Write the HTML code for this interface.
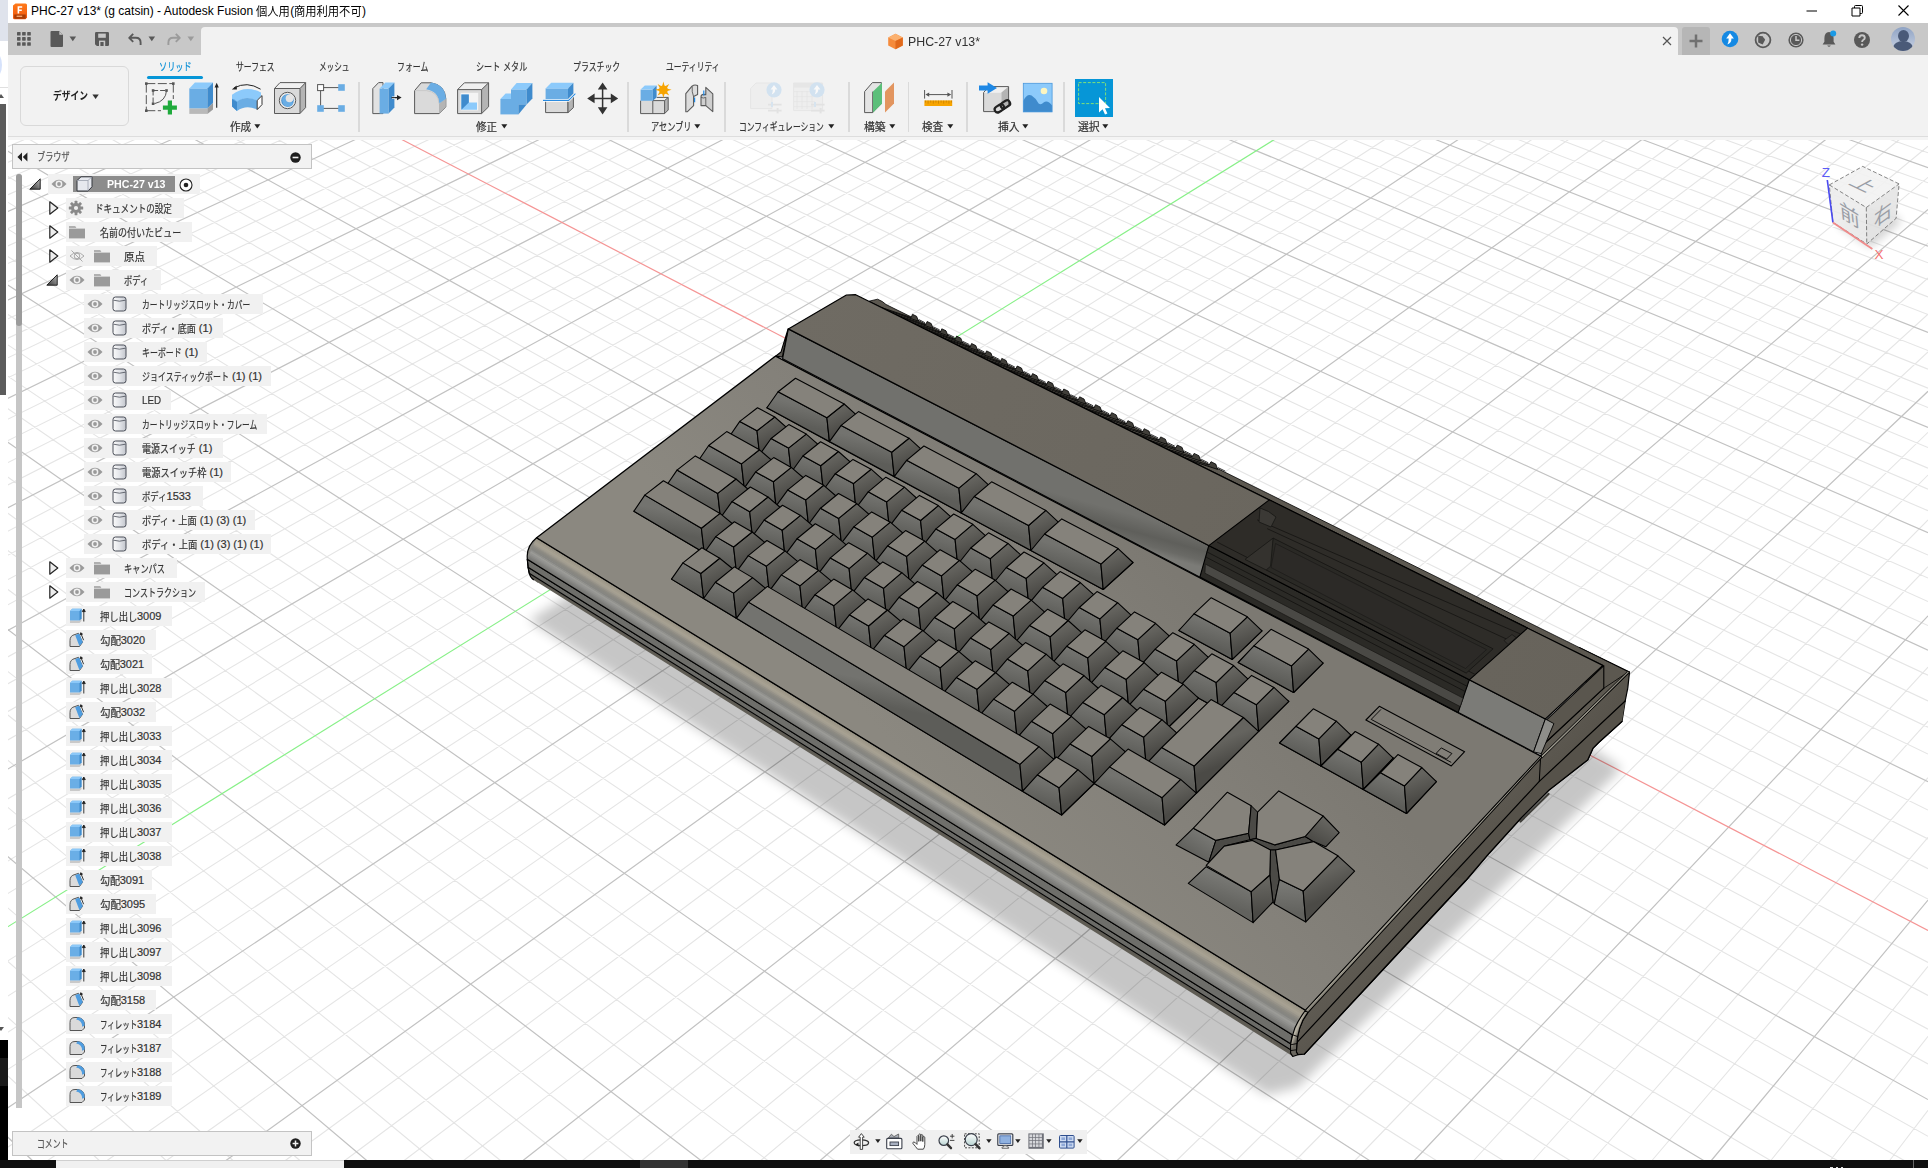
<!DOCTYPE html>
<html lang="ja"><head><meta charset="utf-8"><title>PHC-27 v13* - Autodesk Fusion</title>
<style>
html,body{margin:0;padding:0;background:#fff;overflow:hidden}
body{width:1928px;height:1168px;position:relative;font-family:"Liberation Sans","Noto Sans CJK JP",sans-serif;font-size:11px;color:#333}
#cv{position:absolute;left:0;top:0}
.abs{position:absolute}
.t{position:absolute;white-space:pre;-webkit-text-stroke:0.2px currentColor;transform-origin:0 50%;display:block}
svg.abs{overflow:visible}
.t .c{display:inline-block;vertical-align:top;height:100%}
.t .k{display:inline-block;transform-origin:0 50%;white-space:pre}
.t .a{position:relative;top:-1.4px}

</style></head>
<body>
<svg id="cv" width="1928" height="1168" viewBox="0 0 1928 1168">
<path d="M0.0 149.9L28.0 138.0M0.0 1068.7L100.9 1162.0M0.0 165.7L64.8 138.0M0.0 1010.3L167.8 1162.0M0.0 181.8L101.5 138.0M0.0 954.5L234.7 1162.0M0.0 198.2L138.2 138.0M0.0 901.1L301.6 1162.0M0.0 232.0L211.7 138.0M0.0 800.9L435.4 1162.0M0.0 249.4L248.4 138.0M0.0 753.9L502.3 1162.0M0.0 267.1L285.2 138.0M0.0 708.8L569.2 1162.0M0.0 285.2L321.9 138.0M0.0 665.4L636.0 1162.0M0.0 322.6L395.4 138.0M0.0 583.5L769.8 1162.0M0.0 341.9L432.1 138.0M0.0 544.8L836.7 1162.0M0.0 361.5L468.9 138.0M0.0 507.5L903.6 1162.0M0.0 381.6L505.6 138.0M0.0 471.5L970.5 1162.0M0.0 423.1L579.0 138.0M0.0 403.3L1104.3 1162.0M0.0 444.6L615.8 138.0M0.0 370.9L1171.2 1162.0M0.0 466.5L652.5 138.0M0.0 339.6L1238.0 1162.0M0.0 488.9L689.2 138.0M0.0 309.3L1304.9 1162.0M0.0 535.3L762.7 138.0M0.0 251.6L1438.7 1162.0M0.0 559.3L799.4 138.0M0.0 224.1L1505.6 1162.0M0.0 583.8L836.2 138.0M0.0 197.4L1572.5 1162.0M0.0 609.0L872.9 138.0M0.0 171.6L1639.3 1162.0M0.0 661.2L946.4 138.0M27.1 138.0L1773.1 1162.0M0.0 688.2L983.1 138.0M68.4 138.0L1840.0 1162.0M0.0 716.0L1019.8 138.0M109.7 138.0L1906.9 1162.0M0.0 744.4L1056.5 138.0M151.0 138.0L1928.0 1136.3M0.0 803.5L1130.0 138.0M233.7 138.0L1928.0 1063.9M0.0 834.3L1166.7 138.0M275.0 138.0L1928.0 1029.2M0.0 865.8L1203.4 138.0M316.3 138.0L1928.0 995.4M0.0 898.3L1240.2 138.0M357.6 138.0L1928.0 962.4M0.0 965.8L1313.6 138.0M440.2 138.0L1928.0 899.1M0.0 1001.1L1350.3 138.0M481.6 138.0L1928.0 868.7M0.0 1037.3L1387.1 138.0M522.9 138.0L1928.0 838.9M0.0 1074.6L1423.8 138.0M564.2 138.0L1928.0 810.0M0.0 1152.5L1497.2 138.0M646.8 138.0L1928.0 754.1M45.5 1162.0L1534.0 138.0M688.1 138.0L1928.0 727.2M104.9 1162.0L1570.7 138.0M729.4 138.0L1928.0 700.9M164.4 1162.0L1607.4 138.0M770.8 138.0L1928.0 675.2M283.3 1162.0L1680.9 138.0M853.4 138.0L1928.0 625.5M342.8 1162.0L1717.6 138.0M894.7 138.0L1928.0 601.5M402.2 1162.0L1754.3 138.0M936.0 138.0L1928.0 578.1M461.7 1162.0L1791.0 138.0M977.3 138.0L1928.0 555.1M580.6 1162.0L1864.5 138.0M1059.9 138.0L1928.0 510.7M640.1 1162.0L1901.2 138.0M1101.2 138.0L1928.0 489.2M699.5 1162.0L1928.0 146.2M1142.5 138.0L1928.0 468.2M759.0 1162.0L1928.0 177.3M1183.9 138.0L1928.0 447.6M877.9 1162.0L1928.0 243.1M1266.5 138.0L1928.0 407.6M937.3 1162.0L1928.0 277.9M1307.8 138.0L1928.0 388.2M996.8 1162.0L1928.0 314.2M1349.1 138.0L1928.0 369.2M1056.2 1162.0L1928.0 351.9M1390.4 138.0L1928.0 350.6M1175.1 1162.0L1928.0 432.3M1473.0 138.0L1928.0 314.5M1234.6 1162.0L1928.0 475.1M1514.3 138.0L1928.0 296.9M1294.0 1162.0L1928.0 519.9M1555.6 138.0L1928.0 279.7M1353.5 1162.0L1928.0 566.7M1596.9 138.0L1928.0 262.8M1472.3 1162.0L1928.0 667.1M1679.5 138.0L1928.0 229.9M1531.8 1162.0L1928.0 721.1M1720.8 138.0L1928.0 213.9M1591.2 1162.0L1928.0 777.7M1762.1 138.0L1928.0 198.2M1650.7 1162.0L1928.0 837.3M1803.4 138.0L1928.0 182.8M1769.6 1162.0L1928.0 966.4M1886.0 138.0L1928.0 152.8M1829.0 1162.0L1928.0 1036.3M1927.3 138.0L1928.0 138.2M1888.5 1162.0L1928.0 1110.3" stroke="#e5e5e5" stroke-width="1.1" fill="none"/>
<path d="M0.0 1129.8L34.0 1162.0M0.0 214.9L175.0 138.0M0.0 850.0L368.5 1162.0M0.0 303.7L358.6 138.0M0.0 623.6L702.9 1162.0M0.0 402.1L542.3 138.0M0.0 436.8L1037.4 1162.0M0.0 511.8L726.0 138.0M0.0 280.0L1371.8 1162.0M0.0 634.8L909.6 138.0M0.0 146.5L1706.2 1162.0M0.0 773.6L1093.3 138.0M192.3 138.0L1928.0 1099.6M0.0 1113.0L1460.5 138.0M605.5 138.0L1928.0 781.7M223.9 1162.0L1644.1 138.0M812.1 138.0L1928.0 650.1M521.1 1162.0L1827.7 138.0M1018.6 138.0L1928.0 532.7M818.4 1162.0L1928.0 209.5M1225.2 138.0L1928.0 427.4M1115.7 1162.0L1928.0 391.3M1431.7 138.0L1928.0 332.4M1412.9 1162.0L1928.0 615.8M1638.2 138.0L1928.0 246.2M1710.1 1162.0L1928.0 900.1M1844.7 138.0L1928.0 167.7" stroke="#c2c2c2" stroke-width="1.2" fill="none"/>
<path d="M398.9 138.0L1928.0 930.4" stroke="#f59595" stroke-width="1.2" fill="none"/>
<path d="M0.0 931.6L1276.9 138.0" stroke="#88f088" stroke-width="1.2" fill="none"/>
<defs><filter id="blur" x="-20%" y="-20%" width="140%" height="140%"><feGaussianBlur stdDeviation="6"/></filter></defs><polygon points="529.1,620.2 1267.1,1094.7 1297.9,1087.3 1621.6,768.6 1598.1,752.1 897,389.9" fill="#000" opacity="0.22" filter="url(#blur)"/>
<defs><linearGradient id="g1" gradientUnits="userSpaceOnUse" x1="1420" y1="880" x2="1450" y2="905"><stop offset="0" stop-color="#5e5a52"/><stop offset="1" stop-color="#58544c"/></linearGradient><linearGradient id="g2" gradientUnits="userSpaceOnUse" x1="1292" y1="1030" x2="1299" y2="1033"><stop offset="0" stop-color="#77766f"/><stop offset="0.5" stop-color="#bdb8a9"/><stop offset="1" stop-color="#6a675f"/></linearGradient><linearGradient id="g3" gradientUnits="userSpaceOnUse" x1="1160" y1="555" x2="920" y2="775"><stop offset="0" stop-color="#7c7972"/><stop offset="0.5" stop-color="#84817a"/><stop offset="1" stop-color="#8b8880"/></linearGradient><linearGradient id="g4" gradientUnits="userSpaceOnUse" x1="1420" y1="884" x2="1424.5" y2="888.2"><stop offset="0" stop-color="#5e5b54"/><stop offset="0.5" stop-color="#a19e92"/><stop offset="1" stop-color="#5f5b53"/></linearGradient><linearGradient id="g5" gradientUnits="userSpaceOnUse" x1="1585" y1="712" x2="1588.5" y2="715.6"><stop offset="0" stop-color="#5e5b54"/><stop offset="0.5" stop-color="#a8a598"/><stop offset="1" stop-color="#5f5b53"/></linearGradient><linearGradient id="g6" gradientUnits="userSpaceOnUse" x1="1166.8" y1="524" x2="1158.1" y2="555.3"><stop offset="0" stop-color="#71716d"/><stop offset="0.5" stop-color="#5f5f5b"/><stop offset="0.8" stop-color="#6a6a66"/><stop offset="1" stop-color="#7b7b77"/></linearGradient><linearGradient id="g7" gradientUnits="userSpaceOnUse" x1="788.3" y1="328.9" x2="1602.8" y2="665.4"><stop offset="0" stop-color="#6f6b63"/><stop offset="0.5" stop-color="#6b675f"/><stop offset="1" stop-color="#67635b"/></linearGradient><linearGradient id="g8" gradientUnits="userSpaceOnUse" x1="802.5" y1="404.7" x2="798.1" y2="424.7"><stop offset="0" stop-color="#73736f"/><stop offset="1" stop-color="#5d5d59"/></linearGradient><linearGradient id="g9" gradientUnits="userSpaceOnUse" x1="835.5" y1="410.8" x2="844.4" y2="429.6"><stop offset="0" stop-color="#65645f"/><stop offset="1" stop-color="#4b4a46"/></linearGradient><linearGradient id="g10" gradientUnits="userSpaceOnUse" x1="866.4" y1="438.9" x2="861.8" y2="459.1"><stop offset="0" stop-color="#73736f"/><stop offset="1" stop-color="#5d5d59"/></linearGradient><linearGradient id="g11" gradientUnits="userSpaceOnUse" x1="900.4" y1="445.3" x2="909.1" y2="464.3"><stop offset="0" stop-color="#65645f"/><stop offset="1" stop-color="#4b4a46"/></linearGradient><linearGradient id="g12" gradientUnits="userSpaceOnUse" x1="932.7" y1="474.3" x2="927.7" y2="494.7"><stop offset="0" stop-color="#73736f"/><stop offset="1" stop-color="#5d5d59"/></linearGradient><linearGradient id="g13" gradientUnits="userSpaceOnUse" x1="967.5" y1="480.9" x2="976.3" y2="500.2"><stop offset="0" stop-color="#65645f"/><stop offset="1" stop-color="#4b4a46"/></linearGradient><linearGradient id="g14" gradientUnits="userSpaceOnUse" x1="1001.4" y1="511" x2="996.1" y2="531.7"><stop offset="0" stop-color="#73736f"/><stop offset="1" stop-color="#5d5d59"/></linearGradient><linearGradient id="g15" gradientUnits="userSpaceOnUse" x1="1037.2" y1="517.9" x2="1045.9" y2="537.4"><stop offset="0" stop-color="#65645f"/><stop offset="1" stop-color="#4b4a46"/></linearGradient><linearGradient id="g16" gradientUnits="userSpaceOnUse" x1="1072.7" y1="549" x2="1067" y2="570"><stop offset="0" stop-color="#73736f"/><stop offset="1" stop-color="#5d5d59"/></linearGradient><linearGradient id="g17" gradientUnits="userSpaceOnUse" x1="1109.5" y1="556.3" x2="1118.1" y2="576"><stop offset="0" stop-color="#65645f"/><stop offset="1" stop-color="#4b4a46"/></linearGradient><linearGradient id="g18" gradientUnits="userSpaceOnUse" x1="1212.1" y1="623.5" x2="1205.6" y2="644.9"><stop offset="0" stop-color="#73736f"/><stop offset="1" stop-color="#5d5d59"/></linearGradient><linearGradient id="g19" gradientUnits="userSpaceOnUse" x1="1238.8" y1="625" x2="1247.2" y2="645.1"><stop offset="0" stop-color="#65645f"/><stop offset="1" stop-color="#4b4a46"/></linearGradient><linearGradient id="g20" gradientUnits="userSpaceOnUse" x1="1272.7" y1="655.9" x2="1265.9" y2="677.5"><stop offset="0" stop-color="#73736f"/><stop offset="1" stop-color="#5d5d59"/></linearGradient><linearGradient id="g21" gradientUnits="userSpaceOnUse" x1="1300.1" y1="657.5" x2="1308.3" y2="677.8"><stop offset="0" stop-color="#65645f"/><stop offset="1" stop-color="#4b4a46"/></linearGradient><linearGradient id="g22" gradientUnits="userSpaceOnUse" x1="748.4" y1="426.1" x2="744.1" y2="446.1"><stop offset="0" stop-color="#73736f"/><stop offset="1" stop-color="#5d5d59"/></linearGradient><linearGradient id="g23" gradientUnits="userSpaceOnUse" x1="765.8" y1="423.9" x2="774.9" y2="442.6"><stop offset="0" stop-color="#65645f"/><stop offset="1" stop-color="#4b4a46"/></linearGradient><linearGradient id="g24" gradientUnits="userSpaceOnUse" x1="779.8" y1="443.3" x2="775.4" y2="463.4"><stop offset="0" stop-color="#73736f"/><stop offset="1" stop-color="#5d5d59"/></linearGradient><linearGradient id="g25" gradientUnits="userSpaceOnUse" x1="797.4" y1="441.1" x2="806.5" y2="459.9"><stop offset="0" stop-color="#65645f"/><stop offset="1" stop-color="#4b4a46"/></linearGradient><linearGradient id="g26" gradientUnits="userSpaceOnUse" x1="811.8" y1="460.8" x2="807.2" y2="481.1"><stop offset="0" stop-color="#73736f"/><stop offset="1" stop-color="#5d5d59"/></linearGradient><linearGradient id="g27" gradientUnits="userSpaceOnUse" x1="829.5" y1="458.6" x2="838.6" y2="477.6"><stop offset="0" stop-color="#65645f"/><stop offset="1" stop-color="#4b4a46"/></linearGradient><linearGradient id="g28" gradientUnits="userSpaceOnUse" x1="844.3" y1="478.7" x2="839.6" y2="499"><stop offset="0" stop-color="#73736f"/><stop offset="1" stop-color="#5d5d59"/></linearGradient><linearGradient id="g29" gradientUnits="userSpaceOnUse" x1="862.2" y1="476.4" x2="871.2" y2="495.5"><stop offset="0" stop-color="#65645f"/><stop offset="1" stop-color="#4b4a46"/></linearGradient><linearGradient id="g30" gradientUnits="userSpaceOnUse" x1="877.5" y1="496.8" x2="872.6" y2="517.3"><stop offset="0" stop-color="#73736f"/><stop offset="1" stop-color="#5d5d59"/></linearGradient><linearGradient id="g31" gradientUnits="userSpaceOnUse" x1="895.5" y1="494.6" x2="904.5" y2="513.8"><stop offset="0" stop-color="#65645f"/><stop offset="1" stop-color="#4b4a46"/></linearGradient><linearGradient id="g32" gradientUnits="userSpaceOnUse" x1="911.2" y1="515.3" x2="906.1" y2="535.9"><stop offset="0" stop-color="#73736f"/><stop offset="1" stop-color="#5d5d59"/></linearGradient><linearGradient id="g33" gradientUnits="userSpaceOnUse" x1="929.4" y1="513" x2="938.4" y2="532.4"><stop offset="0" stop-color="#65645f"/><stop offset="1" stop-color="#4b4a46"/></linearGradient><linearGradient id="g34" gradientUnits="userSpaceOnUse" x1="945.6" y1="534.2" x2="940.3" y2="554.9"><stop offset="0" stop-color="#73736f"/><stop offset="1" stop-color="#5d5d59"/></linearGradient><linearGradient id="g35" gradientUnits="userSpaceOnUse" x1="964" y1="531.9" x2="972.9" y2="551.3"><stop offset="0" stop-color="#65645f"/><stop offset="1" stop-color="#4b4a46"/></linearGradient><linearGradient id="g36" gradientUnits="userSpaceOnUse" x1="980.6" y1="553.4" x2="975.2" y2="574.2"><stop offset="0" stop-color="#73736f"/><stop offset="1" stop-color="#5d5d59"/></linearGradient><linearGradient id="g37" gradientUnits="userSpaceOnUse" x1="999.1" y1="551" x2="1008" y2="570.6"><stop offset="0" stop-color="#65645f"/><stop offset="1" stop-color="#4b4a46"/></linearGradient><linearGradient id="g38" gradientUnits="userSpaceOnUse" x1="1016.2" y1="573" x2="1010.7" y2="593.9"><stop offset="0" stop-color="#73736f"/><stop offset="1" stop-color="#5d5d59"/></linearGradient><linearGradient id="g39" gradientUnits="userSpaceOnUse" x1="1035" y1="570.6" x2="1043.8" y2="590.2"><stop offset="0" stop-color="#65645f"/><stop offset="1" stop-color="#4b4a46"/></linearGradient><linearGradient id="g40" gradientUnits="userSpaceOnUse" x1="1052.6" y1="592.9" x2="1046.8" y2="614"><stop offset="0" stop-color="#73736f"/><stop offset="1" stop-color="#5d5d59"/></linearGradient><linearGradient id="g41" gradientUnits="userSpaceOnUse" x1="1071.5" y1="590.5" x2="1080.3" y2="610.3"><stop offset="0" stop-color="#65645f"/><stop offset="1" stop-color="#4b4a46"/></linearGradient><linearGradient id="g42" gradientUnits="userSpaceOnUse" x1="1089.6" y1="613.2" x2="1083.7" y2="634.4"><stop offset="0" stop-color="#73736f"/><stop offset="1" stop-color="#5d5d59"/></linearGradient><linearGradient id="g43" gradientUnits="userSpaceOnUse" x1="1108.8" y1="610.8" x2="1117.5" y2="630.7"><stop offset="0" stop-color="#65645f"/><stop offset="1" stop-color="#4b4a46"/></linearGradient><linearGradient id="g44" gradientUnits="userSpaceOnUse" x1="1127.4" y1="633.9" x2="1121.2" y2="655.3"><stop offset="0" stop-color="#73736f"/><stop offset="1" stop-color="#5d5d59"/></linearGradient><linearGradient id="g45" gradientUnits="userSpaceOnUse" x1="1146.7" y1="631.5" x2="1155.4" y2="651.5"><stop offset="0" stop-color="#65645f"/><stop offset="1" stop-color="#4b4a46"/></linearGradient><linearGradient id="g46" gradientUnits="userSpaceOnUse" x1="1165.9" y1="655" x2="1159.5" y2="676.5"><stop offset="0" stop-color="#73736f"/><stop offset="1" stop-color="#5d5d59"/></linearGradient><linearGradient id="g47" gradientUnits="userSpaceOnUse" x1="1185.4" y1="652.6" x2="1194.1" y2="672.7"><stop offset="0" stop-color="#65645f"/><stop offset="1" stop-color="#4b4a46"/></linearGradient><linearGradient id="g48" gradientUnits="userSpaceOnUse" x1="1205.2" y1="676.6" x2="1198.6" y2="698.2"><stop offset="0" stop-color="#73736f"/><stop offset="1" stop-color="#5d5d59"/></linearGradient><linearGradient id="g49" gradientUnits="userSpaceOnUse" x1="1224.9" y1="674.1" x2="1233.5" y2="694.4"><stop offset="0" stop-color="#65645f"/><stop offset="1" stop-color="#4b4a46"/></linearGradient><linearGradient id="g50" gradientUnits="userSpaceOnUse" x1="1245.3" y1="698.5" x2="1238.4" y2="720.3"><stop offset="0" stop-color="#73736f"/><stop offset="1" stop-color="#5d5d59"/></linearGradient><linearGradient id="g51" gradientUnits="userSpaceOnUse" x1="1265.2" y1="696" x2="1273.7" y2="716.4"><stop offset="0" stop-color="#65645f"/><stop offset="1" stop-color="#4b4a46"/></linearGradient><linearGradient id="g52" gradientUnits="userSpaceOnUse" x1="1307.4" y1="732.6" x2="1300.2" y2="754.5"><stop offset="0" stop-color="#73736f"/><stop offset="1" stop-color="#5d5d59"/></linearGradient><linearGradient id="g53" gradientUnits="userSpaceOnUse" x1="1327.6" y1="730.1" x2="1336" y2="750.6"><stop offset="0" stop-color="#65645f"/><stop offset="1" stop-color="#4b4a46"/></linearGradient><linearGradient id="g54" gradientUnits="userSpaceOnUse" x1="1349.5" y1="755.7" x2="1342.1" y2="777.8"><stop offset="0" stop-color="#73736f"/><stop offset="1" stop-color="#5d5d59"/></linearGradient><linearGradient id="g55" gradientUnits="userSpaceOnUse" x1="1369.9" y1="753.2" x2="1378.3" y2="773.8"><stop offset="0" stop-color="#65645f"/><stop offset="1" stop-color="#4b4a46"/></linearGradient><linearGradient id="g56" gradientUnits="userSpaceOnUse" x1="1392.5" y1="779.3" x2="1384.9" y2="801.5"><stop offset="0" stop-color="#73736f"/><stop offset="1" stop-color="#5d5d59"/></linearGradient><linearGradient id="g57" gradientUnits="userSpaceOnUse" x1="1413.2" y1="776.7" x2="1421.4" y2="797.5"><stop offset="0" stop-color="#65645f"/><stop offset="1" stop-color="#4b4a46"/></linearGradient><linearGradient id="g58" gradientUnits="userSpaceOnUse" x1="725.1" y1="454.7" x2="720.9" y2="474.9"><stop offset="0" stop-color="#73736f"/><stop offset="1" stop-color="#5d5d59"/></linearGradient><linearGradient id="g59" gradientUnits="userSpaceOnUse" x1="750.5" y1="456.9" x2="759.8" y2="475.7"><stop offset="0" stop-color="#65645f"/><stop offset="1" stop-color="#4b4a46"/></linearGradient><linearGradient id="g60" gradientUnits="userSpaceOnUse" x1="764.5" y1="476.8" x2="760.1" y2="497.1"><stop offset="0" stop-color="#73736f"/><stop offset="1" stop-color="#5d5d59"/></linearGradient><linearGradient id="g61" gradientUnits="userSpaceOnUse" x1="782.3" y1="474.6" x2="791.6" y2="493.6"><stop offset="0" stop-color="#65645f"/><stop offset="1" stop-color="#4b4a46"/></linearGradient><linearGradient id="g62" gradientUnits="userSpaceOnUse" x1="796.8" y1="494.9" x2="792.2" y2="515.3"><stop offset="0" stop-color="#73736f"/><stop offset="1" stop-color="#5d5d59"/></linearGradient><linearGradient id="g63" gradientUnits="userSpaceOnUse" x1="814.7" y1="492.6" x2="824" y2="511.7"><stop offset="0" stop-color="#65645f"/><stop offset="1" stop-color="#4b4a46"/></linearGradient><linearGradient id="g64" gradientUnits="userSpaceOnUse" x1="829.6" y1="513.3" x2="824.9" y2="533.8"><stop offset="0" stop-color="#73736f"/><stop offset="1" stop-color="#5d5d59"/></linearGradient><linearGradient id="g65" gradientUnits="userSpaceOnUse" x1="847.7" y1="511" x2="856.9" y2="530.2"><stop offset="0" stop-color="#65645f"/><stop offset="1" stop-color="#4b4a46"/></linearGradient><linearGradient id="g66" gradientUnits="userSpaceOnUse" x1="863.1" y1="532" x2="858.1" y2="552.6"><stop offset="0" stop-color="#73736f"/><stop offset="1" stop-color="#5d5d59"/></linearGradient><linearGradient id="g67" gradientUnits="userSpaceOnUse" x1="881.3" y1="529.7" x2="890.5" y2="549"><stop offset="0" stop-color="#65645f"/><stop offset="1" stop-color="#4b4a46"/></linearGradient><linearGradient id="g68" gradientUnits="userSpaceOnUse" x1="897.1" y1="551.1" x2="892" y2="571.8"><stop offset="0" stop-color="#73736f"/><stop offset="1" stop-color="#5d5d59"/></linearGradient><linearGradient id="g69" gradientUnits="userSpaceOnUse" x1="915.6" y1="548.8" x2="924.7" y2="568.2"><stop offset="0" stop-color="#65645f"/><stop offset="1" stop-color="#4b4a46"/></linearGradient><linearGradient id="g70" gradientUnits="userSpaceOnUse" x1="931.8" y1="570.5" x2="926.6" y2="591.4"><stop offset="0" stop-color="#73736f"/><stop offset="1" stop-color="#5d5d59"/></linearGradient><linearGradient id="g71" gradientUnits="userSpaceOnUse" x1="950.4" y1="568.2" x2="959.5" y2="587.7"><stop offset="0" stop-color="#65645f"/><stop offset="1" stop-color="#4b4a46"/></linearGradient><linearGradient id="g72" gradientUnits="userSpaceOnUse" x1="967.2" y1="590.3" x2="961.7" y2="611.3"><stop offset="0" stop-color="#73736f"/><stop offset="1" stop-color="#5d5d59"/></linearGradient><linearGradient id="g73" gradientUnits="userSpaceOnUse" x1="986" y1="588" x2="995" y2="607.6"><stop offset="0" stop-color="#65645f"/><stop offset="1" stop-color="#4b4a46"/></linearGradient><linearGradient id="g74" gradientUnits="userSpaceOnUse" x1="1003.2" y1="610.5" x2="997.6" y2="631.6"><stop offset="0" stop-color="#73736f"/><stop offset="1" stop-color="#5d5d59"/></linearGradient><linearGradient id="g75" gradientUnits="userSpaceOnUse" x1="1022.2" y1="608.1" x2="1031.2" y2="627.9"><stop offset="0" stop-color="#65645f"/><stop offset="1" stop-color="#4b4a46"/></linearGradient><linearGradient id="g76" gradientUnits="userSpaceOnUse" x1="1039.9" y1="631.1" x2="1034.1" y2="652.3"><stop offset="0" stop-color="#73736f"/><stop offset="1" stop-color="#5d5d59"/></linearGradient><linearGradient id="g77" gradientUnits="userSpaceOnUse" x1="1059.1" y1="628.7" x2="1068.1" y2="648.6"><stop offset="0" stop-color="#65645f"/><stop offset="1" stop-color="#4b4a46"/></linearGradient><linearGradient id="g78" gradientUnits="userSpaceOnUse" x1="1077.4" y1="652.1" x2="1071.4" y2="673.4"><stop offset="0" stop-color="#73736f"/><stop offset="1" stop-color="#5d5d59"/></linearGradient><linearGradient id="g79" gradientUnits="userSpaceOnUse" x1="1096.7" y1="649.6" x2="1105.7" y2="669.7"><stop offset="0" stop-color="#65645f"/><stop offset="1" stop-color="#4b4a46"/></linearGradient><linearGradient id="g80" gradientUnits="userSpaceOnUse" x1="1115.6" y1="673.4" x2="1109.3" y2="694.9"><stop offset="0" stop-color="#73736f"/><stop offset="1" stop-color="#5d5d59"/></linearGradient><linearGradient id="g81" gradientUnits="userSpaceOnUse" x1="1135.1" y1="671" x2="1144" y2="691.1"><stop offset="0" stop-color="#65645f"/><stop offset="1" stop-color="#4b4a46"/></linearGradient><linearGradient id="g82" gradientUnits="userSpaceOnUse" x1="1154.5" y1="695.3" x2="1148.1" y2="716.9"><stop offset="0" stop-color="#73736f"/><stop offset="1" stop-color="#5d5d59"/></linearGradient><linearGradient id="g83" gradientUnits="userSpaceOnUse" x1="1174.3" y1="692.8" x2="1183.1" y2="713.1"><stop offset="0" stop-color="#65645f"/><stop offset="1" stop-color="#4b4a46"/></linearGradient><linearGradient id="g84" gradientUnits="userSpaceOnUse" x1="697.4" y1="481.8" x2="693.2" y2="502"><stop offset="0" stop-color="#73736f"/><stop offset="1" stop-color="#5d5d59"/></linearGradient><linearGradient id="g85" gradientUnits="userSpaceOnUse" x1="726.9" y1="486.2" x2="736.3" y2="505.2"><stop offset="0" stop-color="#65645f"/><stop offset="1" stop-color="#4b4a46"/></linearGradient><linearGradient id="g86" gradientUnits="userSpaceOnUse" x1="740.8" y1="506.6" x2="736.5" y2="527"><stop offset="0" stop-color="#73736f"/><stop offset="1" stop-color="#5d5d59"/></linearGradient><linearGradient id="g87" gradientUnits="userSpaceOnUse" x1="758.8" y1="504.4" x2="768.2" y2="523.5"><stop offset="0" stop-color="#65645f"/><stop offset="1" stop-color="#4b4a46"/></linearGradient><linearGradient id="g88" gradientUnits="userSpaceOnUse" x1="773.2" y1="525.2" x2="768.7" y2="545.7"><stop offset="0" stop-color="#73736f"/><stop offset="1" stop-color="#5d5d59"/></linearGradient><linearGradient id="g89" gradientUnits="userSpaceOnUse" x1="791.4" y1="522.9" x2="800.8" y2="542.1"><stop offset="0" stop-color="#65645f"/><stop offset="1" stop-color="#4b4a46"/></linearGradient><linearGradient id="g90" gradientUnits="userSpaceOnUse" x1="806.2" y1="544" x2="801.5" y2="564.6"><stop offset="0" stop-color="#73736f"/><stop offset="1" stop-color="#5d5d59"/></linearGradient><linearGradient id="g91" gradientUnits="userSpaceOnUse" x1="824.5" y1="541.7" x2="833.9" y2="561"><stop offset="0" stop-color="#65645f"/><stop offset="1" stop-color="#4b4a46"/></linearGradient><linearGradient id="g92" gradientUnits="userSpaceOnUse" x1="839.8" y1="563.3" x2="834.9" y2="584"><stop offset="0" stop-color="#73736f"/><stop offset="1" stop-color="#5d5d59"/></linearGradient><linearGradient id="g93" gradientUnits="userSpaceOnUse" x1="858.3" y1="560.9" x2="867.6" y2="580.4"><stop offset="0" stop-color="#65645f"/><stop offset="1" stop-color="#4b4a46"/></linearGradient><linearGradient id="g94" gradientUnits="userSpaceOnUse" x1="874" y1="582.8" x2="868.9" y2="603.7"><stop offset="0" stop-color="#73736f"/><stop offset="1" stop-color="#5d5d59"/></linearGradient><linearGradient id="g95" gradientUnits="userSpaceOnUse" x1="892.7" y1="580.5" x2="902" y2="600"><stop offset="0" stop-color="#65645f"/><stop offset="1" stop-color="#4b4a46"/></linearGradient><linearGradient id="g96" gradientUnits="userSpaceOnUse" x1="908.9" y1="602.8" x2="903.6" y2="623.8"><stop offset="0" stop-color="#73736f"/><stop offset="1" stop-color="#5d5d59"/></linearGradient><linearGradient id="g97" gradientUnits="userSpaceOnUse" x1="927.7" y1="600.4" x2="937" y2="620.1"><stop offset="0" stop-color="#65645f"/><stop offset="1" stop-color="#4b4a46"/></linearGradient><linearGradient id="g98" gradientUnits="userSpaceOnUse" x1="944.4" y1="623.1" x2="939" y2="644.2"><stop offset="0" stop-color="#73736f"/><stop offset="1" stop-color="#5d5d59"/></linearGradient><linearGradient id="g99" gradientUnits="userSpaceOnUse" x1="963.4" y1="620.7" x2="972.7" y2="640.5"><stop offset="0" stop-color="#65645f"/><stop offset="1" stop-color="#4b4a46"/></linearGradient><linearGradient id="g100" gradientUnits="userSpaceOnUse" x1="980.6" y1="643.9" x2="975" y2="665.1"><stop offset="0" stop-color="#73736f"/><stop offset="1" stop-color="#5d5d59"/></linearGradient><linearGradient id="g101" gradientUnits="userSpaceOnUse" x1="999.8" y1="641.4" x2="1009" y2="661.3"><stop offset="0" stop-color="#65645f"/><stop offset="1" stop-color="#4b4a46"/></linearGradient><linearGradient id="g102" gradientUnits="userSpaceOnUse" x1="1017.6" y1="665" x2="1011.8" y2="686.4"><stop offset="0" stop-color="#73736f"/><stop offset="1" stop-color="#5d5d59"/></linearGradient><linearGradient id="g103" gradientUnits="userSpaceOnUse" x1="1037" y1="662.6" x2="1046.1" y2="682.6"><stop offset="0" stop-color="#65645f"/><stop offset="1" stop-color="#4b4a46"/></linearGradient><linearGradient id="g104" gradientUnits="userSpaceOnUse" x1="1055.2" y1="686.6" x2="1049.2" y2="708"><stop offset="0" stop-color="#73736f"/><stop offset="1" stop-color="#5d5d59"/></linearGradient><linearGradient id="g105" gradientUnits="userSpaceOnUse" x1="1074.8" y1="684.1" x2="1083.9" y2="704.2"><stop offset="0" stop-color="#65645f"/><stop offset="1" stop-color="#4b4a46"/></linearGradient><linearGradient id="g106" gradientUnits="userSpaceOnUse" x1="1093.6" y1="708.5" x2="1087.4" y2="730.2"><stop offset="0" stop-color="#73736f"/><stop offset="1" stop-color="#5d5d59"/></linearGradient><linearGradient id="g107" gradientUnits="userSpaceOnUse" x1="1113.4" y1="706.1" x2="1122.5" y2="726.3"><stop offset="0" stop-color="#65645f"/><stop offset="1" stop-color="#4b4a46"/></linearGradient><linearGradient id="g108" gradientUnits="userSpaceOnUse" x1="1132.8" y1="731" x2="1126.4" y2="752.7"><stop offset="0" stop-color="#73736f"/><stop offset="1" stop-color="#5d5d59"/></linearGradient><linearGradient id="g109" gradientUnits="userSpaceOnUse" x1="1152.8" y1="728.5" x2="1161.8" y2="748.8"><stop offset="0" stop-color="#65645f"/><stop offset="1" stop-color="#4b4a46"/></linearGradient><linearGradient id="g110" gradientUnits="userSpaceOnUse" x1="1177.9" y1="756.8" x2="1171.3" y2="778.7"><stop offset="0" stop-color="#73736f"/><stop offset="1" stop-color="#5d5d59"/></linearGradient><linearGradient id="g111" gradientUnits="userSpaceOnUse" x1="1218.7" y1="741.8" x2="1227.5" y2="762.3"><stop offset="0" stop-color="#65645f"/><stop offset="1" stop-color="#4b4a46"/></linearGradient><linearGradient id="g112" gradientUnits="userSpaceOnUse" x1="1204.6" y1="834.3" x2="1192.4" y2="853.5"><stop offset="0" stop-color="#787874"/><stop offset="1" stop-color="#62625e"/></linearGradient><linearGradient id="g113" gradientUnits="userSpaceOnUse" x1="1331.1" y1="824.3" x2="1319.6" y2="844.2"><stop offset="0" stop-color="#65645f"/><stop offset="1" stop-color="#4b4a46"/></linearGradient><linearGradient id="g114" gradientUnits="userSpaceOnUse" x1="673.1" y1="511.6" x2="669" y2="532"><stop offset="0" stop-color="#73736f"/><stop offset="1" stop-color="#5d5d59"/></linearGradient><linearGradient id="g115" gradientUnits="userSpaceOnUse" x1="710.7" y1="520.8" x2="720.3" y2="539.9"><stop offset="0" stop-color="#65645f"/><stop offset="1" stop-color="#4b4a46"/></linearGradient><linearGradient id="g116" gradientUnits="userSpaceOnUse" x1="724.7" y1="541.8" x2="720.3" y2="562.3"><stop offset="0" stop-color="#73736f"/><stop offset="1" stop-color="#5d5d59"/></linearGradient><linearGradient id="g117" gradientUnits="userSpaceOnUse" x1="742.9" y1="539.5" x2="752.5" y2="558.7"><stop offset="0" stop-color="#65645f"/><stop offset="1" stop-color="#4b4a46"/></linearGradient><linearGradient id="g118" gradientUnits="userSpaceOnUse" x1="757.3" y1="560.9" x2="752.8" y2="581.5"><stop offset="0" stop-color="#73736f"/><stop offset="1" stop-color="#5d5d59"/></linearGradient><linearGradient id="g119" gradientUnits="userSpaceOnUse" x1="775.7" y1="558.6" x2="785.3" y2="577.9"><stop offset="0" stop-color="#65645f"/><stop offset="1" stop-color="#4b4a46"/></linearGradient><linearGradient id="g120" gradientUnits="userSpaceOnUse" x1="790.6" y1="580.4" x2="785.9" y2="601.1"><stop offset="0" stop-color="#73736f"/><stop offset="1" stop-color="#5d5d59"/></linearGradient><linearGradient id="g121" gradientUnits="userSpaceOnUse" x1="809.2" y1="578" x2="818.7" y2="597.5"><stop offset="0" stop-color="#65645f"/><stop offset="1" stop-color="#4b4a46"/></linearGradient><linearGradient id="g122" gradientUnits="userSpaceOnUse" x1="824.5" y1="600.2" x2="819.6" y2="621.1"><stop offset="0" stop-color="#73736f"/><stop offset="1" stop-color="#5d5d59"/></linearGradient><linearGradient id="g123" gradientUnits="userSpaceOnUse" x1="843.2" y1="597.8" x2="852.8" y2="617.4"><stop offset="0" stop-color="#65645f"/><stop offset="1" stop-color="#4b4a46"/></linearGradient><linearGradient id="g124" gradientUnits="userSpaceOnUse" x1="859" y1="620.4" x2="854" y2="641.4"><stop offset="0" stop-color="#73736f"/><stop offset="1" stop-color="#5d5d59"/></linearGradient><linearGradient id="g125" gradientUnits="userSpaceOnUse" x1="878" y1="618" x2="887.4" y2="637.7"><stop offset="0" stop-color="#65645f"/><stop offset="1" stop-color="#4b4a46"/></linearGradient><linearGradient id="g126" gradientUnits="userSpaceOnUse" x1="894.2" y1="641" x2="889" y2="662.1"><stop offset="0" stop-color="#73736f"/><stop offset="1" stop-color="#5d5d59"/></linearGradient><linearGradient id="g127" gradientUnits="userSpaceOnUse" x1="913.4" y1="638.6" x2="922.8" y2="658.4"><stop offset="0" stop-color="#65645f"/><stop offset="1" stop-color="#4b4a46"/></linearGradient><linearGradient id="g128" gradientUnits="userSpaceOnUse" x1="930.1" y1="662" x2="924.7" y2="683.2"><stop offset="0" stop-color="#73736f"/><stop offset="1" stop-color="#5d5d59"/></linearGradient><linearGradient id="g129" gradientUnits="userSpaceOnUse" x1="949.4" y1="659.6" x2="958.8" y2="679.5"><stop offset="0" stop-color="#65645f"/><stop offset="1" stop-color="#4b4a46"/></linearGradient><linearGradient id="g130" gradientUnits="userSpaceOnUse" x1="966.7" y1="683.4" x2="961.1" y2="704.8"><stop offset="0" stop-color="#73736f"/><stop offset="1" stop-color="#5d5d59"/></linearGradient><linearGradient id="g131" gradientUnits="userSpaceOnUse" x1="986.2" y1="680.9" x2="995.6" y2="701"><stop offset="0" stop-color="#65645f"/><stop offset="1" stop-color="#4b4a46"/></linearGradient><linearGradient id="g132" gradientUnits="userSpaceOnUse" x1="1004.1" y1="705.2" x2="998.2" y2="726.7"><stop offset="0" stop-color="#73736f"/><stop offset="1" stop-color="#5d5d59"/></linearGradient><linearGradient id="g133" gradientUnits="userSpaceOnUse" x1="1023.7" y1="702.7" x2="1033.1" y2="722.9"><stop offset="0" stop-color="#65645f"/><stop offset="1" stop-color="#4b4a46"/></linearGradient><linearGradient id="g134" gradientUnits="userSpaceOnUse" x1="1042.1" y1="727.5" x2="1036.1" y2="749.1"><stop offset="0" stop-color="#73736f"/><stop offset="1" stop-color="#5d5d59"/></linearGradient><linearGradient id="g135" gradientUnits="userSpaceOnUse" x1="1062" y1="725" x2="1071.3" y2="745.3"><stop offset="0" stop-color="#65645f"/><stop offset="1" stop-color="#4b4a46"/></linearGradient><linearGradient id="g136" gradientUnits="userSpaceOnUse" x1="1081" y1="750.2" x2="1074.7" y2="772"><stop offset="0" stop-color="#73736f"/><stop offset="1" stop-color="#5d5d59"/></linearGradient><linearGradient id="g137" gradientUnits="userSpaceOnUse" x1="1101.1" y1="747.7" x2="1110.3" y2="768.1"><stop offset="0" stop-color="#65645f"/><stop offset="1" stop-color="#4b4a46"/></linearGradient><linearGradient id="g138" gradientUnits="userSpaceOnUse" x1="1135.8" y1="782.3" x2="1129.3" y2="804.3"><stop offset="0" stop-color="#73736f"/><stop offset="1" stop-color="#5d5d59"/></linearGradient><linearGradient id="g139" gradientUnits="userSpaceOnUse" x1="1171.3" y1="788.5" x2="1180.4" y2="809.1"><stop offset="0" stop-color="#65645f"/><stop offset="1" stop-color="#4b4a46"/></linearGradient><linearGradient id="g140" gradientUnits="userSpaceOnUse" x1="691.9" y1="568.2" x2="687.6" y2="588.8"><stop offset="0" stop-color="#73736f"/><stop offset="1" stop-color="#5d5d59"/></linearGradient><linearGradient id="g141" gradientUnits="userSpaceOnUse" x1="710.2" y1="565.9" x2="720" y2="585.2"><stop offset="0" stop-color="#65645f"/><stop offset="1" stop-color="#4b4a46"/></linearGradient><linearGradient id="g142" gradientUnits="userSpaceOnUse" x1="724.5" y1="587.7" x2="720" y2="608.4"><stop offset="0" stop-color="#73736f"/><stop offset="1" stop-color="#5d5d59"/></linearGradient><linearGradient id="g143" gradientUnits="userSpaceOnUse" x1="743" y1="585.4" x2="752.8" y2="604.8"><stop offset="0" stop-color="#65645f"/><stop offset="1" stop-color="#4b4a46"/></linearGradient><linearGradient id="g144" gradientUnits="userSpaceOnUse" x1="884.2" y1="683.2" x2="879.5" y2="704.8"><stop offset="0" stop-color="#73736f"/><stop offset="1" stop-color="#5d5d59"/></linearGradient><linearGradient id="g145" gradientUnits="userSpaceOnUse" x1="1029.4" y1="755.5" x2="1038.9" y2="775.9"><stop offset="0" stop-color="#65645f"/><stop offset="1" stop-color="#4b4a46"/></linearGradient><linearGradient id="g146" gradientUnits="userSpaceOnUse" x1="1048.2" y1="781.3" x2="1042" y2="803.1"><stop offset="0" stop-color="#73736f"/><stop offset="1" stop-color="#5d5d59"/></linearGradient><linearGradient id="g147" gradientUnits="userSpaceOnUse" x1="1068.5" y1="778.8" x2="1077.9" y2="799.2"><stop offset="0" stop-color="#65645f"/><stop offset="1" stop-color="#4b4a46"/></linearGradient><linearGradient id="g148" gradientUnits="userSpaceOnUse" x1="1228.7" y1="879.2" x2="1220.7" y2="903"><stop offset="0" stop-color="#787874"/><stop offset="1" stop-color="#62625e"/></linearGradient><linearGradient id="g149" gradientUnits="userSpaceOnUse" x1="1260.5" y1="883.4" x2="1263.1" y2="912.3"><stop offset="0" stop-color="#65645f"/><stop offset="1" stop-color="#4b4a46"/></linearGradient><linearGradient id="g150" gradientUnits="userSpaceOnUse" x1="1291.3" y1="885.3" x2="1290" y2="912.9"><stop offset="0" stop-color="#787874"/><stop offset="1" stop-color="#62625e"/></linearGradient><linearGradient id="g151" gradientUnits="userSpaceOnUse" x1="1320.5" y1="873.4" x2="1330.2" y2="896.6"><stop offset="0" stop-color="#65645f"/><stop offset="1" stop-color="#4b4a46"/></linearGradient></defs>
<g id="model">
<polygon points="1308,1012.4 1542,757 1629.5,672.1 1627.8,688 1625.2,701 1622,721.4 1598.4,742.8 1593.1,748.1 1587.7,759.9 1549.2,789.9 1521.4,817.7 1489.2,853.2 1466.3,880 1304.4,1054.1 1298.1,1054.7 1296.4,1052.2 1296.8,1044.8 1297.7,1036.4 1299.7,1028.1 1303.1,1019.8" fill="url(#g1)" stroke="#000" stroke-width="1.2" stroke-linejoin="round"/>
<polygon points="1539.3,781.4 1625.2,701 1622,721.4 1598.4,742.8 1593.1,748.1 1587.7,759.9 1549.2,789.9 1521.4,817.7 1489.2,853.2 1466.3,880 1452,875.5" fill="#56524a" stroke="none" stroke-width="0" stroke-linejoin="round"/>
<polyline points="1520.5,821.5 1548.5,794" fill="none" stroke="#26241f" stroke-width="2.2" stroke-linecap="round" opacity="0.85"/>
<polyline points="1296.8,1042.7 1539.3,781.4 1625.2,701" fill="none" stroke="#000" stroke-width="1.2" stroke-linejoin="round" stroke-linecap="round"/>
<polyline points="1540.6,756.7 1539.3,781.4" fill="none" stroke="#000" stroke-width="1.0" stroke-linejoin="round" stroke-linecap="round"/>
<polyline points="1304.4,1054.1 1466.3,880 1489.2,853.2 1521.4,817.7 1549.2,789.9 1587.7,759.9 1593.1,748.1 1598.4,742.8 1622,721.4" fill="none" stroke="#000" stroke-width="1.3" stroke-linejoin="round" stroke-linecap="round"/>
<path d="M536.6 537.7 Q527.5 545 527.2 556 L527.3 559.3 L528.1 567.3 L529.2 573.2 Q530.5 578 533.9 580.1 L538 583 L541 541Z" fill="#8a8983"/>
<polygon points="529.2,573.2 1290.6,1049.8 1290.6,1052.5 1293.1,1056.4 533.9,580.1" fill="#5f5c54" stroke="none" stroke-width="0" stroke-linejoin="round"/>
<polygon points="528.1,567.3 1290.6,1043.8 1290.6,1049.8 529.2,573.2" fill="#6a6a66" stroke="#000" stroke-width="1.1" stroke-linejoin="round"/>
<polygon points="527.3,559.3 1292.3,1034.8 1290.6,1043.8 528.1,567.3" fill="#6e6e6a" stroke="#000" stroke-width="1.1" stroke-linejoin="round"/>
<polygon points="536.6,537.7 1305.5,1010.3 1304.3,1012.6 535.7,539.7" fill="#938f82" stroke="none" stroke-width="0" stroke-linejoin="round"/>
<polygon points="536,539.1 1304.7,1011.8 1303.5,1014.1 535.2,541" fill="#9e9889" stroke="none" stroke-width="0" stroke-linejoin="round"/>
<polygon points="535.4,540.4 1303.8,1013.4 1302.6,1015.6 534.6,542.4" fill="#a39d8e" stroke="none" stroke-width="0" stroke-linejoin="round"/>
<polygon points="534.9,541.8 1303,1014.9 1301.8,1017.2 534,543.7" fill="#a7a192" stroke="none" stroke-width="0" stroke-linejoin="round"/>
<polygon points="534.3,543.1 1302.2,1016.4 1301,1018.7 533.4,545.1" fill="#a29d90" stroke="none" stroke-width="0" stroke-linejoin="round"/>
<polygon points="533.7,544.5 1301.4,1018 1300.2,1020.2 532.8,546.4" fill="#979389" stroke="none" stroke-width="0" stroke-linejoin="round"/>
<polygon points="533.1,545.8 1300.5,1019.5 1299.3,1021.8 532.3,547.8" fill="#8d8b83" stroke="none" stroke-width="0" stroke-linejoin="round"/>
<polygon points="532.5,547.1 1299.7,1021 1298.5,1023.3 531.7,549.1" fill="#888781" stroke="none" stroke-width="0" stroke-linejoin="round"/>
<polygon points="532,548.5 1298.9,1022.5 1297.7,1024.8 531.1,550.5" fill="#868682" stroke="none" stroke-width="0" stroke-linejoin="round"/>
<polygon points="531.4,549.9 1298.1,1024.1 1296.9,1026.3 530.5,551.8" fill="#91918d" stroke="none" stroke-width="0" stroke-linejoin="round"/>
<polygon points="530.8,551.2 1297.2,1025.6 1296,1027.9 529.9,553.2" fill="#9b9b97" stroke="none" stroke-width="0" stroke-linejoin="round"/>
<polygon points="530.2,552.5 1296.4,1027.1 1295.2,1029.4 529.3,554.5" fill="#949491" stroke="none" stroke-width="0" stroke-linejoin="round"/>
<polygon points="529.6,553.9 1295.6,1028.7 1294.4,1030.9 528.8,555.9" fill="#8c8c89" stroke="none" stroke-width="0" stroke-linejoin="round"/>
<polygon points="529,555.2 1294.8,1030.2 1293.6,1032.5 528.2,557.2" fill="#848481" stroke="none" stroke-width="0" stroke-linejoin="round"/>
<polygon points="528.5,556.6 1294,1031.7 1292.7,1034 527.6,558.6" fill="#7c7c79" stroke="none" stroke-width="0" stroke-linejoin="round"/>
<polygon points="527.9,557.9 1293.1,1033.3 1292.3,1034.8 527.3,559.3" fill="#747471" stroke="none" stroke-width="0" stroke-linejoin="round"/>
<polyline points="536.6,537.7 1305.5,1010.3" fill="none" stroke="#000" stroke-width="1.1" stroke-linejoin="round" stroke-linecap="round"/>
<polyline points="527.3,559.3 1292.3,1034.8" fill="none" stroke="#000" stroke-width="1.1" stroke-linejoin="round" stroke-linecap="round"/>
<path d="M536.6 537.7 Q527.5 545 527.2 556 L527.3 559.3 L528.1 567.3 L529.2 573.2 Q530.5 578 533.9 580.1" fill="none" stroke="#000" stroke-width="1.2"/>
<polygon points="1305.5,1010.3 1302.2,1014.9 1298.1,1021.5 1294.8,1028.1 1292.7,1034.8 1291.4,1040.6 1290.6,1044.8 1290.6,1053.1 1292.7,1056.4 1297.2,1054.9 1298.1,1054.7 1296.4,1052.2 1296.8,1044.8 1297.7,1036.4 1299.7,1028.1 1303.1,1019.8 1308,1012.4" fill="url(#g2)" stroke="#000" stroke-width="1.1" stroke-linejoin="round"/>
<polyline points="1292.7,1034.8 1297.7,1036.6" fill="none" stroke="#000" stroke-width="0.9" stroke-linejoin="round" stroke-linecap="round"/>
<polyline points="1290.6,1044.8 1296.8,1043.6" fill="none" stroke="#000" stroke-width="0.9" stroke-linejoin="round" stroke-linecap="round"/>
<polyline points="1290.6,1050.6 1296.4,1049.8" fill="none" stroke="#000" stroke-width="0.9" stroke-linejoin="round" stroke-linecap="round"/>
<polygon points="536.6,537.7 1305.5,1010.3 1540.9,756.1 775.6,356.1" fill="url(#g3)" stroke="#000" stroke-width="1.3" stroke-linejoin="round"/>
<polygon points="1305.5,1010.3 1308,1012.4 1542,757 1540.9,756.1" fill="url(#g4)" stroke="#000" stroke-width="0.9" stroke-linejoin="round"/>
<polygon points="1603.8,688.2 1542.8,745 1540.9,756.1 1542,757 1629.5,672.1 1579.3,647.6 1552.7,670.4" fill="#5d5951" stroke="#000" stroke-width="1.1" stroke-linejoin="round"/>
<polygon points="869,301.2 877.6,299.2 882.4,301.6 886,304.5 1628.5,671.9 1597,692.7 1602.8,665.4" fill="#5c5850" stroke="#000" stroke-width="0.8" stroke-linejoin="round"/>
<polygon points="911.1,317.6 912.5,314.3 916.6,316.3 918.6,321.3 887.2,310.3 881.1,307.3" fill="#413f3a" stroke="#000" stroke-width="0.8" stroke-linejoin="round"/>
<polyline points="919.1,319.7 924.6,322.5" fill="none" stroke="#000" stroke-width="0.8" stroke-linejoin="round" stroke-linecap="round"/>
<polygon points="925.7,324.8 927.1,321.5 931.2,323.5 933.2,328.5 901.9,317.6 895.8,314.6" fill="#413f3a" stroke="#000" stroke-width="0.8" stroke-linejoin="round"/>
<polyline points="933.7,327 939.3,329.7" fill="none" stroke="#000" stroke-width="0.8" stroke-linejoin="round" stroke-linecap="round"/>
<polygon points="940.4,332.1 941.8,328.8 946,330.8 948,335.8 916.8,325 910.6,321.9" fill="#413f3a" stroke="#000" stroke-width="0.8" stroke-linejoin="round"/>
<polyline points="948.4,334.3 954.1,337.1" fill="none" stroke="#000" stroke-width="0.8" stroke-linejoin="round" stroke-linecap="round"/>
<polygon points="955.2,339.4 956.6,336.1 960.8,338.2 962.8,343.2 931.8,332.4 925.6,329.3" fill="#413f3a" stroke="#000" stroke-width="0.8" stroke-linejoin="round"/>
<polyline points="963.3,341.6 969,344.4" fill="none" stroke="#000" stroke-width="0.8" stroke-linejoin="round" stroke-linecap="round"/>
<polygon points="970.1,346.8 971.6,343.5 975.8,345.6 977.8,350.6 946.9,339.9 940.7,336.8" fill="#413f3a" stroke="#000" stroke-width="0.8" stroke-linejoin="round"/>
<polyline points="978.3,349 984.1,351.9" fill="none" stroke="#000" stroke-width="0.8" stroke-linejoin="round" stroke-linecap="round"/>
<polygon points="985.1,354.2 986.6,350.9 990.9,353 992.9,358.1 962.2,347.5 955.9,344.4" fill="#413f3a" stroke="#000" stroke-width="0.8" stroke-linejoin="round"/>
<polyline points="993.4,356.5 999.2,359.4" fill="none" stroke="#000" stroke-width="0.8" stroke-linejoin="round" stroke-linecap="round"/>
<polygon points="1000.3,361.7 1001.8,358.4 1006.1,360.5 1008.1,365.6 977.6,355.1 971.2,352" fill="#413f3a" stroke="#000" stroke-width="0.8" stroke-linejoin="round"/>
<polyline points="1008.7,364 1014.5,366.9" fill="none" stroke="#000" stroke-width="0.8" stroke-linejoin="round" stroke-linecap="round"/>
<polygon points="1015.6,369.3 1017.2,366 1021.5,368.1 1023.5,373.2 993.1,362.8 986.6,359.6" fill="#413f3a" stroke="#000" stroke-width="0.8" stroke-linejoin="round"/>
<polyline points="1024,371.6 1029.9,374.5" fill="none" stroke="#000" stroke-width="0.8" stroke-linejoin="round" stroke-linecap="round"/>
<polygon points="1031,376.9 1032.6,373.6 1037,375.8 1038.9,380.9 1008.7,370.6 1002.2,367.4" fill="#413f3a" stroke="#000" stroke-width="0.8" stroke-linejoin="round"/>
<polyline points="1039.5,379.3 1045.4,382.2" fill="none" stroke="#000" stroke-width="0.8" stroke-linejoin="round" stroke-linecap="round"/>
<polygon points="1046.5,384.6 1048.1,381.3 1052.6,383.5 1054.5,388.6 1024.5,378.4 1017.9,375.2" fill="#413f3a" stroke="#000" stroke-width="0.8" stroke-linejoin="round"/>
<polyline points="1055.1,387 1061.1,390" fill="none" stroke="#000" stroke-width="0.8" stroke-linejoin="round" stroke-linecap="round"/>
<polygon points="1062.1,392.3 1063.8,389 1068.3,391.2 1070.3,396.4 1040.3,386.3 1033.7,383" fill="#413f3a" stroke="#000" stroke-width="0.8" stroke-linejoin="round"/>
<polyline points="1070.8,394.8 1076.9,397.8" fill="none" stroke="#000" stroke-width="0.8" stroke-linejoin="round" stroke-linecap="round"/>
<polygon points="1077.9,400.2 1079.7,396.8 1084.1,399.1 1086.1,404.2 1056.4,394.2 1049.7,390.9" fill="#413f3a" stroke="#000" stroke-width="0.8" stroke-linejoin="round"/>
<polyline points="1086.7,402.6 1092.8,405.6" fill="none" stroke="#000" stroke-width="0.8" stroke-linejoin="round" stroke-linecap="round"/>
<polygon points="1093.8,408 1095.6,404.7 1100.1,407 1102.1,412.1 1072.5,402.3 1065.8,398.9" fill="#413f3a" stroke="#000" stroke-width="0.8" stroke-linejoin="round"/>
<polyline points="1102.7,410.5 1108.8,413.6" fill="none" stroke="#000" stroke-width="0.8" stroke-linejoin="round" stroke-linecap="round"/>
<polygon points="1109.9,416 1111.7,412.7 1116.2,414.9 1118.2,420.1 1088.8,410.3 1082,407" fill="#413f3a" stroke="#000" stroke-width="0.8" stroke-linejoin="round"/>
<polyline points="1118.8,418.5 1125,421.6" fill="none" stroke="#000" stroke-width="0.8" stroke-linejoin="round" stroke-linecap="round"/>
<polygon points="1126.1,424 1127.9,420.7 1132.5,422.9 1134.4,428.1 1105.2,418.5 1098.4,415.1" fill="#413f3a" stroke="#000" stroke-width="0.8" stroke-linejoin="round"/>
<polyline points="1135.1,426.6 1141.3,429.6" fill="none" stroke="#000" stroke-width="0.8" stroke-linejoin="round" stroke-linecap="round"/>
<polygon points="1142.4,432.1 1144.2,428.7 1148.9,431 1150.8,436.2 1121.8,426.7 1114.9,423.3" fill="#413f3a" stroke="#000" stroke-width="0.8" stroke-linejoin="round"/>
<polyline points="1151.5,434.7 1157.8,437.8" fill="none" stroke="#000" stroke-width="0.8" stroke-linejoin="round" stroke-linecap="round"/>
<polygon points="1158.8,440.2 1160.7,436.9 1165.4,439.2 1167.3,444.4 1138.5,435 1131.6,431.6" fill="#413f3a" stroke="#000" stroke-width="0.8" stroke-linejoin="round"/>
<polyline points="1168,442.8 1174.4,446" fill="none" stroke="#000" stroke-width="0.8" stroke-linejoin="round" stroke-linecap="round"/>
<polygon points="1175.4,448.4 1177.3,445.1 1182.1,447.4 1184,452.7 1155.4,443.4 1148.4,439.9" fill="#413f3a" stroke="#000" stroke-width="0.8" stroke-linejoin="round"/>
<polyline points="1184.7,451.1 1191.1,454.3" fill="none" stroke="#000" stroke-width="0.8" stroke-linejoin="round" stroke-linecap="round"/>
<polygon points="1192.1,456.7 1194.1,453.4 1198.9,455.7 1200.8,461 1172.4,451.8 1165.3,448.3" fill="#413f3a" stroke="#000" stroke-width="0.8" stroke-linejoin="round"/>
<polyline points="1201.5,459.4 1207.9,462.6" fill="none" stroke="#000" stroke-width="0.8" stroke-linejoin="round" stroke-linecap="round"/>
<polygon points="1209,465 1211,461.7 1215.8,464.1 1217.7,469.4 1189.5,460.3 1182.4,456.8" fill="#413f3a" stroke="#000" stroke-width="0.8" stroke-linejoin="round"/>
<polyline points="1218.4,467.8 1225,471" fill="none" stroke="#000" stroke-width="0.8" stroke-linejoin="round" stroke-linecap="round"/>
<polygon points="1540.9,756.1 1542.6,757.6 1629.5,672.1 1627.6,671.3" fill="url(#g5)" stroke="#000" stroke-width="0.8" stroke-linejoin="round"/>
<polygon points="1546,720.3 1603.8,665.7 1603.8,688.2 1542.8,745" fill="#5a564e" stroke="#000" stroke-width="1.1" stroke-linejoin="round"/>
<polygon points="788.3,328.9 1545.4,719 1533.6,751.9 782.6,358.7" fill="url(#g6)" stroke="#000" stroke-width="1.1" stroke-linejoin="round"/>
<polygon points="1545.4,719 1553.9,723.6 1541.3,753.6 1533.6,751.9" fill="#8e8e8a" stroke="#000" stroke-width="0.9" stroke-linejoin="round"/>
<polygon points="788.3,328.9 1545.4,719 1602.8,665.4 855.7,294.7 846.4,295" fill="url(#g7)" stroke="#000" stroke-width="1.2" stroke-linejoin="round"/>
<polygon points="788,329.1 782.3,357.1 775.6,356.1 781,352" fill="#5a5852" stroke="#000" stroke-width="1.1" stroke-linejoin="round"/>
<polygon points="1208.8,545.6 1469.3,679.8 1458.2,712.4 1199.9,577" fill="#2b2a26" stroke="#000" stroke-width="1.1" stroke-linejoin="round"/>
<polygon points="1205.3,564 1463.1,698.1 1460.2,706.6 1204.9,573.2" fill="#4a4945" stroke="#1a1917" stroke-width="0.8" stroke-linejoin="round"/>
<polyline points="1207,551.9 1467.1,686.3" fill="none" stroke="#151412" stroke-width="0.9" stroke-linejoin="round" stroke-linecap="round"/>
<polyline points="1205.6,556.9 1465.3,691.6" fill="none" stroke="#151412" stroke-width="0.9" stroke-linejoin="round" stroke-linecap="round"/>
<polygon points="1208.8,545.6 1469.3,679.8 1527.5,628.1 1269.3,499.9" fill="#2e2c28" stroke="#000" stroke-width="1.1" stroke-linejoin="round"/>
<polyline points="1217.4,542.2 1475.2,674.5" fill="none" stroke="#171614" stroke-width="0.9" stroke-linejoin="round" stroke-linecap="round"/>
<polyline points="1257.5,520 1520,633.8" fill="none" stroke="#171614" stroke-width="0.9" stroke-linejoin="round" stroke-linecap="round"/>
<polyline points="1267.5,528.8 1511.2,641.2" fill="none" stroke="#171614" stroke-width="0.9" stroke-linejoin="round" stroke-linecap="round"/>
<polygon points="1273.1,538.1 1493.1,648.8 1466.2,673.1 1266.2,570" fill="#2a2925" stroke="#171614" stroke-width="0.9" stroke-linejoin="round"/>
<polygon points="1275.5,543.5 1486.5,649.6 1465.5,668.5 1271,567.5" fill="#2c2a27" stroke="#1b1a18" stroke-width="0.7" stroke-linejoin="round"/>
<polygon points="1245,559.4 1273.1,538.1 1270.6,566.2 1266.2,570" fill="#34322e" stroke="#171614" stroke-width="0.8" stroke-linejoin="round"/>
<polygon points="1260,508 1268.5,511.5 1276,517 1271,527 1259,522" fill="#3b3935" stroke="#171614" stroke-width="0.8" stroke-linejoin="round"/>
<polygon points="1504,640.5 1512,634.5 1516,637.5 1508,644.5" fill="#33312d" stroke="#171614" stroke-width="0.7" stroke-linejoin="round"/>
<polygon points="1365.9,720 1451.3,765.9 1464.6,751.7 1379.3,706.3" fill="#807d76" stroke="#000" stroke-width="1.1" stroke-linejoin="round"/>
<polyline points="1380.7,709.7 1371.2,719.4 1450.9,762.2" fill="none" stroke="#000" stroke-width="0.9" stroke-linejoin="round" stroke-linecap="round"/>
<polygon points="1436.1,753.4 1446.7,759 1451.9,753.5 1441.3,747.9" fill="#827f78" stroke="#000" stroke-width="0.9" stroke-linejoin="round"/>
<polygon points="766.9,407.8 829.4,441.6 859.4,417.6 796.8,384.5" fill="#4a4945" stroke="#000" stroke-width="1.2" stroke-linejoin="round"/>
<polygon points="766.9,407.8 829.4,441.6 826.9,417.7 778.1,391.7" fill="url(#g8)" stroke="#000" stroke-width="1.1" stroke-linejoin="round"/>
<polygon points="829.4,441.6 859.4,417.6 844.2,404 826.9,417.7" fill="url(#g9)" stroke="#000" stroke-width="1.1" stroke-linejoin="round"/>
<polygon points="778.1,391.7 826.9,417.7 844.2,404 795.5,378.3" fill="#85827b" stroke="#000" stroke-width="1.1" stroke-linejoin="round"/>
<polygon points="829.4,441.6 894.2,476.6 924.1,451.9 859.4,417.6" fill="#4a4945" stroke="#000" stroke-width="1.2" stroke-linejoin="round"/>
<polygon points="829.4,441.6 894.2,476.6 891.7,452.3 841.2,425.4" fill="url(#g10)" stroke="#000" stroke-width="1.1" stroke-linejoin="round"/>
<polygon points="894.2,476.6 924.1,451.9 909,438.2 891.7,452.3" fill="url(#g11)" stroke="#000" stroke-width="1.1" stroke-linejoin="round"/>
<polygon points="841.2,425.4 891.7,452.3 909,438.2 858.5,411.6" fill="#85827b" stroke="#000" stroke-width="1.1" stroke-linejoin="round"/>
<polygon points="894.2,476.6 961.3,512.9 991.2,487.4 924.1,451.9" fill="#4a4945" stroke="#000" stroke-width="1.2" stroke-linejoin="round"/>
<polygon points="894.2,476.6 961.3,512.9 958.9,488.2 906.6,460.3" fill="url(#g12)" stroke="#000" stroke-width="1.1" stroke-linejoin="round"/>
<polygon points="961.3,512.9 991.2,487.4 976.2,473.7 958.9,488.2" fill="url(#g13)" stroke="#000" stroke-width="1.1" stroke-linejoin="round"/>
<polygon points="906.6,460.3 958.9,488.2 976.2,473.7 923.9,446" fill="#85827b" stroke="#000" stroke-width="1.1" stroke-linejoin="round"/>
<polygon points="961.3,512.9 1030.9,550.5 1060.8,524.3 991.2,487.4" fill="#4a4945" stroke="#000" stroke-width="1.2" stroke-linejoin="round"/>
<polygon points="961.3,512.9 1030.9,550.5 1028.6,525.5 974.3,496.5" fill="url(#g14)" stroke="#000" stroke-width="1.1" stroke-linejoin="round"/>
<polygon points="1030.9,550.5 1060.8,524.3 1045.8,510.4 1028.6,525.5" fill="url(#g15)" stroke="#000" stroke-width="1.1" stroke-linejoin="round"/>
<polygon points="974.3,496.5 1028.6,525.5 1045.8,510.4 991.6,481.8" fill="#85827b" stroke="#000" stroke-width="1.1" stroke-linejoin="round"/>
<polygon points="1030.9,550.5 1103.2,589.5 1133,562.5 1060.8,524.3" fill="#4a4945" stroke="#000" stroke-width="1.2" stroke-linejoin="round"/>
<polygon points="1030.9,550.5 1103.2,589.5 1100.9,564.1 1044.6,534" fill="url(#g16)" stroke="#000" stroke-width="1.1" stroke-linejoin="round"/>
<polygon points="1103.2,589.5 1133,562.5 1118.1,548.6 1100.9,564.1" fill="url(#g17)" stroke="#000" stroke-width="1.1" stroke-linejoin="round"/>
<polygon points="1044.6,534 1100.9,564.1 1118.1,548.6 1061.8,518.9" fill="#85827b" stroke="#000" stroke-width="1.1" stroke-linejoin="round"/>
<polygon points="1178.9,630.5 1232.3,659.4 1262,630.8 1208.7,602.5" fill="#4a4945" stroke="#000" stroke-width="1.2" stroke-linejoin="round"/>
<polygon points="1178.9,630.5 1232.3,659.4 1230.2,633.2 1194,613.8" fill="url(#g18)" stroke="#000" stroke-width="1.1" stroke-linejoin="round"/>
<polygon points="1232.3,659.4 1262,630.8 1247.3,616.8 1230.2,633.2" fill="url(#g19)" stroke="#000" stroke-width="1.1" stroke-linejoin="round"/>
<polygon points="1194,613.8 1230.2,633.2 1247.3,616.8 1211.2,597.7" fill="#85827b" stroke="#000" stroke-width="1.1" stroke-linejoin="round"/>
<polygon points="1238.2,662.5 1293.6,692.5 1323.1,663.1 1267.9,633.9" fill="#4a4945" stroke="#000" stroke-width="1.2" stroke-linejoin="round"/>
<polygon points="1238.2,662.5 1293.6,692.5 1291.5,665.9 1253.9,645.8" fill="url(#g20)" stroke="#000" stroke-width="1.1" stroke-linejoin="round"/>
<polygon points="1293.6,692.5 1323.1,663.1 1308.6,649.1 1291.5,665.9" fill="url(#g21)" stroke="#000" stroke-width="1.1" stroke-linejoin="round"/>
<polygon points="1253.9,645.8 1291.5,665.9 1308.6,649.1 1271,629.3" fill="#85827b" stroke="#000" stroke-width="1.1" stroke-linejoin="round"/>
<polygon points="728.7,437.5 759.6,454.7 790.2,430.6 759.2,413.7" fill="#4a4945" stroke="#000" stroke-width="1.2" stroke-linejoin="round"/>
<polygon points="728.7,437.5 759.6,454.7 757,430.8 739.8,421.4" fill="url(#g22)" stroke="#000" stroke-width="1.1" stroke-linejoin="round"/>
<polygon points="759.6,454.7 790.2,430.6 774.7,417 757,430.8" fill="url(#g23)" stroke="#000" stroke-width="1.1" stroke-linejoin="round"/>
<polygon points="739.8,421.4 757,430.8 774.7,417 757.5,407.7" fill="#85827b" stroke="#000" stroke-width="1.1" stroke-linejoin="round"/>
<polygon points="759.6,454.7 791.2,472.2 821.8,447.7 790.2,430.6" fill="#4a4945" stroke="#000" stroke-width="1.2" stroke-linejoin="round"/>
<polygon points="759.6,454.7 791.2,472.2 788.5,448.1 771.1,438.5" fill="url(#g24)" stroke="#000" stroke-width="1.1" stroke-linejoin="round"/>
<polygon points="791.2,472.2 821.8,447.7 806.2,434.1 788.5,448.1" fill="url(#g25)" stroke="#000" stroke-width="1.1" stroke-linejoin="round"/>
<polygon points="771.1,438.5 788.5,448.1 806.2,434.1 788.8,424.6" fill="#85827b" stroke="#000" stroke-width="1.1" stroke-linejoin="round"/>
<polygon points="791.2,472.2 823.3,490 853.9,465.1 821.8,447.7" fill="#4a4945" stroke="#000" stroke-width="1.2" stroke-linejoin="round"/>
<polygon points="791.2,472.2 823.3,490 820.7,465.7 802.9,456" fill="url(#g26)" stroke="#000" stroke-width="1.1" stroke-linejoin="round"/>
<polygon points="823.3,490 853.9,465.1 838.4,451.5 820.7,465.7" fill="url(#g27)" stroke="#000" stroke-width="1.1" stroke-linejoin="round"/>
<polygon points="802.9,456 820.7,465.7 838.4,451.5 820.6,441.8" fill="#85827b" stroke="#000" stroke-width="1.1" stroke-linejoin="round"/>
<polygon points="823.3,490 855.9,508.1 886.5,482.9 853.9,465.1" fill="#4a4945" stroke="#000" stroke-width="1.2" stroke-linejoin="round"/>
<polygon points="823.3,490 855.9,508.1 853.4,483.6 835.3,473.7" fill="url(#g28)" stroke="#000" stroke-width="1.1" stroke-linejoin="round"/>
<polygon points="855.9,508.1 886.5,482.9 871.1,469.2 853.4,483.6" fill="url(#g29)" stroke="#000" stroke-width="1.1" stroke-linejoin="round"/>
<polygon points="835.3,473.7 853.4,483.6 871.1,469.2 853,459.4" fill="#85827b" stroke="#000" stroke-width="1.1" stroke-linejoin="round"/>
<polygon points="855.9,508.1 889.2,526.6 919.8,501 886.5,482.9" fill="#4a4945" stroke="#000" stroke-width="1.2" stroke-linejoin="round"/>
<polygon points="855.9,508.1 889.2,526.6 886.7,501.9 868.2,491.8" fill="url(#g30)" stroke="#000" stroke-width="1.1" stroke-linejoin="round"/>
<polygon points="889.2,526.6 919.8,501 904.4,487.2 886.7,501.9" fill="url(#g31)" stroke="#000" stroke-width="1.1" stroke-linejoin="round"/>
<polygon points="868.2,491.8 886.7,501.9 904.4,487.2 885.9,477.2" fill="#85827b" stroke="#000" stroke-width="1.1" stroke-linejoin="round"/>
<polygon points="889.2,526.6 923.1,545.3 953.7,519.4 919.8,501" fill="#4a4945" stroke="#000" stroke-width="1.2" stroke-linejoin="round"/>
<polygon points="889.2,526.6 923.1,545.3 920.6,520.5 901.8,510.2" fill="url(#g32)" stroke="#000" stroke-width="1.1" stroke-linejoin="round"/>
<polygon points="923.1,545.3 953.7,519.4 938.3,505.6 920.6,520.5" fill="url(#g33)" stroke="#000" stroke-width="1.1" stroke-linejoin="round"/>
<polygon points="901.8,510.2 920.6,520.5 938.3,505.6 919.5,495.4" fill="#85827b" stroke="#000" stroke-width="1.1" stroke-linejoin="round"/>
<polygon points="923.1,545.3 957.6,564.5 988.2,538.1 953.7,519.4" fill="#4a4945" stroke="#000" stroke-width="1.2" stroke-linejoin="round"/>
<polygon points="923.1,545.3 957.6,564.5 955.1,539.4 936,528.9" fill="url(#g34)" stroke="#000" stroke-width="1.1" stroke-linejoin="round"/>
<polygon points="957.6,564.5 988.2,538.1 972.8,524.3 955.1,539.4" fill="url(#g35)" stroke="#000" stroke-width="1.1" stroke-linejoin="round"/>
<polygon points="936,528.9 955.1,539.4 972.8,524.3 953.7,514" fill="#85827b" stroke="#000" stroke-width="1.1" stroke-linejoin="round"/>
<polygon points="957.6,564.5 992.7,584 1023.3,557.2 988.2,538.1" fill="#4a4945" stroke="#000" stroke-width="1.2" stroke-linejoin="round"/>
<polygon points="957.6,564.5 992.7,584 990.3,558.7 970.8,548" fill="url(#g36)" stroke="#000" stroke-width="1.1" stroke-linejoin="round"/>
<polygon points="992.7,584 1023.3,557.2 1008,543.4 990.3,558.7" fill="url(#g37)" stroke="#000" stroke-width="1.1" stroke-linejoin="round"/>
<polygon points="970.8,548 990.3,558.7 1008,543.4 988.5,532.8" fill="#85827b" stroke="#000" stroke-width="1.1" stroke-linejoin="round"/>
<polygon points="992.7,584 1028.6,603.9 1059.1,576.6 1023.3,557.2" fill="#4a4945" stroke="#000" stroke-width="1.2" stroke-linejoin="round"/>
<polygon points="992.7,584 1028.6,603.9 1026.2,578.4 1006.3,567.5" fill="url(#g38)" stroke="#000" stroke-width="1.1" stroke-linejoin="round"/>
<polygon points="1028.6,603.9 1059.1,576.6 1043.8,562.8 1026.2,578.4" fill="url(#g39)" stroke="#000" stroke-width="1.1" stroke-linejoin="round"/>
<polygon points="1006.3,567.5 1026.2,578.4 1043.8,562.8 1024,552" fill="#85827b" stroke="#000" stroke-width="1.1" stroke-linejoin="round"/>
<polygon points="1028.6,603.9 1065.1,624.1 1095.6,596.4 1059.1,576.6" fill="#4a4945" stroke="#000" stroke-width="1.2" stroke-linejoin="round"/>
<polygon points="1028.6,603.9 1065.1,624.1 1062.7,598.4 1042.5,587.3" fill="url(#g40)" stroke="#000" stroke-width="1.1" stroke-linejoin="round"/>
<polygon points="1065.1,624.1 1095.6,596.4 1080.3,582.6 1062.7,598.4" fill="url(#g41)" stroke="#000" stroke-width="1.1" stroke-linejoin="round"/>
<polygon points="1042.5,587.3 1062.7,598.4 1080.3,582.6 1060.1,571.6" fill="#85827b" stroke="#000" stroke-width="1.1" stroke-linejoin="round"/>
<polygon points="1065.1,624.1 1102.3,644.7 1132.7,616.6 1095.6,596.4" fill="#4a4945" stroke="#000" stroke-width="1.2" stroke-linejoin="round"/>
<polygon points="1065.1,624.1 1102.3,644.7 1099.9,618.9 1079.3,607.5" fill="url(#g42)" stroke="#000" stroke-width="1.1" stroke-linejoin="round"/>
<polygon points="1102.3,644.7 1132.7,616.6 1117.6,602.7 1099.9,618.9" fill="url(#g43)" stroke="#000" stroke-width="1.1" stroke-linejoin="round"/>
<polygon points="1079.3,607.5 1099.9,618.9 1117.6,602.7 1097,591.6" fill="#85827b" stroke="#000" stroke-width="1.1" stroke-linejoin="round"/>
<polygon points="1102.3,644.7 1140.2,665.8 1170.6,637.2 1132.7,616.6" fill="#4a4945" stroke="#000" stroke-width="1.2" stroke-linejoin="round"/>
<polygon points="1102.3,644.7 1140.2,665.8 1137.9,639.7 1116.9,628.2" fill="url(#g44)" stroke="#000" stroke-width="1.1" stroke-linejoin="round"/>
<polygon points="1140.2,665.8 1170.6,637.2 1155.5,623.3 1137.9,639.7" fill="url(#g45)" stroke="#000" stroke-width="1.1" stroke-linejoin="round"/>
<polygon points="1116.9,628.2 1137.9,639.7 1155.5,623.3 1134.5,611.9" fill="#85827b" stroke="#000" stroke-width="1.1" stroke-linejoin="round"/>
<polygon points="1140.2,665.8 1178.9,687.2 1209.2,658.2 1170.6,637.2" fill="#4a4945" stroke="#000" stroke-width="1.2" stroke-linejoin="round"/>
<polygon points="1140.2,665.8 1178.9,687.2 1176.6,660.9 1155.2,649.2" fill="url(#g46)" stroke="#000" stroke-width="1.1" stroke-linejoin="round"/>
<polygon points="1178.9,687.2 1209.2,658.2 1194.2,644.3 1176.6,660.9" fill="url(#g47)" stroke="#000" stroke-width="1.1" stroke-linejoin="round"/>
<polygon points="1155.2,649.2 1176.6,660.9 1194.2,644.3 1172.8,632.7" fill="#85827b" stroke="#000" stroke-width="1.1" stroke-linejoin="round"/>
<polygon points="1178.9,687.2 1218.3,709.1 1248.6,679.6 1209.2,658.2" fill="#4a4945" stroke="#000" stroke-width="1.2" stroke-linejoin="round"/>
<polygon points="1178.9,687.2 1218.3,709.1 1216.1,682.6 1194.3,670.6" fill="url(#g48)" stroke="#000" stroke-width="1.1" stroke-linejoin="round"/>
<polygon points="1218.3,709.1 1248.6,679.6 1233.6,665.6 1216.1,682.6" fill="url(#g49)" stroke="#000" stroke-width="1.1" stroke-linejoin="round"/>
<polygon points="1194.3,670.6 1216.1,682.6 1233.6,665.6 1211.8,653.8" fill="#85827b" stroke="#000" stroke-width="1.1" stroke-linejoin="round"/>
<polygon points="1218.3,709.1 1258.6,731.4 1288.8,701.4 1248.6,679.6" fill="#4a4945" stroke="#000" stroke-width="1.2" stroke-linejoin="round"/>
<polygon points="1218.3,709.1 1258.6,731.4 1256.4,704.7 1234.1,692.4" fill="url(#g50)" stroke="#000" stroke-width="1.1" stroke-linejoin="round"/>
<polygon points="1258.6,731.4 1288.8,701.4 1273.9,687.4 1256.4,704.7" fill="url(#g51)" stroke="#000" stroke-width="1.1" stroke-linejoin="round"/>
<polygon points="1234.1,692.4 1256.4,704.7 1273.9,687.4 1251.6,675.4" fill="#85827b" stroke="#000" stroke-width="1.1" stroke-linejoin="round"/>
<polygon points="1279.5,743 1321,766 1351,735.2 1309.6,712.7" fill="#4a4945" stroke="#000" stroke-width="1.2" stroke-linejoin="round"/>
<polygon points="1279.5,743 1321,766 1318.9,738.9 1295.9,726.3" fill="url(#g52)" stroke="#000" stroke-width="1.1" stroke-linejoin="round"/>
<polygon points="1321,766 1351,735.2 1336.3,721.2 1318.9,738.9" fill="url(#g53)" stroke="#000" stroke-width="1.1" stroke-linejoin="round"/>
<polygon points="1295.9,726.3 1318.9,738.9 1336.3,721.2 1313.3,708.8" fill="#85827b" stroke="#000" stroke-width="1.1" stroke-linejoin="round"/>
<polygon points="1321,766 1363.3,789.5 1393.3,758.2 1351,735.2" fill="#4a4945" stroke="#000" stroke-width="1.2" stroke-linejoin="round"/>
<polygon points="1321,766 1363.3,789.5 1361.3,762.2 1337.8,749.3" fill="url(#g54)" stroke="#000" stroke-width="1.1" stroke-linejoin="round"/>
<polygon points="1363.3,789.5 1393.3,758.2 1378.6,744.2 1361.3,762.2" fill="url(#g55)" stroke="#000" stroke-width="1.1" stroke-linejoin="round"/>
<polygon points="1337.8,749.3 1361.3,762.2 1378.6,744.2 1355.2,731.5" fill="#85827b" stroke="#000" stroke-width="1.1" stroke-linejoin="round"/>
<polygon points="1363.3,789.5 1406.5,813.5 1436.4,781.6 1393.3,758.2" fill="#4a4945" stroke="#000" stroke-width="1.2" stroke-linejoin="round"/>
<polygon points="1363.3,789.5 1406.5,813.5 1404.5,785.9 1380.6,772.7" fill="url(#g56)" stroke="#000" stroke-width="1.1" stroke-linejoin="round"/>
<polygon points="1406.5,813.5 1436.4,781.6 1421.8,767.6 1404.5,785.9" fill="url(#g57)" stroke="#000" stroke-width="1.1" stroke-linejoin="round"/>
<polygon points="1380.6,772.7 1404.5,785.9 1421.8,767.6 1397.9,754.6" fill="#85827b" stroke="#000" stroke-width="1.1" stroke-linejoin="round"/>
<polygon points="697.6,461.7 744.2,488.1 775.3,463.4 728.7,437.5" fill="#4a4945" stroke="#000" stroke-width="1.2" stroke-linejoin="round"/>
<polygon points="697.6,461.7 744.2,488.1 741.5,463.9 708.7,445.5" fill="url(#g58)" stroke="#000" stroke-width="1.1" stroke-linejoin="round"/>
<polygon points="744.2,488.1 775.3,463.4 759.5,449.8 741.5,463.9" fill="url(#g59)" stroke="#000" stroke-width="1.1" stroke-linejoin="round"/>
<polygon points="708.7,445.5 741.5,463.9 759.5,449.8 726.7,431.6" fill="#85827b" stroke="#000" stroke-width="1.1" stroke-linejoin="round"/>
<polygon points="744.2,488.1 776,506.1 807.1,481 775.3,463.4" fill="#4a4945" stroke="#000" stroke-width="1.2" stroke-linejoin="round"/>
<polygon points="744.2,488.1 776,506.1 773.4,481.8 755.7,471.9" fill="url(#g60)" stroke="#000" stroke-width="1.1" stroke-linejoin="round"/>
<polygon points="776,506.1 807.1,481 791.3,467.4 773.4,481.8" fill="url(#g61)" stroke="#000" stroke-width="1.1" stroke-linejoin="round"/>
<polygon points="755.7,471.9 773.4,481.8 791.3,467.4 773.7,457.6" fill="#85827b" stroke="#000" stroke-width="1.1" stroke-linejoin="round"/>
<polygon points="776,506.1 808.4,524.4 839.5,499 807.1,481" fill="#4a4945" stroke="#000" stroke-width="1.2" stroke-linejoin="round"/>
<polygon points="776,506.1 808.4,524.4 805.8,499.9 787.8,489.9" fill="url(#g62)" stroke="#000" stroke-width="1.1" stroke-linejoin="round"/>
<polygon points="808.4,524.4 839.5,499 823.7,485.3 805.8,499.9" fill="url(#g63)" stroke="#000" stroke-width="1.1" stroke-linejoin="round"/>
<polygon points="787.8,489.9 805.8,499.9 823.7,485.3 805.8,475.4" fill="#85827b" stroke="#000" stroke-width="1.1" stroke-linejoin="round"/>
<polygon points="808.4,524.4 841.4,543.1 872.5,517.3 839.5,499" fill="#4a4945" stroke="#000" stroke-width="1.2" stroke-linejoin="round"/>
<polygon points="808.4,524.4 841.4,543.1 838.7,518.4 820.5,508.2" fill="url(#g64)" stroke="#000" stroke-width="1.1" stroke-linejoin="round"/>
<polygon points="841.4,543.1 872.5,517.3 856.7,503.6 838.7,518.4" fill="url(#g65)" stroke="#000" stroke-width="1.1" stroke-linejoin="round"/>
<polygon points="820.5,508.2 838.7,518.4 856.7,503.6 838.5,493.5" fill="#85827b" stroke="#000" stroke-width="1.1" stroke-linejoin="round"/>
<polygon points="841.4,543.1 874.9,562.1 906.1,535.9 872.5,517.3" fill="#4a4945" stroke="#000" stroke-width="1.2" stroke-linejoin="round"/>
<polygon points="841.4,543.1 874.9,562.1 872.3,537.2 853.8,526.8" fill="url(#g66)" stroke="#000" stroke-width="1.1" stroke-linejoin="round"/>
<polygon points="874.9,562.1 906.1,535.9 890.3,522.2 872.3,537.2" fill="url(#g67)" stroke="#000" stroke-width="1.1" stroke-linejoin="round"/>
<polygon points="853.8,526.8 872.3,537.2 890.3,522.2 871.7,511.9" fill="#85827b" stroke="#000" stroke-width="1.1" stroke-linejoin="round"/>
<polygon points="874.9,562.1 909.1,581.5 940.3,554.9 906.1,535.9" fill="#4a4945" stroke="#000" stroke-width="1.2" stroke-linejoin="round"/>
<polygon points="874.9,562.1 909.1,581.5 906.6,556.4 887.6,545.8" fill="url(#g68)" stroke="#000" stroke-width="1.1" stroke-linejoin="round"/>
<polygon points="909.1,581.5 940.3,554.9 924.6,541.1 906.6,556.4" fill="url(#g69)" stroke="#000" stroke-width="1.1" stroke-linejoin="round"/>
<polygon points="887.6,545.8 906.6,556.4 924.6,541.1 905.6,530.6" fill="#85827b" stroke="#000" stroke-width="1.1" stroke-linejoin="round"/>
<polygon points="909.1,581.5 944,601.3 975.1,574.2 940.3,554.9" fill="#4a4945" stroke="#000" stroke-width="1.2" stroke-linejoin="round"/>
<polygon points="909.1,581.5 944,601.3 941.5,575.9 922.2,565.1" fill="url(#g70)" stroke="#000" stroke-width="1.1" stroke-linejoin="round"/>
<polygon points="944,601.3 975.1,574.2 959.4,560.4 941.5,575.9" fill="url(#g71)" stroke="#000" stroke-width="1.1" stroke-linejoin="round"/>
<polygon points="922.2,565.1 941.5,575.9 959.4,560.4 940.1,549.7" fill="#85827b" stroke="#000" stroke-width="1.1" stroke-linejoin="round"/>
<polygon points="944,601.3 979.5,621.4 1010.6,593.9 975.1,574.2" fill="#4a4945" stroke="#000" stroke-width="1.2" stroke-linejoin="round"/>
<polygon points="944,601.3 979.5,621.4 977,595.8 957.3,584.8" fill="url(#g72)" stroke="#000" stroke-width="1.1" stroke-linejoin="round"/>
<polygon points="979.5,621.4 1010.6,593.9 995,580.1 977,595.8" fill="url(#g73)" stroke="#000" stroke-width="1.1" stroke-linejoin="round"/>
<polygon points="957.3,584.8 977,595.8 995,580.1 975.3,569.2" fill="#85827b" stroke="#000" stroke-width="1.1" stroke-linejoin="round"/>
<polygon points="979.5,621.4 1015.7,641.9 1046.7,613.9 1010.6,593.9" fill="#4a4945" stroke="#000" stroke-width="1.2" stroke-linejoin="round"/>
<polygon points="979.5,621.4 1015.7,641.9 1013.2,616.1 993.2,604.9" fill="url(#g74)" stroke="#000" stroke-width="1.1" stroke-linejoin="round"/>
<polygon points="1015.7,641.9 1046.7,613.9 1031.2,600.1 1013.2,616.1" fill="url(#g75)" stroke="#000" stroke-width="1.1" stroke-linejoin="round"/>
<polygon points="993.2,604.9 1013.2,616.1 1031.2,600.1 1011.1,589" fill="#85827b" stroke="#000" stroke-width="1.1" stroke-linejoin="round"/>
<polygon points="1015.7,641.9 1052.6,662.8 1083.6,634.4 1046.7,613.9" fill="#4a4945" stroke="#000" stroke-width="1.2" stroke-linejoin="round"/>
<polygon points="1015.7,641.9 1052.6,662.8 1050.1,636.8 1029.7,625.4" fill="url(#g76)" stroke="#000" stroke-width="1.1" stroke-linejoin="round"/>
<polygon points="1052.6,662.8 1083.6,634.4 1068.1,620.5 1050.1,636.8" fill="url(#g77)" stroke="#000" stroke-width="1.1" stroke-linejoin="round"/>
<polygon points="1029.7,625.4 1050.1,636.8 1068.1,620.5 1047.7,609.2" fill="#85827b" stroke="#000" stroke-width="1.1" stroke-linejoin="round"/>
<polygon points="1052.6,662.8 1090.2,684.1 1121.1,655.2 1083.6,634.4" fill="#4a4945" stroke="#000" stroke-width="1.2" stroke-linejoin="round"/>
<polygon points="1052.6,662.8 1090.2,684.1 1087.8,657.9 1066.9,646.2" fill="url(#g78)" stroke="#000" stroke-width="1.1" stroke-linejoin="round"/>
<polygon points="1090.2,684.1 1121.1,655.2 1105.7,641.3 1087.8,657.9" fill="url(#g79)" stroke="#000" stroke-width="1.1" stroke-linejoin="round"/>
<polygon points="1066.9,646.2 1087.8,657.9 1105.7,641.3 1084.9,629.8" fill="#85827b" stroke="#000" stroke-width="1.1" stroke-linejoin="round"/>
<polygon points="1090.2,684.1 1128.5,705.8 1159.5,676.5 1121.1,655.2" fill="#4a4945" stroke="#000" stroke-width="1.2" stroke-linejoin="round"/>
<polygon points="1090.2,684.1 1128.5,705.8 1126.2,679.4 1104.9,667.5" fill="url(#g80)" stroke="#000" stroke-width="1.1" stroke-linejoin="round"/>
<polygon points="1128.5,705.8 1159.5,676.5 1144.1,662.6 1126.2,679.4" fill="url(#g81)" stroke="#000" stroke-width="1.1" stroke-linejoin="round"/>
<polygon points="1104.9,667.5 1126.2,679.4 1144.1,662.6 1122.8,650.8" fill="#85827b" stroke="#000" stroke-width="1.1" stroke-linejoin="round"/>
<polygon points="1128.5,705.8 1167.6,728 1198.5,698.1 1159.5,676.5" fill="#4a4945" stroke="#000" stroke-width="1.2" stroke-linejoin="round"/>
<polygon points="1128.5,705.8 1167.6,728 1165.3,701.3 1143.7,689.2" fill="url(#g82)" stroke="#000" stroke-width="1.1" stroke-linejoin="round"/>
<polygon points="1167.6,728 1198.5,698.1 1183.2,684.2 1165.3,701.3" fill="url(#g83)" stroke="#000" stroke-width="1.1" stroke-linejoin="round"/>
<polygon points="1143.7,689.2 1165.3,701.3 1183.2,684.2 1161.5,672.2" fill="#85827b" stroke="#000" stroke-width="1.1" stroke-linejoin="round"/>
<polygon points="666,486.2 720.5,517.8 752.1,492.6 697.6,461.7" fill="#4a4945" stroke="#000" stroke-width="1.2" stroke-linejoin="round"/>
<polygon points="666,486.2 720.5,517.8 717.7,493.4 677,470.1" fill="url(#g84)" stroke="#000" stroke-width="1.1" stroke-linejoin="round"/>
<polygon points="720.5,517.8 752.1,492.6 736,479 717.7,493.4" fill="url(#g85)" stroke="#000" stroke-width="1.1" stroke-linejoin="round"/>
<polygon points="677,470.1 717.7,493.4 736,479 695.3,455.9" fill="#85827b" stroke="#000" stroke-width="1.1" stroke-linejoin="round"/>
<polygon points="720.5,517.8 752.4,536.2 784.1,510.7 752.1,492.6" fill="#4a4945" stroke="#000" stroke-width="1.2" stroke-linejoin="round"/>
<polygon points="720.5,517.8 752.4,536.2 749.7,511.7 732,501.6" fill="url(#g86)" stroke="#000" stroke-width="1.1" stroke-linejoin="round"/>
<polygon points="752.4,536.2 784.1,510.7 768,497 749.7,511.7" fill="url(#g87)" stroke="#000" stroke-width="1.1" stroke-linejoin="round"/>
<polygon points="732,501.6 749.7,511.7 768,497 750.3,487" fill="#85827b" stroke="#000" stroke-width="1.1" stroke-linejoin="round"/>
<polygon points="752.4,536.2 784.9,555.1 816.6,529.1 784.1,510.7" fill="#4a4945" stroke="#000" stroke-width="1.2" stroke-linejoin="round"/>
<polygon points="752.4,536.2 784.9,555.1 782.2,530.3 764.2,520" fill="url(#g88)" stroke="#000" stroke-width="1.1" stroke-linejoin="round"/>
<polygon points="784.9,555.1 816.6,529.1 800.5,515.4 782.2,530.3" fill="url(#g89)" stroke="#000" stroke-width="1.1" stroke-linejoin="round"/>
<polygon points="764.2,520 782.2,530.3 800.5,515.4 782.5,505.2" fill="#85827b" stroke="#000" stroke-width="1.1" stroke-linejoin="round"/>
<polygon points="784.9,555.1 818,574.2 849.7,547.8 816.6,529.1" fill="#4a4945" stroke="#000" stroke-width="1.2" stroke-linejoin="round"/>
<polygon points="784.9,555.1 818,574.2 815.4,549.3 797,538.8" fill="url(#g90)" stroke="#000" stroke-width="1.1" stroke-linejoin="round"/>
<polygon points="818,574.2 849.7,547.8 833.7,534.2 815.4,549.3" fill="url(#g91)" stroke="#000" stroke-width="1.1" stroke-linejoin="round"/>
<polygon points="797,538.8 815.4,549.3 833.7,534.2 815.3,523.8" fill="#85827b" stroke="#000" stroke-width="1.1" stroke-linejoin="round"/>
<polygon points="818,574.2 851.8,593.8 883.4,567 849.7,547.8" fill="#4a4945" stroke="#000" stroke-width="1.2" stroke-linejoin="round"/>
<polygon points="818,574.2 851.8,593.8 849.1,568.6 830.4,557.9" fill="url(#g92)" stroke="#000" stroke-width="1.1" stroke-linejoin="round"/>
<polygon points="851.8,593.8 883.4,567 867.4,553.2 849.1,568.6" fill="url(#g93)" stroke="#000" stroke-width="1.1" stroke-linejoin="round"/>
<polygon points="830.4,557.9 849.1,568.6 867.4,553.2 848.7,542.7" fill="#85827b" stroke="#000" stroke-width="1.1" stroke-linejoin="round"/>
<polygon points="851.8,593.8 886.1,613.6 917.8,586.4 883.4,567" fill="#4a4945" stroke="#000" stroke-width="1.2" stroke-linejoin="round"/>
<polygon points="851.8,593.8 886.1,613.6 883.5,588.3 864.5,577.4" fill="url(#g94)" stroke="#000" stroke-width="1.1" stroke-linejoin="round"/>
<polygon points="886.1,613.6 917.8,586.4 901.8,572.7 883.5,588.3" fill="url(#g95)" stroke="#000" stroke-width="1.1" stroke-linejoin="round"/>
<polygon points="864.5,577.4 883.5,588.3 901.8,572.7 882.8,561.9" fill="#85827b" stroke="#000" stroke-width="1.1" stroke-linejoin="round"/>
<polygon points="886.1,613.6 921.1,633.9 952.8,606.3 917.8,586.4" fill="#4a4945" stroke="#000" stroke-width="1.2" stroke-linejoin="round"/>
<polygon points="886.1,613.6 921.1,633.9 918.6,608.3 899.2,597.2" fill="url(#g96)" stroke="#000" stroke-width="1.1" stroke-linejoin="round"/>
<polygon points="921.1,633.9 952.8,606.3 936.9,592.5 918.6,608.3" fill="url(#g97)" stroke="#000" stroke-width="1.1" stroke-linejoin="round"/>
<polygon points="899.2,597.2 918.6,608.3 936.9,592.5 917.5,581.5" fill="#85827b" stroke="#000" stroke-width="1.1" stroke-linejoin="round"/>
<polygon points="921.1,633.9 956.8,654.6 988.5,626.5 952.8,606.3" fill="#4a4945" stroke="#000" stroke-width="1.2" stroke-linejoin="round"/>
<polygon points="921.1,633.9 956.8,654.6 954.3,628.8 934.5,617.5" fill="url(#g98)" stroke="#000" stroke-width="1.1" stroke-linejoin="round"/>
<polygon points="956.8,654.6 988.5,626.5 972.6,612.7 954.3,628.8" fill="url(#g99)" stroke="#000" stroke-width="1.1" stroke-linejoin="round"/>
<polygon points="934.5,617.5 954.3,628.8 972.6,612.7 952.8,601.5" fill="#85827b" stroke="#000" stroke-width="1.1" stroke-linejoin="round"/>
<polygon points="956.8,654.6 993.2,675.6 1024.8,647.1 988.5,626.5" fill="#4a4945" stroke="#000" stroke-width="1.2" stroke-linejoin="round"/>
<polygon points="956.8,654.6 993.2,675.6 990.7,649.6 970.5,638.1" fill="url(#g100)" stroke="#000" stroke-width="1.1" stroke-linejoin="round"/>
<polygon points="993.2,675.6 1024.8,647.1 1009,633.3 990.7,649.6" fill="url(#g101)" stroke="#000" stroke-width="1.1" stroke-linejoin="round"/>
<polygon points="970.5,638.1 990.7,649.6 1009,633.3 988.8,621.9" fill="#85827b" stroke="#000" stroke-width="1.1" stroke-linejoin="round"/>
<polygon points="993.2,675.6 1030.3,697.1 1061.9,668.1 1024.8,647.1" fill="#4a4945" stroke="#000" stroke-width="1.2" stroke-linejoin="round"/>
<polygon points="993.2,675.6 1030.3,697.1 1027.8,670.9 1007.3,659.1" fill="url(#g102)" stroke="#000" stroke-width="1.1" stroke-linejoin="round"/>
<polygon points="1030.3,697.1 1061.9,668.1 1046.1,654.2 1027.8,670.9" fill="url(#g103)" stroke="#000" stroke-width="1.1" stroke-linejoin="round"/>
<polygon points="1007.3,659.1 1027.8,670.9 1046.1,654.2 1025.5,642.6" fill="#85827b" stroke="#000" stroke-width="1.1" stroke-linejoin="round"/>
<polygon points="1030.3,697.1 1068.1,719 1099.7,689.5 1061.9,668.1" fill="#4a4945" stroke="#000" stroke-width="1.2" stroke-linejoin="round"/>
<polygon points="1030.3,697.1 1068.1,719 1065.7,692.6 1044.7,680.6" fill="url(#g104)" stroke="#000" stroke-width="1.1" stroke-linejoin="round"/>
<polygon points="1068.1,719 1099.7,689.5 1083.9,675.6 1065.7,692.6" fill="url(#g105)" stroke="#000" stroke-width="1.1" stroke-linejoin="round"/>
<polygon points="1044.7,680.6 1065.7,692.6 1083.9,675.6 1063,663.8" fill="#85827b" stroke="#000" stroke-width="1.1" stroke-linejoin="round"/>
<polygon points="1068.1,719 1106.7,741.3 1138.2,711.3 1099.7,689.5" fill="#4a4945" stroke="#000" stroke-width="1.2" stroke-linejoin="round"/>
<polygon points="1068.1,719 1106.7,741.3 1104.3,714.7 1082.9,702.4" fill="url(#g106)" stroke="#000" stroke-width="1.1" stroke-linejoin="round"/>
<polygon points="1106.7,741.3 1138.2,711.3 1122.5,697.5 1104.3,714.7" fill="url(#g107)" stroke="#000" stroke-width="1.1" stroke-linejoin="round"/>
<polygon points="1082.9,702.4 1104.3,714.7 1122.5,697.5 1101.2,685.4" fill="#85827b" stroke="#000" stroke-width="1.1" stroke-linejoin="round"/>
<polygon points="1106.7,741.3 1146.1,764.1 1177.5,733.6 1138.2,711.3" fill="#4a4945" stroke="#000" stroke-width="1.2" stroke-linejoin="round"/>
<polygon points="1106.7,741.3 1146.1,764.1 1143.7,737.2 1121.9,724.7" fill="url(#g108)" stroke="#000" stroke-width="1.1" stroke-linejoin="round"/>
<polygon points="1146.1,764.1 1177.5,733.6 1161.9,719.7 1143.7,737.2" fill="url(#g109)" stroke="#000" stroke-width="1.1" stroke-linejoin="round"/>
<polygon points="1121.9,724.7 1143.7,737.2 1161.9,719.7 1140.1,707.4" fill="#85827b" stroke="#000" stroke-width="1.1" stroke-linejoin="round"/>
<polygon points="1146.1,764.1 1196.4,793.2 1258.6,731.4 1208.4,703.6" fill="#4a4945" stroke="#000" stroke-width="1.2" stroke-linejoin="round"/>
<polygon points="1146.1,764.1 1196.4,793.2 1194.1,766.1 1161.7,747.5" fill="url(#g110)" stroke="#000" stroke-width="1.1" stroke-linejoin="round"/>
<polygon points="1196.4,793.2 1258.6,731.4 1243.4,717.5 1194.1,766.1" fill="url(#g111)" stroke="#000" stroke-width="1.1" stroke-linejoin="round"/>
<polygon points="1161.7,747.5 1194.1,766.1 1243.4,717.5 1211,699.6" fill="#85827b" stroke="#000" stroke-width="1.1" stroke-linejoin="round"/>
<polygon points="1176.1,844.9 1193.4,828.2 1215.9,840.4 1208.8,862.2" fill="url(#g112)" stroke="#000" stroke-width="1.1" stroke-linejoin="round"/>
<polygon points="1215.9,840.4 1248.6,833.3 1249.9,839.7 1224.2,846.1 1208.8,862.2" fill="#4b4a46" stroke="#000" stroke-width="1.0" stroke-linejoin="round"/>
<polygon points="1193.4,828.2 1227.4,792.2 1251.2,805.7 1248.6,833.3 1215.9,840.4" fill="#85827b" stroke="#000" stroke-width="1.1" stroke-linejoin="round"/>
<polygon points="1251.2,805.7 1257.6,812.1 1256.3,838.4 1249.9,839.7 1248.6,833.3" fill="#4b4a46" stroke="#000" stroke-width="1.0" stroke-linejoin="round"/>
<polygon points="1256.3,838.4 1274.9,844.9 1305.1,836.5 1313.5,841.6 1275.6,850 1270.5,850 1249.9,839.7" fill="#4b4a46" stroke="#000" stroke-width="1.0" stroke-linejoin="round"/>
<polygon points="1323.1,816 1339.2,832.7 1325.7,846.8 1313.5,841.6 1305.1,836.5" fill="url(#g113)" stroke="#000" stroke-width="1.1" stroke-linejoin="round"/>
<polygon points="1257.6,812.1 1278.8,790.9 1323.1,816 1305.1,836.5 1274.9,844.9 1256.3,838.4" fill="#85827b" stroke="#000" stroke-width="1.1" stroke-linejoin="round"/>
<polygon points="633.9,511.2 704.2,552.8 736.4,527 666,486.2" fill="#4a4945" stroke="#000" stroke-width="1.2" stroke-linejoin="round"/>
<polygon points="633.9,511.2 704.2,552.8 701.4,528.2 644.8,495.1" fill="url(#g114)" stroke="#000" stroke-width="1.1" stroke-linejoin="round"/>
<polygon points="704.2,552.8 736.4,527 720,513.4 701.4,528.2" fill="url(#g115)" stroke="#000" stroke-width="1.1" stroke-linejoin="round"/>
<polygon points="644.8,495.1 701.4,528.2 720,513.4 663.4,480.7" fill="#85827b" stroke="#000" stroke-width="1.1" stroke-linejoin="round"/>
<polygon points="704.2,552.8 736.4,571.8 768.6,545.6 736.4,527" fill="#4a4945" stroke="#000" stroke-width="1.2" stroke-linejoin="round"/>
<polygon points="704.2,552.8 736.4,571.8 733.6,547 715.8,536.6" fill="url(#g116)" stroke="#000" stroke-width="1.1" stroke-linejoin="round"/>
<polygon points="736.4,571.8 768.6,545.6 752.2,532 733.6,547" fill="url(#g117)" stroke="#000" stroke-width="1.1" stroke-linejoin="round"/>
<polygon points="715.8,536.6 733.6,547 752.2,532 734.4,521.7" fill="#85827b" stroke="#000" stroke-width="1.1" stroke-linejoin="round"/>
<polygon points="736.4,571.8 769.2,591.2 801.4,564.6 768.6,545.6" fill="#4a4945" stroke="#000" stroke-width="1.2" stroke-linejoin="round"/>
<polygon points="736.4,571.8 769.2,591.2 766.4,566.2 748.3,555.6" fill="url(#g118)" stroke="#000" stroke-width="1.1" stroke-linejoin="round"/>
<polygon points="769.2,591.2 801.4,564.6 785,550.9 766.4,566.2" fill="url(#g119)" stroke="#000" stroke-width="1.1" stroke-linejoin="round"/>
<polygon points="748.3,555.6 766.4,566.2 785,550.9 766.9,540.5" fill="#85827b" stroke="#000" stroke-width="1.1" stroke-linejoin="round"/>
<polygon points="769.2,591.2 802.6,611 834.8,583.9 801.4,564.6" fill="#4a4945" stroke="#000" stroke-width="1.2" stroke-linejoin="round"/>
<polygon points="769.2,591.2 802.6,611 799.9,585.8 781.4,574.9" fill="url(#g120)" stroke="#000" stroke-width="1.1" stroke-linejoin="round"/>
<polygon points="802.6,611 834.8,583.9 818.5,570.3 799.9,585.8" fill="url(#g121)" stroke="#000" stroke-width="1.1" stroke-linejoin="round"/>
<polygon points="781.4,574.9 799.9,585.8 818.5,570.3 800,559.6" fill="#85827b" stroke="#000" stroke-width="1.1" stroke-linejoin="round"/>
<polygon points="802.6,611 836.6,631.1 868.9,603.7 834.8,583.9" fill="#4a4945" stroke="#000" stroke-width="1.2" stroke-linejoin="round"/>
<polygon points="802.6,611 836.6,631.1 833.9,605.7 815.1,594.7" fill="url(#g122)" stroke="#000" stroke-width="1.1" stroke-linejoin="round"/>
<polygon points="836.6,631.1 868.9,603.7 852.6,589.9 833.9,605.7" fill="url(#g123)" stroke="#000" stroke-width="1.1" stroke-linejoin="round"/>
<polygon points="815.1,594.7 833.9,605.7 852.6,589.9 833.7,579.1" fill="#85827b" stroke="#000" stroke-width="1.1" stroke-linejoin="round"/>
<polygon points="836.6,631.1 871.3,651.7 903.6,623.7 868.9,603.7" fill="#4a4945" stroke="#000" stroke-width="1.2" stroke-linejoin="round"/>
<polygon points="836.6,631.1 871.3,651.7 868.6,626 849.4,614.8" fill="url(#g124)" stroke="#000" stroke-width="1.1" stroke-linejoin="round"/>
<polygon points="871.3,651.7 903.6,623.7 887.3,610 868.6,626" fill="url(#g125)" stroke="#000" stroke-width="1.1" stroke-linejoin="round"/>
<polygon points="849.4,614.8 868.6,626 887.3,610 868.1,598.9" fill="#85827b" stroke="#000" stroke-width="1.1" stroke-linejoin="round"/>
<polygon points="871.3,651.7 906.7,672.6 938.9,644.2 903.6,623.7" fill="#4a4945" stroke="#000" stroke-width="1.2" stroke-linejoin="round"/>
<polygon points="871.3,651.7 906.7,672.6 904,646.7 884.4,635.3" fill="url(#g126)" stroke="#000" stroke-width="1.1" stroke-linejoin="round"/>
<polygon points="906.7,672.6 938.9,644.2 922.7,630.4 904,646.7" fill="url(#g127)" stroke="#000" stroke-width="1.1" stroke-linejoin="round"/>
<polygon points="884.4,635.3 904,646.7 922.7,630.4 903.1,619.1" fill="#85827b" stroke="#000" stroke-width="1.1" stroke-linejoin="round"/>
<polygon points="906.7,672.6 942.7,693.9 974.9,665 938.9,644.2" fill="#4a4945" stroke="#000" stroke-width="1.2" stroke-linejoin="round"/>
<polygon points="906.7,672.6 942.7,693.9 940.1,667.8 920.1,656.1" fill="url(#g128)" stroke="#000" stroke-width="1.1" stroke-linejoin="round"/>
<polygon points="942.7,693.9 974.9,665 958.7,651.3 940.1,667.8" fill="url(#g129)" stroke="#000" stroke-width="1.1" stroke-linejoin="round"/>
<polygon points="920.1,656.1 940.1,667.8 958.7,651.3 938.8,639.7" fill="#85827b" stroke="#000" stroke-width="1.1" stroke-linejoin="round"/>
<polygon points="942.7,693.9 979.5,715.6 1011.7,686.3 974.9,665" fill="#4a4945" stroke="#000" stroke-width="1.2" stroke-linejoin="round"/>
<polygon points="942.7,693.9 979.5,715.6 976.9,689.3 956.5,677.4" fill="url(#g130)" stroke="#000" stroke-width="1.1" stroke-linejoin="round"/>
<polygon points="979.5,715.6 1011.7,686.3 995.5,672.5 976.9,689.3" fill="url(#g131)" stroke="#000" stroke-width="1.1" stroke-linejoin="round"/>
<polygon points="956.5,677.4 976.9,689.3 995.5,672.5 975.2,660.8" fill="#85827b" stroke="#000" stroke-width="1.1" stroke-linejoin="round"/>
<polygon points="979.5,715.6 1017,737.8 1049.1,708 1011.7,686.3" fill="#4a4945" stroke="#000" stroke-width="1.2" stroke-linejoin="round"/>
<polygon points="979.5,715.6 1017,737.8 1014.4,711.3 993.7,699.1" fill="url(#g132)" stroke="#000" stroke-width="1.1" stroke-linejoin="round"/>
<polygon points="1017,737.8 1049.1,708 1033,694.2 1014.4,711.3" fill="url(#g133)" stroke="#000" stroke-width="1.1" stroke-linejoin="round"/>
<polygon points="993.7,699.1 1014.4,711.3 1033,694.2 1012.3,682.2" fill="#85827b" stroke="#000" stroke-width="1.1" stroke-linejoin="round"/>
<polygon points="1017,737.8 1055.2,760.4 1087.3,730.1 1049.1,708" fill="#4a4945" stroke="#000" stroke-width="1.2" stroke-linejoin="round"/>
<polygon points="1017,737.8 1055.2,760.4 1052.7,733.7 1031.5,721.3" fill="url(#g134)" stroke="#000" stroke-width="1.1" stroke-linejoin="round"/>
<polygon points="1055.2,760.4 1087.3,730.1 1071.3,716.3 1052.7,733.7" fill="url(#g135)" stroke="#000" stroke-width="1.1" stroke-linejoin="round"/>
<polygon points="1031.5,721.3 1052.7,733.7 1071.3,716.3 1050.1,704.1" fill="#85827b" stroke="#000" stroke-width="1.1" stroke-linejoin="round"/>
<polygon points="1055.2,760.4 1094.2,783.5 1126.3,752.7 1087.3,730.1" fill="#4a4945" stroke="#000" stroke-width="1.2" stroke-linejoin="round"/>
<polygon points="1055.2,760.4 1094.2,783.5 1091.8,756.5 1070.2,743.9" fill="url(#g136)" stroke="#000" stroke-width="1.1" stroke-linejoin="round"/>
<polygon points="1094.2,783.5 1126.3,752.7 1110.3,738.8 1091.8,756.5" fill="url(#g137)" stroke="#000" stroke-width="1.1" stroke-linejoin="round"/>
<polygon points="1070.2,743.9 1091.8,756.5 1110.3,738.8 1088.7,726.4" fill="#85827b" stroke="#000" stroke-width="1.1" stroke-linejoin="round"/>
<polygon points="1094.2,783.5 1164.5,825 1196.4,793.2 1126.3,752.7" fill="#4a4945" stroke="#000" stroke-width="1.2" stroke-linejoin="round"/>
<polygon points="1094.2,783.5 1164.5,825 1162.1,797.7 1109.6,766.9" fill="url(#g138)" stroke="#000" stroke-width="1.1" stroke-linejoin="round"/>
<polygon points="1164.5,825 1196.4,793.2 1180.6,779.4 1162.1,797.7" fill="url(#g139)" stroke="#000" stroke-width="1.1" stroke-linejoin="round"/>
<polygon points="1109.6,766.9 1162.1,797.7 1180.6,779.4 1128.1,749.1" fill="#85827b" stroke="#000" stroke-width="1.1" stroke-linejoin="round"/>
<polygon points="671.5,579.1 703.6,598.5 736.4,571.8 704.2,552.8" fill="#4a4945" stroke="#000" stroke-width="1.2" stroke-linejoin="round"/>
<polygon points="671.5,579.1 703.6,598.5 700.8,573.5 682.9,562.9" fill="url(#g140)" stroke="#000" stroke-width="1.1" stroke-linejoin="round"/>
<polygon points="703.6,598.5 736.4,571.8 719.7,558.2 700.8,573.5" fill="url(#g141)" stroke="#000" stroke-width="1.1" stroke-linejoin="round"/>
<polygon points="682.9,562.9 700.8,573.5 719.7,558.2 701.9,547.7" fill="#85827b" stroke="#000" stroke-width="1.1" stroke-linejoin="round"/>
<polygon points="703.6,598.5 736.4,618.3 769.2,591.2 736.4,571.8" fill="#4a4945" stroke="#000" stroke-width="1.2" stroke-linejoin="round"/>
<polygon points="703.6,598.5 736.4,618.3 733.6,593.1 715.4,582.3" fill="url(#g142)" stroke="#000" stroke-width="1.1" stroke-linejoin="round"/>
<polygon points="736.4,618.3 769.2,591.2 752.5,577.6 733.6,593.1" fill="url(#g143)" stroke="#000" stroke-width="1.1" stroke-linejoin="round"/>
<polygon points="715.4,582.3 733.6,593.1 752.5,577.6 734.4,566.9" fill="#85827b" stroke="#000" stroke-width="1.1" stroke-linejoin="round"/>
<polygon points="736.4,618.3 1022.5,791.3 1055.2,760.4 769.2,591.2" fill="#4a4945" stroke="#000" stroke-width="1.2" stroke-linejoin="round"/>
<polygon points="736.4,618.3 1022.5,791.3 1019.9,764.4 748.5,602.1" fill="url(#g144)" stroke="#000" stroke-width="1.1" stroke-linejoin="round"/>
<polygon points="1022.5,791.3 1055.2,760.4 1038.9,746.7 1019.9,764.4" fill="url(#g145)" stroke="#000" stroke-width="1.1" stroke-linejoin="round"/>
<polygon points="748.5,602.1 1019.9,764.4 1038.9,746.7 767.4,586.4" fill="#85827b" stroke="#000" stroke-width="1.1" stroke-linejoin="round"/>
<polygon points="1022.5,791.3 1061.6,815 1094.2,783.5 1055.2,760.4" fill="#4a4945" stroke="#000" stroke-width="1.2" stroke-linejoin="round"/>
<polygon points="1022.5,791.3 1061.6,815 1059,787.8 1037.4,774.8" fill="url(#g146)" stroke="#000" stroke-width="1.1" stroke-linejoin="round"/>
<polygon points="1061.6,815 1094.2,783.5 1077.9,769.7 1059,787.8" fill="url(#g147)" stroke="#000" stroke-width="1.1" stroke-linejoin="round"/>
<polygon points="1037.4,774.8 1059,787.8 1077.9,769.7 1056.3,757" fill="#85827b" stroke="#000" stroke-width="1.1" stroke-linejoin="round"/>
<polygon points="1270.5,850 1275.6,850 1279.4,879.5 1274.3,903.9 1273,902 1269.8,875" fill="#4b4a46" stroke="#000" stroke-width="1.0" stroke-linejoin="round"/>
<polygon points="1188.3,883.4 1206.2,866.7 1251.2,891.7 1253.1,922.6" fill="url(#g148)" stroke="#000" stroke-width="1.1" stroke-linejoin="round"/>
<polygon points="1251.2,891.7 1269.8,875 1273,902 1253.1,922.6" fill="url(#g149)" stroke="#000" stroke-width="1.1" stroke-linejoin="round"/>
<polygon points="1206.2,865.4 1224.2,846.1 1252.5,840.4 1270.5,850 1269.8,875 1251.2,891.7" fill="#85827b" stroke="#000" stroke-width="1.1" stroke-linejoin="round"/>
<polygon points="1274.3,903.9 1279.4,879.5 1303.2,891.1 1305.8,921.9" fill="url(#g150)" stroke="#000" stroke-width="1.1" stroke-linejoin="round"/>
<polygon points="1303.2,891.1 1337.9,855.8 1354.6,871.2 1305.8,921.9" fill="url(#g151)" stroke="#000" stroke-width="1.1" stroke-linejoin="round"/>
<polygon points="1279.4,879.5 1275.6,850 1313.5,841.6 1337.9,855.8 1303.2,891.1" fill="#85827b" stroke="#000" stroke-width="1.1" stroke-linejoin="round"/>
</g>
</svg>
<div class="abs" style="left:0px;top:0px;width:8px;height:1168px;background:#ffffff;"></div>
<div class="abs" style="left:0px;top:0px;width:8px;height:41px;background:#dfe3ec;"></div>
<div class="abs" style="left:-10px;top:41px;width:18px;height:46px;background:#fff;border-radius:0 8px 0 0"></div>
<div class="abs" style="left:-12px;top:52px;width:14px;height:26px;background:#d6e2fb;border-radius:50%"></div>
<div class="abs" style="left:0px;top:87px;width:8px;height:1px;background:#e0e0e0;"></div>
<svg class="abs" style="left:0px;top:93px" width="4" height="6" viewBox="0 0 4 6"><path d="M-2 5L1 1l3 4z" fill="#555"/></svg>
<div class="abs" style="left:0px;top:104px;width:6px;height:291px;background:#5c5c5c;"></div>
<svg class="abs" style="left:0px;top:1026px" width="4" height="6" viewBox="0 0 4 6"><path d="M-2 1L1 5l3-4z" fill="#555"/></svg>
<div class="abs" style="left:0px;top:1040px;width:8px;height:128px;background:#000;"></div>
<svg class="abs" style="left:0px;top:1063px" width="4" height="6" viewBox="0 0 4 6"><path d="M-2 1L1 5l3-4z" fill="#ddd"/></svg>
<div class="abs" style="left:0px;top:1058px;width:8px;height:28px;background:#1a1a1a;"></div>
<div class="abs" style="left:8px;top:0px;width:1920px;height:23px;background:#fff;"></div>
<svg class="abs" style="left:12px;top:3px" width="16" height="17" viewBox="0 0 16 17"><defs><linearGradient id="fl" x1="0" y1="0" x2="0" y2="1"><stop offset="0" stop-color="#ff7a1a"/><stop offset="1" stop-color="#f0550c"/></linearGradient></defs><path d="M1 2.5L3.5 0.5h10Q15 0.5 15 2v12.5l-1.5 1.8H2.5Q1 16.3 1 14.8z" fill="url(#fl)"/><path d="M2.2 11.5h11.5v4.2H3.5Q2.2 15.7 2.2 14.5z" fill="#a83c06"/><path d="M5.6 3.3h4.6v1.5H7.2v1.7h2.6V8H7.2v2.6H5.6z" fill="#fff"/><rect x="4.6" y="12.6" width="5.6" height="1.4" fill="#f3a06a"/></svg>
<span class="t" style="left:31px;top:4.4px;font-size:12px;line-height:16px;color:#000;-webkit-text-stroke:0;"><span class="a">PHC-27 v13* (g catsin) - Autodesk Fusion </span><span class="c" style="width:33.86px"><span class="k" style="transform:scaleX(0.940)">個人用</span></span><span class="a">(</span><span class="c" style="width:67.70px"><span class="k" style="transform:scaleX(0.940)">商用利用不可</span></span><span class="a">)</span></span>
<svg class="abs" style="left:1806px;top:5px" width="12" height="12" viewBox="0 0 12 12"><path d="M0.5 6h10.5" stroke="#000" stroke-width="1"/></svg>
<svg class="abs" style="left:1851px;top:4px" width="13" height="13" viewBox="0 0 13 13"><path d="M1 4h8v8H1zM3.5 4V2.5Q3.5 1.5 4.5 1.5h6Q11.5 1.5 11.5 2.5v6Q11.5 9.5 10.5 9.5H9" fill="none" stroke="#000" stroke-width="1"/></svg>
<svg class="abs" style="left:1897px;top:4px" width="13" height="13" viewBox="0 0 13 13"><path d="M1.5 1.5l10 10M11.5 1.5l-10 10" stroke="#000" stroke-width="1.1"/></svg>
<div class="abs" style="left:8px;top:23px;width:1920px;height:32px;background:#c8c8c8;"></div>
<div class="abs" style="left:201px;top:27px;width:1477px;height:28px;background:#f2f2f2;border-radius:4px 4px 0 0"></div>
<div class="abs" style="left:8px;top:55px;width:1920px;height:81px;background:#f2f2f2;"></div>
<div class="abs" style="left:8px;top:136px;width:1920px;height:1px;background:#dddddd;"></div>
<div class="abs" style="left:8px;top:137px;width:1920px;height:2.8px;background:#f4f4f4;"></div>
<svg class="abs" style="left:17px;top:32px" width="14" height="14" viewBox="0 0 14 14"><rect x="0" y="0" width="3.6" height="3.6" rx="0.6" fill="#595959"/><rect x="0" y="5.1" width="3.6" height="3.6" rx="0.6" fill="#595959"/><rect x="0" y="10.2" width="3.6" height="3.6" rx="0.6" fill="#595959"/><rect x="5.1" y="0" width="3.6" height="3.6" rx="0.6" fill="#595959"/><rect x="5.1" y="5.1" width="3.6" height="3.6" rx="0.6" fill="#595959"/><rect x="5.1" y="10.2" width="3.6" height="3.6" rx="0.6" fill="#595959"/><rect x="10.2" y="0" width="3.6" height="3.6" rx="0.6" fill="#595959"/><rect x="10.2" y="5.1" width="3.6" height="3.6" rx="0.6" fill="#595959"/><rect x="10.2" y="10.2" width="3.6" height="3.6" rx="0.6" fill="#595959"/></svg>
<svg class="abs" style="left:50px;top:31px" width="14" height="16" viewBox="0 0 14 16"><path d="M0.5 1Q0.5 0 1.5 0H9l4 4v11Q13 16 12 16H1.5Q0.5 16 0.5 15z" fill="#595959"/><path d="M9.3 0.4v3.4h3.4" fill="#c8c8c8"/></svg>
<svg class="abs" style="left:69px;top:36px" width="8" height="6" viewBox="0 0 8 6"><path d="M0.5 0.5h6.6L3.8 5.2z" fill="#595959"/></svg>
<svg class="abs" style="left:95px;top:32px" width="14" height="14" viewBox="0 0 14 14"><path d="M0 1.2Q0 0 1.2 0h11.6Q14 0 14 1.2v11.6Q14 14 12.8 14H1.8L0 12.2z" fill="#595959"/><rect x="3.2" y="1.6" width="7.6" height="4.2" fill="#c8c8c8"/><rect x="4" y="8.6" width="6.2" height="5.4" fill="#c8c8c8"/><rect x="5.4" y="10" width="3.2" height="4" fill="#595959"/></svg>
<svg class="abs" style="left:128px;top:33px" width="14" height="13" viewBox="0 0 14 13"><path d="M5.2 0.8L1.2 4.8l4 4M1.6 4.8h6.2Q12.6 4.8 12.6 9.6V12" fill="none" stroke="#595959" stroke-width="1.9" stroke-linejoin="round"/></svg>
<svg class="abs" style="left:148px;top:36px" width="8" height="6" viewBox="0 0 8 6"><path d="M0.5 0.5h6.6L3.8 5.2z" fill="#595959"/></svg>
<svg class="abs" style="left:167px;top:33px" width="14" height="13" viewBox="0 0 14 13"><path d="M8.8 0.8l4 4-4 4M12.4 4.8H6.2Q1.4 4.8 1.4 9.6V12" fill="none" stroke="#9b9b9b" stroke-width="1.9" stroke-linejoin="round"/></svg>
<svg class="abs" style="left:187px;top:36px" width="8" height="6" viewBox="0 0 8 6"><path d="M0.5 0.5h6.6L3.8 5.2z" fill="#9b9b9b"/></svg>
<svg class="abs" style="left:887px;top:33px" width="17" height="17" viewBox="0 0 17 17"><path d="M8.5 0.8L15.8 4.4v8.2L8.5 16.2 1.2 12.6V4.4z" fill="#f58b3c"/><path d="M8.5 0.8L15.8 4.4 8.5 8 1.2 4.4z" fill="#fbb170"/><path d="M8.5 8l7.3-3.6v8.2L8.5 16.2z" fill="#e0691c"/></svg>
<span class="t" style="left:908px;top:34.4px;font-size:12px;line-height:16px;color:#333;-webkit-text-stroke:0;transform:scaleX(1.028);">PHC-27 v13*</span>
<svg class="abs" style="left:1662px;top:36px" width="10" height="10" viewBox="0 0 10 10"><path d="M1 1l8 8M9 1l-8 8" stroke="#555" stroke-width="1.2"/></svg>
<div class="abs" style="left:1682px;top:27px;width:28px;height:28px;background:#b6b6b6;border-radius:3px 3px 0 0"></div>
<svg class="abs" style="left:1689px;top:34px" width="14" height="14" viewBox="0 0 14 14"><path d="M7 0.5v13M0.5 7h13" stroke="#707070" stroke-width="2.5"/></svg>
<svg class="abs" style="left:1721px;top:30px" width="18" height="18" viewBox="0 0 18 18"><circle cx="9" cy="9" r="8.3" fill="#1589e3"/><path d="M9 3.2L5.2 8.4h2.5Q7.7 12 6.4 14.4Q10.6 12.8 10.4 8.4h2.5z" fill="#fff"/></svg>
<svg class="abs" style="left:1754px;top:31px" width="18" height="18" viewBox="0 0 18 18"><circle cx="9" cy="9" r="7.4" fill="none" stroke="#595959" stroke-width="1.8"/><path d="M4.2 4.8l4.6 0.4 2.4 3.6-2.6 4.6-4.4-1.8z" fill="#595959"/><path d="M11.8 3.2l-2.2 3.2" stroke="#c8c8c8" stroke-width="1.3"/></svg>
<svg class="abs" style="left:1787px;top:31px" width="18" height="18" viewBox="0 0 18 18"><circle cx="9" cy="9" r="7.6" fill="#595959"/><circle cx="9" cy="9" r="5.6" fill="none" stroke="#c8c8c8" stroke-width="1"/><path d="M9 5v4.3h3.4" fill="none" stroke="#c8c8c8" stroke-width="1.5"/></svg>
<svg class="abs" style="left:1820px;top:30px" width="18" height="19" viewBox="0 0 18 19"><path d="M9 2Q4.4 2.6 4.4 8.2v3.6L2.6 14.4h12.8L13.6 11.8V8.2Q13.6 2.6 9 2z" fill="#595959"/><path d="M7.2 15.4h3.6Q9 18 7.2 15.4z" fill="#595959"/><circle cx="13.2" cy="3.6" r="3" fill="#1b9ae6"/></svg>
<svg class="abs" style="left:1853px;top:31px" width="18" height="18" viewBox="0 0 18 18"><circle cx="9" cy="9" r="8" fill="#595959"/><path d="M6.3 7Q6.3 4.2 9 4.2t2.8 2.5Q11.8 8.2 10.2 9 9.1 9.7 9.1 11" fill="none" stroke="#c8c8c8" stroke-width="1.9"/><circle cx="9.1" cy="13.6" r="1.2" fill="#c8c8c8"/></svg>
<div class="abs" style="left:1891px;top:27px;width:24px;height:24px;border-radius:50%;background:linear-gradient(#8fa3c4,#c9d2e3);overflow:hidden"><div class="abs" style="left:7px;top:3px;width:11px;height:12px;border-radius:50%;background:#4a5a78"></div><div class="abs" style="left:2px;top:14px;width:20px;height:14px;border-radius:50% 50% 0 0;background:#4a5a78"></div></div>
<div class="abs" style="left:19.5px;top:65.5px;width:109px;height:60px;border:1.5px solid #d9d9d9;border-radius:6px;box-sizing:border-box;background:#f2f2f2"></div>
<span class="t" style="left:53px;top:89.4px;font-size:11px;line-height:15px;color:#222;font-weight:bold;-webkit-text-stroke:0;transform:scaleX(0.795);">デザイン</span>
<svg class="abs" style="left:92px;top:93.5px" width="8" height="6" viewBox="0 0 8 6"><path d="M0.4 0.4h6.4L3.6 5z" fill="#333"/></svg>
<span class="t" style="left:158.5px;top:60.4px;font-size:11px;line-height:15px;color:#0a8fd6;transform:scaleX(0.739);">ソリッド</span>
<div class="abs" style="left:146.5px;top:75.5px;width:56px;height:3px;background:#0696d7;border-radius:1.5px;"></div>
<span class="t" style="left:236.4px;top:60.4px;font-size:11px;line-height:15px;color:#333;transform:scaleX(0.710);">サーフェス</span>
<span class="t" style="left:319.2px;top:60.4px;font-size:11px;line-height:15px;color:#333;transform:scaleX(0.693);">メッシュ</span>
<span class="t" style="left:397px;top:60.4px;font-size:11px;line-height:15px;color:#333;transform:scaleX(0.717);">フォーム</span>
<span class="t" style="left:475.5px;top:60.4px;font-size:11px;line-height:15px;color:#333;"><span class="c" style="width:24.22px"><span class="k" style="transform:scaleX(0.734)">シート</span></span><span class="a"> </span><span class="c" style="width:24.22px"><span class="k" style="transform:scaleX(0.734)">メタル</span></span></span>
<span class="t" style="left:572.8px;top:60.4px;font-size:11px;line-height:15px;color:#333;transform:scaleX(0.718);">プラスチック</span>
<span class="t" style="left:666.1px;top:60.4px;font-size:11px;line-height:15px;color:#333;transform:scaleX(0.707);">ユーティリティ</span>
<span class="t" style="left:229.6px;top:120.4px;font-size:11px;line-height:15px;color:#333;transform:scaleX(0.964);">作成</span>
<svg class="abs" style="left:254.2px;top:123.6px" width="7" height="5" viewBox="0 0 7 5"><path d="M0.3 0.3h6L3.3 4.4z" fill="#222"/></svg>
<span class="t" style="left:476.2px;top:120.4px;font-size:11px;line-height:15px;color:#333;transform:scaleX(0.955);">修正</span>
<svg class="abs" style="left:500.8px;top:123.6px" width="7" height="5" viewBox="0 0 7 5"><path d="M0.3 0.3h6L3.3 4.4z" fill="#222"/></svg>
<span class="t" style="left:650.5px;top:120.4px;font-size:11px;line-height:15px;color:#333;transform:scaleX(0.744);">アセンブリ</span>
<svg class="abs" style="left:693.7px;top:123.6px" width="7" height="5" viewBox="0 0 7 5"><path d="M0.3 0.3h6L3.3 4.4z" fill="#222"/></svg>
<span class="t" style="left:739.3px;top:120.4px;font-size:11px;line-height:15px;color:#333;transform:scaleX(0.707);">コンフィギュレーション</span>
<svg class="abs" style="left:827.7px;top:123.6px" width="7" height="5" viewBox="0 0 7 5"><path d="M0.3 0.3h6L3.3 4.4z" fill="#222"/></svg>
<span class="t" style="left:864px;top:120.4px;font-size:11px;line-height:15px;color:#333;transform:scaleX(0.982);">構築</span>
<svg class="abs" style="left:888.7px;top:123.6px" width="7" height="5" viewBox="0 0 7 5"><path d="M0.3 0.3h6L3.3 4.4z" fill="#222"/></svg>
<span class="t" style="left:922.2px;top:120.4px;font-size:11px;line-height:15px;color:#333;transform:scaleX(0.959);">検査</span>
<svg class="abs" style="left:946.7px;top:123.6px" width="7" height="5" viewBox="0 0 7 5"><path d="M0.3 0.3h6L3.3 4.4z" fill="#222"/></svg>
<span class="t" style="left:998px;top:120.4px;font-size:11px;line-height:15px;color:#333;transform:scaleX(0.986);">挿入</span>
<svg class="abs" style="left:1022.2px;top:123.6px" width="7" height="5" viewBox="0 0 7 5"><path d="M0.3 0.3h6L3.3 4.4z" fill="#222"/></svg>
<span class="t" style="left:1078.3px;top:120.4px;font-size:11px;line-height:15px;color:#333;transform:scaleX(0.986);">選択</span>
<svg class="abs" style="left:1102.2px;top:123.6px" width="7" height="5" viewBox="0 0 7 5"><path d="M0.3 0.3h6L3.3 4.4z" fill="#222"/></svg>
<div class="abs" style="left:358.2px;top:81.5px;width:1.9px;height:50.5px;background:#dadada;"></div>
<div class="abs" style="left:627.4px;top:81.5px;width:1.9px;height:50.5px;background:#dadada;"></div>
<div class="abs" style="left:724.4px;top:81.5px;width:1.9px;height:50.5px;background:#dadada;"></div>
<div class="abs" style="left:848.3px;top:81.5px;width:1.9px;height:50.5px;background:#dadada;"></div>
<div class="abs" style="left:907.5px;top:81.5px;width:1.9px;height:50.5px;background:#dadada;"></div>
<div class="abs" style="left:966.3px;top:81.5px;width:1.9px;height:50.5px;background:#dadada;"></div>
<div class="abs" style="left:1063.4px;top:81.5px;width:1.9px;height:50.5px;background:#dadada;"></div>
<svg class="abs" style="left:145px;top:82px" width="33" height="33" viewBox="0 0 33 33"><path d="M1.3 1.6H28.3M1.3 1.6V28.7M28.3 1.6V17M1.3 28.7H16" fill="none" stroke="#555" stroke-width="1" stroke-dasharray="9 2.5"/><path d="M8.1 8.5H21.5M8.1 8.5V21.7" fill="none" stroke="#555" stroke-width="1" stroke-dasharray="5 2"/><path d="M21.5 8.5Q21 19 9.4 21.7" fill="none" stroke="#555" stroke-width="1"/><rect x="0" y="0.3" width="2.6" height="2.6" fill="#555"/><rect x="27" y="0.3" width="2.6" height="2.6" fill="#555"/><rect x="0" y="27.4" width="2.6" height="2.6" fill="#555"/><rect x="6.8" y="7.2" width="2.6" height="2.6" fill="#555"/><rect x="20.2" y="7.2" width="2.6" height="2.6" fill="#555"/><rect x="6.8" y="20.4" width="2.6" height="2.6" fill="#555"/><path d="M22.8 18.6h4.2v4.9h4.9v4.2h-4.9v4.9h-4.2v-4.9h-4.9v-4.2h4.9z" fill="#1faa3c"/></svg>
<svg class="abs" style="left:188.8px;top:82px" width="31" height="32" viewBox="0 0 31 32"><path d="M0.3 26.3H18.4V31.9H0.3z" fill="#b9b9b9"/><path d="M18.4 26.3L24 20.7V27.5L18.4 31.9z" fill="#9b9b9b"/><path d="M0.3 6.4H18.4V26.3H0.3z" fill="#6aade4"/><path d="M0.3 6.4L5.9 0.4H24L18.4 6.4z" fill="#8ccafb"/><path d="M18.4 6.4L24 0.4V20.7L18.4 26.3z" fill="#3f8bcd"/><path d="M27.7 25.8V3" stroke="#222" stroke-width="1.1"/><path d="M25.6 5.4L27.7 0.8 29.8 5.4z" fill="#222"/></svg>
<svg class="abs" style="left:230.8px;top:83px" width="33" height="30" viewBox="0 0 33 30"><path d="M1 11.8Q14.5 1.5 30 9.5L30 13 26 17.8Q14 11.8 6 19.5L1 16.5z" fill="#8ccafb"/><path d="M1 16Q3 15 6 18.8Q14.5 12 26 17.5V26.5Q15 21.5 6 28L1 23.5z" fill="#6aade4"/><path d="M1 16l5 3V28l-5-4.5z" fill="#3f8bcd"/><path d="M26.2 17.4L31 12.6V21.6L26.2 26.6z" fill="#fff" stroke="#333" stroke-width="1" stroke-linejoin="round"/><path d="M29.6 6.2Q16 -2.2 3 5" fill="none" stroke="#222" stroke-width="1"/><path d="M0.8 6.4L5.6 2.6 5.9 6.6z" fill="#222"/></svg>
<svg class="abs" style="left:273.8px;top:82px" width="33" height="33" viewBox="0 0 33 33"><path d="M0.5 6.5H26V31.5H0.5z" fill="#dadada"/><path d="M0.5 6.5L6 0.6H31.6L26 6.5z" fill="#f0f0f0"/><path d="M26 6.5L31.6 0.6V25.6L26 31.5z" fill="#b4b4b4"/><path d="M0.5 6.5L6 0.6H31.6V25.6L26 31.5H0.5zM0.5 6.5H26V31.5M26 6.5L31.6 0.6" fill="none" stroke="#5a5a5a" stroke-width="1" stroke-linejoin="round"/><circle cx="13.5" cy="18.5" r="8.2" fill="#e8e8e8" stroke="#5a5a5a" stroke-width="1"/><circle cx="13.5" cy="18.5" r="6.2" fill="#3f8bcd"/><path d="M8.2 15.5Q11 11.6 15.5 12.6Q13 16.5 16.6 19.8Q18.5 21 19.6 20.4Q18 25 13.5 24.7Q7.2 24 8.2 15.5z" fill="#6aade4"/><circle cx="15.6" cy="16.3" r="3.9" fill="#e4e4e4"/></svg>
<svg class="abs" style="left:316.7px;top:84px" width="29" height="29" viewBox="0 0 29 29"><path d="M3.6 3.6H24.4M3.6 3.6V24.4H24.4" fill="none" stroke="#555" stroke-width="1"/><rect x="0.6" y="0.6" width="6" height="6" fill="#fff" stroke="#555" stroke-width="1"/><rect x="21.2" y="0.2" width="6.6" height="6.6" fill="#6aade4"/><rect x="0.2" y="21.2" width="6.6" height="6.6" fill="#6aade4"/><rect x="21.2" y="21.2" width="6.6" height="6.6" fill="#6aade4"/></svg>
<svg class="abs" style="left:371.6px;top:82px" width="31" height="33" viewBox="0 0 31 33"><path d="M0.8 6.6L6.6 0.6H11V31.6H0.8z" fill="#e2e2e2" stroke="#5a5a5a" stroke-width="1" stroke-linejoin="round"/><path d="M7.6 6.6H16.6V31.6H7.6z" fill="#6aade4"/><path d="M7.6 6.6L13.4 0.6H22.4L16.6 6.6z" fill="#8ccafb"/><path d="M16.6 6.6L22.4 0.6V25.6L16.6 31.6z" fill="#3f8bcd"/><path d="M19.6 15.6H27" stroke="#222" stroke-width="1.2"/><path d="M25 13L29.6 15.6 25 18.2z" fill="#222"/><path d="M20 15.6h3" stroke="#fff" stroke-width="2.2"/><path d="M19.8 15.6H25" stroke="#222" stroke-width="1"/></svg>
<svg class="abs" style="left:414px;top:82px" width="33" height="33" viewBox="0 0 33 33"><path d="M0.6 31.6V8.6L7.2 0.8H17Q31 3 31.8 16.6V25L25 31.6z" fill="#dadada" stroke="#5a5a5a" stroke-width="1" stroke-linejoin="round"/><path d="M25 31.6V21.6L31.8 16.6V25z" fill="#b4b4b4"/><path d="M17 0.6Q31 2.6 32 16.8L25.2 21.6Q24.6 9.2 12.2 7.2z" fill="#6aade4"/><path d="M0.6 8.6H12.4Q24.4 10 25 21.6" fill="none" stroke="#c4c4c4" stroke-width="0.8"/></svg>
<svg class="abs" style="left:457px;top:82px" width="33" height="33" viewBox="0 0 33 33"><path d="M0.6 7.6H24.6V31.6H0.6z" fill="#dadada"/><path d="M0.6 7.6L7.4 0.8H31.6L24.6 7.6z" fill="#f0f0f0"/><path d="M24.6 7.6L31.6 0.8V24.8L24.6 31.6z" fill="#b4b4b4"/><path d="M0.6 7.6L7.4 0.8H31.6V24.8L24.6 31.6H0.6zM0.6 7.6H24.6V31.6M24.6 7.6L31.6 0.8" fill="none" stroke="#5a5a5a" stroke-width="1" stroke-linejoin="round"/><rect x="3.6" y="10.8" width="17.6" height="17.6" fill="#f4f4f4"/><path d="M4.4 12.4H11.8V20.4H20V27.8H4.4z" fill="#8ccafb"/><path d="M4.4 12.4H11.8V20.4L4.4 27.8z" fill="#3f8bcd"/></svg>
<svg class="abs" style="left:499.7px;top:82px" width="33" height="33" viewBox="0 0 33 33"><path d="M11 7.4H26.6V22.6H11z" fill="#6aade4"/><path d="M11 7.4L16.6 1H32.4L26.6 7.4z" fill="#8ccafb"/><path d="M26.6 7.4L32.4 1V16.4L26.6 22.6z" fill="#3f8bcd"/><path d="M0.4 17H18.4V32.4H0.4z" fill="#6aade4"/><path d="M0.4 17L5.6 11.4H11V17z" fill="#8ccafb"/><path d="M18.4 22.6H26.6V22.6L18.4 32.4z" fill="#3f8bcd"/><path d="M11 11.4h7.4V22.6H11z" fill="#6aade4"/></svg>
<svg class="abs" style="left:543px;top:82px" width="33" height="32" viewBox="0 0 33 32"><path d="M2.6 17.6H25V30.6H2.6z" fill="#dadada" stroke="#5a5a5a" stroke-width="1"/><path d="M25 17.6L30.4 12.4V25.6L25 30.6z" fill="#b4b4b4" stroke="#5a5a5a" stroke-width="1" stroke-linejoin="round"/><path d="M2.6 6.4H25V17H2.6z" fill="#6aade4"/><path d="M2.6 6.4L8.2 0.8H30.4L25 6.4z" fill="#8ccafb"/><path d="M25 6.4L30.4 0.8V11.6L25 17z" fill="#3f8bcd"/><path d="M0 18.4H25.6L32.4 11.6" fill="none" stroke="#fff" stroke-width="2.6"/><path d="M0 18.4H25.6L32.4 11.6" fill="none" stroke="#2a8be0" stroke-width="1.1"/></svg>
<svg class="abs" style="left:586.5px;top:82px" width="32" height="33" viewBox="0 0 32 33"><path d="M15.6 3V30M2.6 16.4H28.8" stroke="#333" stroke-width="1.5"/><path d="M15.6 0.4L20.4 7.6H10.8zM15.6 32.4L20.4 25.2H10.8zM0.2 16.4L7.6 11.6V21.2zM31.2 16.4L23.8 11.6V21.2z" fill="#333"/></svg>
<svg class="abs" style="left:640px;top:82px" width="33" height="33" viewBox="0 0 33 33"><path d="M0.6 18.6H12.8V31.6H0.6z" fill="#dadada"/><path d="M12.8 18.6H24.6V31.6H12.8z" fill="#dadada"/><path d="M12.8 18.6L16.8 15.4H28.2L24.6 18.6z" fill="#f0f0f0"/><path d="M24.6 18.6L28.2 15.4V28L24.6 31.6z" fill="#b4b4b4"/><path d="M0.6 18.6V31.6H24.6L28.2 28V15.4H16.8M12.8 18.6V31.6M12.8 18.6H24.6V31.6M24.6 18.6L28.2 15.4" fill="none" stroke="#5a5a5a" stroke-width="1" stroke-linejoin="round"/><path d="M0.6 7.6H12.8V18.8H0.6z" fill="#6aade4"/><path d="M0.6 7.6L4.8 3.6H16.6L12.8 7.6z" fill="#8ccafb"/><path d="M12.8 7.6L16.6 3.6V15.4L12.8 18.8z" fill="#3f8bcd"/><path d="M0 -8.2L1.6 -2.4 -1.6 -2.4z" transform="translate(23.4 7.8) rotate(0)" fill="#f7a400"/><path d="M0 -8.2L1.6 -2.4 -1.6 -2.4z" transform="translate(23.4 7.8) rotate(45)" fill="#f7a400"/><path d="M0 -8.2L1.6 -2.4 -1.6 -2.4z" transform="translate(23.4 7.8) rotate(90)" fill="#f7a400"/><path d="M0 -8.2L1.6 -2.4 -1.6 -2.4z" transform="translate(23.4 7.8) rotate(135)" fill="#f7a400"/><path d="M0 -8.2L1.6 -2.4 -1.6 -2.4z" transform="translate(23.4 7.8) rotate(180)" fill="#f7a400"/><path d="M0 -8.2L1.6 -2.4 -1.6 -2.4z" transform="translate(23.4 7.8) rotate(225)" fill="#f7a400"/><path d="M0 -8.2L1.6 -2.4 -1.6 -2.4z" transform="translate(23.4 7.8) rotate(270)" fill="#f7a400"/><path d="M0 -8.2L1.6 -2.4 -1.6 -2.4z" transform="translate(23.4 7.8) rotate(315)" fill="#f7a400"/><circle cx="23.4" cy="7.8" r="4.4" fill="#f7a400"/></svg>
<svg class="abs" style="left:684.8px;top:84px" width="29" height="29" viewBox="0 0 29 29"><path d="M0.8 9.6L7 2.2Q9.6 0.2 12.6 1.6V10.4L8.6 12.6V21.6L2.2 27.8H0.8z" fill="#dcdcdc" stroke="#5a5a5a" stroke-width="1.1" stroke-linejoin="round"/><path d="M7.2 2.6Q6.6 8 8.6 12.6" fill="none" stroke="#5a5a5a" stroke-width="0.9"/><path d="M20.8 3.4L27.8 9.8V27.6L20.8 21.6H16V13Q16 10.6 18.4 10.4L20.8 10.6z" fill="#cfcfcf" stroke="#5a5a5a" stroke-width="1.1" stroke-linejoin="round"/><path d="M16 13.4Q18.4 14.6 20.8 13.4V21.6" fill="none" stroke="#5a5a5a" stroke-width="0.9"/><path d="M9.6 13.4V18.2M18.8 6.6V11.6" stroke="#1e88e5" stroke-width="1.2"/></svg>
<svg class="abs" style="left:750px;top:82px" width="33" height="33" viewBox="0 0 33 33"><g opacity="0.55"><path d="M0.6 6.6L6 1H22V26.6H0.6z" fill="#ececec" stroke="#dcdcdc" stroke-width="1"/><circle cx="24" cy="7.8" r="7.6" fill="#b9d6f0"/><path d="M24 3L20.6 7.6H22.8Q22.8 10.6 21.8 12.4Q25.4 11.2 25.2 7.6H27.4z" fill="#fff"/><path d="M18 22.6H31.6M18 28.6H31.6" stroke="#d6d6d6" stroke-width="1.6"/><path d="M22 20V25" stroke="#c2d9ee" stroke-width="2"/><path d="M27.6 26V31.4" stroke="#d6d6d6" stroke-width="2"/></g></svg>
<svg class="abs" style="left:793px;top:82px" width="33" height="33" viewBox="0 0 33 33"><g opacity="0.55"><path d="M0.6 1H29.6V28.6H0.6z" fill="#ececec" stroke="#dcdcdc" stroke-width="1"/><path d="M0.6 1H29.6V5.6H0.6z" fill="#dedede"/><path d="M4 9V27" stroke="#dcdcdc" stroke-width="0.9"/><path d="M9 9V27" stroke="#dcdcdc" stroke-width="0.9"/><path d="M14 9V27" stroke="#dcdcdc" stroke-width="0.9"/><path d="M19 9V27" stroke="#dcdcdc" stroke-width="0.9"/><path d="M1 9.6H22" stroke="#dcdcdc" stroke-width="0.9"/><path d="M1 14.6H22" stroke="#dcdcdc" stroke-width="0.9"/><path d="M1 19.6H22" stroke="#dcdcdc" stroke-width="0.9"/><path d="M1 24.6H22" stroke="#dcdcdc" stroke-width="0.9"/><circle cx="24" cy="7.8" r="7.6" fill="#b9d6f0"/><path d="M24 3L20.6 7.6H22.8Q22.8 10.6 21.8 12.4Q25.4 11.2 25.2 7.6H27.4z" fill="#fff"/><path d="M18 22.6H31.6M18 28.6H31.6" stroke="#d6d6d6" stroke-width="1.6"/><path d="M22 20V25" stroke="#c2d9ee" stroke-width="2"/><path d="M27.6 26V31.4" stroke="#d6d6d6" stroke-width="2"/></g></svg>
<svg class="abs" style="left:863.8px;top:82px" width="31" height="32" viewBox="0 0 31 32"><path d="M0.6 9.6L8.4 0.6H17.4V21.6L8.6 30.6H0.6z" fill="#e4e4e4" stroke="#5a5a5a" stroke-width="1" stroke-linejoin="round"/><path d="M8.6 9.6V30.6" stroke="#5a5a5a" stroke-width="0.9"/><path d="M9 9.6L18 0.8V21.8L9 30.6z" fill="#5cbf7a"/><path d="M21 9.4L30 0.4V21.6L21 30.4z" fill="#e2955f"/></svg>
<svg class="abs" style="left:923.8px;top:89.7px" width="29" height="17" viewBox="0 0 29 17"><path d="M0.4 10.4H28.2V16H0.4z" fill="#f7a400"/><path d="M1.5 10.6V12.6" stroke="#c77f00" stroke-width="0.8"/><path d="M4.1 10.6V13.6" stroke="#c77f00" stroke-width="0.8"/><path d="M6.7 10.6V12.6" stroke="#c77f00" stroke-width="0.8"/><path d="M9.3 10.6V13.6" stroke="#c77f00" stroke-width="0.8"/><path d="M11.9 10.6V12.6" stroke="#c77f00" stroke-width="0.8"/><path d="M14.5 10.6V13.6" stroke="#c77f00" stroke-width="0.8"/><path d="M17.1 10.6V12.6" stroke="#c77f00" stroke-width="0.8"/><path d="M19.7 10.6V13.6" stroke="#c77f00" stroke-width="0.8"/><path d="M22.3 10.6V12.6" stroke="#c77f00" stroke-width="0.8"/><path d="M24.9 10.6V13.6" stroke="#c77f00" stroke-width="0.8"/><path d="M27.5 10.6V12.6" stroke="#c77f00" stroke-width="0.8"/><path d="M0.6 0V8.6M28 0V8.6" stroke="#555" stroke-width="1"/><path d="M3 4.6H25.6" stroke="#555" stroke-width="1"/><path d="M1.4 4.6L5.2 2.4V6.8zM27.2 4.6L23.4 2.4V6.8z" fill="#555"/></svg>
<svg class="abs" style="left:979px;top:82px" width="33" height="33" viewBox="0 0 33 33"><path d="M4.6 10.6H22.4V29.6H4.6z" fill="#dadada"/><path d="M4.6 10.6L9.6 4.6H29.6L22.4 10.6z" fill="#f0f0f0"/><path d="M22.4 10.6L29.6 4.6V22.6L22.4 29.6z" fill="#b4b4b4"/><path d="M4.6 10.6L9.6 4.6H29.6V22.6L22.4 29.6H4.6z" fill="none" stroke="#5a5a5a" stroke-width="1" stroke-linejoin="round"/><path d="M0 3.6H8.6V0.2L18 6 8.6 11.8V8.4H0z" fill="#1e88e5"/><g fill="none" stroke="#222" stroke-width="2.2"><rect x="15.4" y="23.4" width="10" height="6" rx="3" transform="rotate(-32 20.4 26.4)"/><rect x="21.4" y="19.4" width="10" height="6" rx="3" transform="rotate(-32 26.4 22.4)"/></g></svg>
<svg class="abs" style="left:1022.8px;top:83px" width="30" height="30" viewBox="0 0 30 30"><rect x="0.3" y="0.3" width="28.8" height="28.6" fill="#8ccafb"/><path d="M0.3 18Q4 10.4 8.6 12.6Q12.6 15 15.6 20.6Q18 22.4 20.6 19.6Q24.6 16.6 29.1 22.6V28.9H0.3z" fill="#3f8bcd"/><circle cx="21" cy="8" r="3.3" fill="#fdf5c0"/><rect x="0.3" y="0.3" width="28.8" height="28.6" fill="none" stroke="#4a98dc" stroke-width="0.8"/></svg>
<div class="abs" style="left:1074.8px;top:78.8px;width:38.3px;height:38.3px;background:#0696d7;"></div>
<svg class="abs" style="left:1074.8px;top:78.8px" width="39" height="39" viewBox="0 0 39 39"><rect x="3.6" y="3.6" width="27" height="21" fill="none" stroke="#7fe07a" stroke-width="1" stroke-dasharray="3 1.6"/><path d="M24 18L24 33.6 27.6 30.2 30 35.6 32.4 34.4 30 29.2 35 29z" fill="#fff"/></svg>
<div class="abs" style="left:12px;top:144px;width:300px;height:25px;box-sizing:border-box;border:1px solid #c3c3c3;background:#f2f2f2"></div>
<svg class="abs" style="left:17px;top:152px" width="11" height="10" viewBox="0 0 11 10"><path d="M5 0.6v8.8L0.4 5zM10.4 0.6v8.8L5.8 5z" fill="#222"/></svg>
<span class="t" style="left:37.2px;top:150.2px;font-size:11px;line-height:15px;color:#555;transform:scaleX(0.741);">ブラウザ</span>
<svg class="abs" style="left:290px;top:151.5px" width="11" height="11" viewBox="0 0 11 11"><circle cx="5.5" cy="5.5" r="5.2" fill="#1e1e1e"/><rect x="2.6" y="4.7" width="5.8" height="1.6" fill="#f2f2f2"/></svg>
<div class="abs" style="left:16.3px;top:174px;width:6px;height:934px;background:#c6c6c6;border-radius:3px 3px 0 0"></div>
<div class="abs" style="left:16.3px;top:174px;width:6px;height:152px;background:#9b9b9b;border-radius:3px"></div>
<div class="abs" style="left:48px;top:174px;width:151.7px;height:19.6px;background:#f1f1f1;"></div>
<svg class="abs" style="left:29px;top:178px" width="12" height="12" viewBox="0 0 12 12"><defs><linearGradient id="te184" x1="0" x2="1" y1="1" y2="0"><stop offset="0" stop-color="#333"/><stop offset="1" stop-color="#bbb"/></linearGradient></defs><path d="M0.8 11.2L11.2 0.8v10.4z" fill="url(#te184)" stroke="#222" stroke-width="1" stroke-linejoin="round"/></svg>
<svg class="abs" style="left:51.2px;top:178px" width="16" height="12" viewBox="0 0 16 12"><path d="M0.5 6 Q8 -2.5 15.5 6 Q8 14.5 0.5 6Z" fill="#9a9a9a"/><circle cx="8" cy="6" r="3.4" fill="#f0f0f0"/><circle cx="8" cy="6" r="1.9" fill="#9a9a9a"/></svg>
<div class="abs" style="left:73.1px;top:176.2px;width:102px;height:15.6px;background:#8c8c8c;"></div>
<svg class="abs" style="left:75.5px;top:176px" width="17" height="16" viewBox="0 0 17 16"><path d="M1 4.5L5 0.8h11v10L12 15H1z" fill="#e6e8ee" stroke="#33363d" stroke-width="1" stroke-linejoin="round"/><path d="M1 4.5h11V15M12 4.5L16 0.8" fill="none" stroke="#9aa0ac" stroke-width="0.8"/></svg>
<span class="t" style="left:106.5px;top:176.6px;font-size:11px;line-height:15px;color:#fff;font-weight:bold;-webkit-text-stroke:0;transform:scaleX(0.966);">PHC-27 v13</span>
<svg class="abs" style="left:178.5px;top:177.5px" width="14" height="14" viewBox="0 0 14 14"><circle cx="7" cy="7" r="6" fill="#fff" stroke="#222" stroke-width="1.1"/><circle cx="7" cy="7" r="2.3" fill="#222"/></svg>
<div class="abs" style="left:66.1px;top:198px;width:117.8px;height:19.6px;background:#f1f1f1;"></div>
<svg class="abs" style="left:48.5px;top:201px" width="10" height="14" viewBox="0 0 10 14"><path d="M0.8 0.8L8.8 7 0.8 13.2z" fill="#eee" stroke="#222" stroke-width="1.2" stroke-linejoin="round"/></svg>
<svg class="abs" style="left:69px;top:201px" width="14" height="14" viewBox="0 0 14 14"><rect x="5.6" y="-0.2" width="2.8" height="3.4" rx="0.5" transform="rotate(0 7 7)" fill="#8a8a8a"/><rect x="5.6" y="-0.2" width="2.8" height="3.4" rx="0.5" transform="rotate(45 7 7)" fill="#8a8a8a"/><rect x="5.6" y="-0.2" width="2.8" height="3.4" rx="0.5" transform="rotate(90 7 7)" fill="#8a8a8a"/><rect x="5.6" y="-0.2" width="2.8" height="3.4" rx="0.5" transform="rotate(135 7 7)" fill="#8a8a8a"/><rect x="5.6" y="-0.2" width="2.8" height="3.4" rx="0.5" transform="rotate(180 7 7)" fill="#8a8a8a"/><rect x="5.6" y="-0.2" width="2.8" height="3.4" rx="0.5" transform="rotate(225 7 7)" fill="#8a8a8a"/><rect x="5.6" y="-0.2" width="2.8" height="3.4" rx="0.5" transform="rotate(270 7 7)" fill="#8a8a8a"/><rect x="5.6" y="-0.2" width="2.8" height="3.4" rx="0.5" transform="rotate(315 7 7)" fill="#8a8a8a"/><circle cx="7" cy="7" r="4.9" fill="#8a8a8a"/><circle cx="7" cy="7" r="2.1" fill="#f0f0f0"/></svg>
<span class="t" style="left:95.4px;top:202px;font-size:11px;line-height:15px;color:#333;transform:scaleX(0.776);">ドキュメントの設定</span>
<div class="abs" style="left:66.1px;top:222px;width:125.8px;height:19.6px;background:#f1f1f1;"></div>
<svg class="abs" style="left:48.5px;top:225px" width="10" height="14" viewBox="0 0 10 14"><path d="M0.8 0.8L8.8 7 0.8 13.2z" fill="#eee" stroke="#222" stroke-width="1.2" stroke-linejoin="round"/></svg>
<svg class="abs" style="left:69px;top:225px" width="16" height="14" viewBox="0 0 16 14"><path d="M0 1.2h6.2l1.2 1.6H0z" fill="#9a9a9a"/><path d="M0 3.6h16v9.8H0z" fill="#9a9a9a"/></svg>
<span class="t" style="left:99.8px;top:226px;font-size:11px;line-height:15px;color:#333;transform:scaleX(0.820);">名前の付いたビュー</span>
<div class="abs" style="left:66.1px;top:246px;width:90.8px;height:19.6px;background:#f1f1f1;"></div>
<svg class="abs" style="left:48.5px;top:249px" width="10" height="14" viewBox="0 0 10 14"><path d="M0.8 0.8L8.8 7 0.8 13.2z" fill="#eee" stroke="#222" stroke-width="1.2" stroke-linejoin="round"/></svg>
<svg class="abs" style="left:69px;top:249px" width="16" height="14" viewBox="0 0 16 14"><path d="M1 7 Q8 0 15 7 Q8 14 1 7Z" fill="none" stroke="#aaa" stroke-width="1"/><circle cx="8" cy="7" r="2.8" fill="none" stroke="#aaa" stroke-width="1"/><path d="M2.5 1.5L13.5 12.5" stroke="#aaa" stroke-width="1"/></svg>
<svg class="abs" style="left:94px;top:249px" width="16" height="14" viewBox="0 0 16 14"><path d="M0 1.2h6.2l1.2 1.6H0z" fill="#9a9a9a"/><path d="M0 3.6h16v9.8H0z" fill="#9a9a9a"/></svg>
<span class="t" style="left:124.3px;top:250px;font-size:11px;line-height:15px;color:#333;transform:scaleX(0.945);">原点</span>
<div class="abs" style="left:66.1px;top:270px;width:94.9px;height:19.6px;background:#f1f1f1;"></div>
<svg class="abs" style="left:46px;top:274px" width="12" height="12" viewBox="0 0 12 12"><defs><linearGradient id="te280" x1="0" x2="1" y1="1" y2="0"><stop offset="0" stop-color="#333"/><stop offset="1" stop-color="#bbb"/></linearGradient></defs><path d="M0.8 11.2L11.2 0.8v10.4z" fill="url(#te280)" stroke="#222" stroke-width="1" stroke-linejoin="round"/></svg>
<svg class="abs" style="left:69px;top:274px" width="16" height="12" viewBox="0 0 16 12"><path d="M0.5 6 Q8 -2.5 15.5 6 Q8 14.5 0.5 6Z" fill="#9a9a9a"/><circle cx="8" cy="6" r="3.4" fill="#f0f0f0"/><circle cx="8" cy="6" r="1.9" fill="#9a9a9a"/></svg>
<svg class="abs" style="left:94px;top:273px" width="16" height="14" viewBox="0 0 16 14"><path d="M0 1.2h6.2l1.2 1.6H0z" fill="#9a9a9a"/><path d="M0 3.6h16v9.8H0z" fill="#9a9a9a"/></svg>
<span class="t" style="left:124.3px;top:274px;font-size:11px;line-height:15px;color:#333;transform:scaleX(0.751);">ボディ</span>
<div class="abs" style="left:84px;top:294px;width:179px;height:19.6px;background:#f1f1f1;"></div>
<svg class="abs" style="left:87px;top:298px" width="16" height="12" viewBox="0 0 16 12"><path d="M0.5 6 Q8 -2.5 15.5 6 Q8 14.5 0.5 6Z" fill="#9a9a9a"/><circle cx="8" cy="6" r="3.4" fill="#f0f0f0"/><circle cx="8" cy="6" r="1.9" fill="#9a9a9a"/></svg>
<svg class="abs" style="left:112px;top:296px" width="15" height="16" viewBox="0 0 15 16"><defs><linearGradient id="bg304" x1="0" x2="1"><stop offset="0" stop-color="#fafafa"/><stop offset="0.5" stop-color="#e4e6ea"/><stop offset="1" stop-color="#c2c5cc"/></linearGradient></defs><path d="M1 3.5Q1 1 3.5 1h8Q14 1 14 3.5v9Q14 15 11.5 15h-8Q1 15 1 12.5z" fill="url(#bg304)" stroke="#4a4e58" stroke-width="1"/><path d="M1.5 4.2Q7.5 6.2 13.5 4.2" fill="none" stroke="#4a4e58" stroke-width="0.8"/></svg>
<span class="t" style="left:142px;top:298px;font-size:11px;line-height:15px;color:#333;transform:scaleX(0.703);">カートリッジスロット・カバー</span>
<div class="abs" style="left:84px;top:318px;width:139px;height:19.6px;background:#f1f1f1;"></div>
<svg class="abs" style="left:87px;top:322px" width="16" height="12" viewBox="0 0 16 12"><path d="M0.5 6 Q8 -2.5 15.5 6 Q8 14.5 0.5 6Z" fill="#9a9a9a"/><circle cx="8" cy="6" r="3.4" fill="#f0f0f0"/><circle cx="8" cy="6" r="1.9" fill="#9a9a9a"/></svg>
<svg class="abs" style="left:112px;top:320px" width="15" height="16" viewBox="0 0 15 16"><defs><linearGradient id="bg328" x1="0" x2="1"><stop offset="0" stop-color="#fafafa"/><stop offset="0.5" stop-color="#e4e6ea"/><stop offset="1" stop-color="#c2c5cc"/></linearGradient></defs><path d="M1 3.5Q1 1 3.5 1h8Q14 1 14 3.5v9Q14 15 11.5 15h-8Q1 15 1 12.5z" fill="url(#bg328)" stroke="#4a4e58" stroke-width="1"/><path d="M1.5 4.2Q7.5 6.2 13.5 4.2" fill="none" stroke="#4a4e58" stroke-width="0.8"/></svg>
<span class="t" style="left:142px;top:322px;font-size:11px;line-height:15px;color:#333;"><span class="c" style="width:53.80px"><span class="k" style="transform:scaleX(0.825)">ボディ・底面</span></span><span class="a"> (1)</span></span>
<div class="abs" style="left:84px;top:342px;width:123px;height:19.6px;background:#f1f1f1;"></div>
<svg class="abs" style="left:87px;top:346px" width="16" height="12" viewBox="0 0 16 12"><path d="M0.5 6 Q8 -2.5 15.5 6 Q8 14.5 0.5 6Z" fill="#9a9a9a"/><circle cx="8" cy="6" r="3.4" fill="#f0f0f0"/><circle cx="8" cy="6" r="1.9" fill="#9a9a9a"/></svg>
<svg class="abs" style="left:112px;top:344px" width="15" height="16" viewBox="0 0 15 16"><defs><linearGradient id="bg352" x1="0" x2="1"><stop offset="0" stop-color="#fafafa"/><stop offset="0.5" stop-color="#e4e6ea"/><stop offset="1" stop-color="#c2c5cc"/></linearGradient></defs><path d="M1 3.5Q1 1 3.5 1h8Q14 1 14 3.5v9Q14 15 11.5 15h-8Q1 15 1 12.5z" fill="url(#bg352)" stroke="#4a4e58" stroke-width="1"/><path d="M1.5 4.2Q7.5 6.2 13.5 4.2" fill="none" stroke="#4a4e58" stroke-width="0.8"/></svg>
<span class="t" style="left:142px;top:346px;font-size:11px;line-height:15px;color:#333;"><span class="c" style="width:39.70px"><span class="k" style="transform:scaleX(0.722)">キーボード</span></span><span class="a"> (1)</span></span>
<div class="abs" style="left:84px;top:366px;width:187px;height:19.6px;background:#f1f1f1;"></div>
<svg class="abs" style="left:87px;top:370px" width="16" height="12" viewBox="0 0 16 12"><path d="M0.5 6 Q8 -2.5 15.5 6 Q8 14.5 0.5 6Z" fill="#9a9a9a"/><circle cx="8" cy="6" r="3.4" fill="#f0f0f0"/><circle cx="8" cy="6" r="1.9" fill="#9a9a9a"/></svg>
<svg class="abs" style="left:112px;top:368px" width="15" height="16" viewBox="0 0 15 16"><defs><linearGradient id="bg376" x1="0" x2="1"><stop offset="0" stop-color="#fafafa"/><stop offset="0.5" stop-color="#e4e6ea"/><stop offset="1" stop-color="#c2c5cc"/></linearGradient></defs><path d="M1 3.5Q1 1 3.5 1h8Q14 1 14 3.5v9Q14 15 11.5 15h-8Q1 15 1 12.5z" fill="url(#bg376)" stroke="#4a4e58" stroke-width="1"/><path d="M1.5 4.2Q7.5 6.2 13.5 4.2" fill="none" stroke="#4a4e58" stroke-width="0.8"/></svg>
<span class="t" style="left:142px;top:370px;font-size:11px;line-height:15px;color:#333;"><span class="c" style="width:87.00px"><span class="k" style="transform:scaleX(0.725)">ジョイスティックポート</span></span><span class="a"> (1) (1)</span></span>
<div class="abs" style="left:84px;top:390px;width:87px;height:19.6px;background:#f1f1f1;"></div>
<svg class="abs" style="left:87px;top:394px" width="16" height="12" viewBox="0 0 16 12"><path d="M0.5 6 Q8 -2.5 15.5 6 Q8 14.5 0.5 6Z" fill="#9a9a9a"/><circle cx="8" cy="6" r="3.4" fill="#f0f0f0"/><circle cx="8" cy="6" r="1.9" fill="#9a9a9a"/></svg>
<svg class="abs" style="left:112px;top:392px" width="15" height="16" viewBox="0 0 15 16"><defs><linearGradient id="bg400" x1="0" x2="1"><stop offset="0" stop-color="#fafafa"/><stop offset="0.5" stop-color="#e4e6ea"/><stop offset="1" stop-color="#c2c5cc"/></linearGradient></defs><path d="M1 3.5Q1 1 3.5 1h8Q14 1 14 3.5v9Q14 15 11.5 15h-8Q1 15 1 12.5z" fill="url(#bg400)" stroke="#4a4e58" stroke-width="1"/><path d="M1.5 4.2Q7.5 6.2 13.5 4.2" fill="none" stroke="#4a4e58" stroke-width="0.8"/></svg>
<span class="t" style="left:142px;top:392.6px;font-size:11px;line-height:15px;color:#333;transform:scaleX(0.888);">LED</span>
<div class="abs" style="left:84px;top:414px;width:183px;height:19.6px;background:#f1f1f1;"></div>
<svg class="abs" style="left:87px;top:418px" width="16" height="12" viewBox="0 0 16 12"><path d="M0.5 6 Q8 -2.5 15.5 6 Q8 14.5 0.5 6Z" fill="#9a9a9a"/><circle cx="8" cy="6" r="3.4" fill="#f0f0f0"/><circle cx="8" cy="6" r="1.9" fill="#9a9a9a"/></svg>
<svg class="abs" style="left:112px;top:416px" width="15" height="16" viewBox="0 0 15 16"><defs><linearGradient id="bg424" x1="0" x2="1"><stop offset="0" stop-color="#fafafa"/><stop offset="0.5" stop-color="#e4e6ea"/><stop offset="1" stop-color="#c2c5cc"/></linearGradient></defs><path d="M1 3.5Q1 1 3.5 1h8Q14 1 14 3.5v9Q14 15 11.5 15h-8Q1 15 1 12.5z" fill="url(#bg424)" stroke="#4a4e58" stroke-width="1"/><path d="M1.5 4.2Q7.5 6.2 13.5 4.2" fill="none" stroke="#4a4e58" stroke-width="0.8"/></svg>
<span class="t" style="left:142px;top:418px;font-size:11px;line-height:15px;color:#333;transform:scaleX(0.700);">カートリッジスロット・フレーム</span>
<div class="abs" style="left:84px;top:438px;width:139px;height:19.6px;background:#f1f1f1;"></div>
<svg class="abs" style="left:87px;top:442px" width="16" height="12" viewBox="0 0 16 12"><path d="M0.5 6 Q8 -2.5 15.5 6 Q8 14.5 0.5 6Z" fill="#9a9a9a"/><circle cx="8" cy="6" r="3.4" fill="#f0f0f0"/><circle cx="8" cy="6" r="1.9" fill="#9a9a9a"/></svg>
<svg class="abs" style="left:112px;top:440px" width="15" height="16" viewBox="0 0 15 16"><defs><linearGradient id="bg448" x1="0" x2="1"><stop offset="0" stop-color="#fafafa"/><stop offset="0.5" stop-color="#e4e6ea"/><stop offset="1" stop-color="#c2c5cc"/></linearGradient></defs><path d="M1 3.5Q1 1 3.5 1h8Q14 1 14 3.5v9Q14 15 11.5 15h-8Q1 15 1 12.5z" fill="url(#bg448)" stroke="#4a4e58" stroke-width="1"/><path d="M1.5 4.2Q7.5 6.2 13.5 4.2" fill="none" stroke="#4a4e58" stroke-width="0.8"/></svg>
<span class="t" style="left:142px;top:442px;font-size:11px;line-height:15px;color:#333;"><span class="c" style="width:53.80px"><span class="k" style="transform:scaleX(0.815)">電源スイッチ</span></span><span class="a"> (1)</span></span>
<div class="abs" style="left:84px;top:462px;width:147px;height:19.6px;background:#f1f1f1;"></div>
<svg class="abs" style="left:87px;top:466px" width="16" height="12" viewBox="0 0 16 12"><path d="M0.5 6 Q8 -2.5 15.5 6 Q8 14.5 0.5 6Z" fill="#9a9a9a"/><circle cx="8" cy="6" r="3.4" fill="#f0f0f0"/><circle cx="8" cy="6" r="1.9" fill="#9a9a9a"/></svg>
<svg class="abs" style="left:112px;top:464px" width="15" height="16" viewBox="0 0 15 16"><defs><linearGradient id="bg472" x1="0" x2="1"><stop offset="0" stop-color="#fafafa"/><stop offset="0.5" stop-color="#e4e6ea"/><stop offset="1" stop-color="#c2c5cc"/></linearGradient></defs><path d="M1 3.5Q1 1 3.5 1h8Q14 1 14 3.5v9Q14 15 11.5 15h-8Q1 15 1 12.5z" fill="url(#bg472)" stroke="#4a4e58" stroke-width="1"/><path d="M1.5 4.2Q7.5 6.2 13.5 4.2" fill="none" stroke="#4a4e58" stroke-width="0.8"/></svg>
<span class="t" style="left:142px;top:466px;font-size:11px;line-height:15px;color:#333;"><span class="c" style="width:64.50px"><span class="k" style="transform:scaleX(0.838)">電源スイッチ枠</span></span><span class="a"> (1)</span></span>
<div class="abs" style="left:84px;top:486px;width:119px;height:19.6px;background:#f1f1f1;"></div>
<svg class="abs" style="left:87px;top:490px" width="16" height="12" viewBox="0 0 16 12"><path d="M0.5 6 Q8 -2.5 15.5 6 Q8 14.5 0.5 6Z" fill="#9a9a9a"/><circle cx="8" cy="6" r="3.4" fill="#f0f0f0"/><circle cx="8" cy="6" r="1.9" fill="#9a9a9a"/></svg>
<svg class="abs" style="left:112px;top:488px" width="15" height="16" viewBox="0 0 15 16"><defs><linearGradient id="bg496" x1="0" x2="1"><stop offset="0" stop-color="#fafafa"/><stop offset="0.5" stop-color="#e4e6ea"/><stop offset="1" stop-color="#c2c5cc"/></linearGradient></defs><path d="M1 3.5Q1 1 3.5 1h8Q14 1 14 3.5v9Q14 15 11.5 15h-8Q1 15 1 12.5z" fill="url(#bg496)" stroke="#4a4e58" stroke-width="1"/><path d="M1.5 4.2Q7.5 6.2 13.5 4.2" fill="none" stroke="#4a4e58" stroke-width="0.8"/></svg>
<span class="t" style="left:142px;top:490px;font-size:11px;line-height:15px;color:#333;"><span class="c" style="width:24.52px"><span class="k" style="transform:scaleX(0.761)">ボディ</span></span><span class="a">1533</span></span>
<div class="abs" style="left:84px;top:510px;width:171px;height:19.6px;background:#f1f1f1;"></div>
<svg class="abs" style="left:87px;top:514px" width="16" height="12" viewBox="0 0 16 12"><path d="M0.5 6 Q8 -2.5 15.5 6 Q8 14.5 0.5 6Z" fill="#9a9a9a"/><circle cx="8" cy="6" r="3.4" fill="#f0f0f0"/><circle cx="8" cy="6" r="1.9" fill="#9a9a9a"/></svg>
<svg class="abs" style="left:112px;top:512px" width="15" height="16" viewBox="0 0 15 16"><defs><linearGradient id="bg520" x1="0" x2="1"><stop offset="0" stop-color="#fafafa"/><stop offset="0.5" stop-color="#e4e6ea"/><stop offset="1" stop-color="#c2c5cc"/></linearGradient></defs><path d="M1 3.5Q1 1 3.5 1h8Q14 1 14 3.5v9Q14 15 11.5 15h-8Q1 15 1 12.5z" fill="url(#bg520)" stroke="#4a4e58" stroke-width="1"/><path d="M1.5 4.2Q7.5 6.2 13.5 4.2" fill="none" stroke="#4a4e58" stroke-width="0.8"/></svg>
<span class="t" style="left:142px;top:514px;font-size:11px;line-height:15px;color:#333;"><span class="c" style="width:54.70px"><span class="k" style="transform:scaleX(0.839)">ボディ・上面</span></span><span class="a"> (1) (3) (1)</span></span>
<div class="abs" style="left:84px;top:534px;width:187px;height:19.6px;background:#f1f1f1;"></div>
<svg class="abs" style="left:87px;top:538px" width="16" height="12" viewBox="0 0 16 12"><path d="M0.5 6 Q8 -2.5 15.5 6 Q8 14.5 0.5 6Z" fill="#9a9a9a"/><circle cx="8" cy="6" r="3.4" fill="#f0f0f0"/><circle cx="8" cy="6" r="1.9" fill="#9a9a9a"/></svg>
<svg class="abs" style="left:112px;top:536px" width="15" height="16" viewBox="0 0 15 16"><defs><linearGradient id="bg544" x1="0" x2="1"><stop offset="0" stop-color="#fafafa"/><stop offset="0.5" stop-color="#e4e6ea"/><stop offset="1" stop-color="#c2c5cc"/></linearGradient></defs><path d="M1 3.5Q1 1 3.5 1h8Q14 1 14 3.5v9Q14 15 11.5 15h-8Q1 15 1 12.5z" fill="url(#bg544)" stroke="#4a4e58" stroke-width="1"/><path d="M1.5 4.2Q7.5 6.2 13.5 4.2" fill="none" stroke="#4a4e58" stroke-width="0.8"/></svg>
<span class="t" style="left:142px;top:538px;font-size:11px;line-height:15px;color:#333;"><span class="c" style="width:55.30px"><span class="k" style="transform:scaleX(0.848)">ボディ・上面</span></span><span class="a"> (1) (3) (1) (1)</span></span>
<div class="abs" style="left:66.1px;top:558px;width:110.9px;height:19.6px;background:#f1f1f1;"></div>
<svg class="abs" style="left:48.5px;top:561px" width="10" height="14" viewBox="0 0 10 14"><path d="M0.8 0.8L8.8 7 0.8 13.2z" fill="#eee" stroke="#222" stroke-width="1.2" stroke-linejoin="round"/></svg>
<svg class="abs" style="left:69px;top:562px" width="16" height="12" viewBox="0 0 16 12"><path d="M0.5 6 Q8 -2.5 15.5 6 Q8 14.5 0.5 6Z" fill="#9a9a9a"/><circle cx="8" cy="6" r="3.4" fill="#f0f0f0"/><circle cx="8" cy="6" r="1.9" fill="#9a9a9a"/></svg>
<svg class="abs" style="left:94px;top:561px" width="16" height="14" viewBox="0 0 16 14"><path d="M0 1.2h6.2l1.2 1.6H0z" fill="#9a9a9a"/><path d="M0 3.6h16v9.8H0z" fill="#9a9a9a"/></svg>
<span class="t" style="left:124.3px;top:562px;font-size:11px;line-height:15px;color:#333;transform:scaleX(0.745);">キャンパス</span>
<div class="abs" style="left:66.1px;top:582px;width:138.9px;height:19.6px;background:#f1f1f1;"></div>
<svg class="abs" style="left:48.5px;top:585px" width="10" height="14" viewBox="0 0 10 14"><path d="M0.8 0.8L8.8 7 0.8 13.2z" fill="#eee" stroke="#222" stroke-width="1.2" stroke-linejoin="round"/></svg>
<svg class="abs" style="left:69px;top:586px" width="16" height="12" viewBox="0 0 16 12"><path d="M0.5 6 Q8 -2.5 15.5 6 Q8 14.5 0.5 6Z" fill="#9a9a9a"/><circle cx="8" cy="6" r="3.4" fill="#f0f0f0"/><circle cx="8" cy="6" r="1.9" fill="#9a9a9a"/></svg>
<svg class="abs" style="left:94px;top:585px" width="16" height="14" viewBox="0 0 16 14"><path d="M0 1.2h6.2l1.2 1.6H0z" fill="#9a9a9a"/><path d="M0 3.6h16v9.8H0z" fill="#9a9a9a"/></svg>
<span class="t" style="left:124.3px;top:586px;font-size:11px;line-height:15px;color:#333;transform:scaleX(0.729);">コンストラクション</span>
<div class="abs" style="left:66.1px;top:606px;width:105.7px;height:19.6px;background:#f1f1f1;"></div>
<svg class="abs" style="left:68.5px;top:608px" width="17" height="16" viewBox="0 0 17 16"><path d="M1 12.5h9.5l2-2v2.6l-2 2H1z" fill="#c9c9c9"/><path d="M1 3l2.2-2.2h9.3v9.7l-2 2H1z" fill="#6aaee6"/><path d="M10.5 3l2-2.2v9.7l-2 2z" fill="#3f8ccd"/><path d="M1 3l2.2-2.2h9.3L10.5 3z" fill="#8cc8f8"/><path d="M14.8 13.5V1.8M13.3 3.6l1.5-2.6 1.5 2.6z" stroke="#222" stroke-width="0.9" fill="#222"/></svg>
<span class="t" style="left:99.6px;top:610px;font-size:11px;line-height:15px;color:#333;"><span class="c" style="width:37.32px"><span class="k" style="transform:scaleX(0.848)">押し出し</span></span><span class="a">3009</span></span>
<div class="abs" style="left:66.1px;top:630px;width:89.9px;height:19.6px;background:#f1f1f1;"></div>
<svg class="abs" style="left:68.5px;top:632px" width="17" height="16" viewBox="0 0 17 16"><path d="M1 14.5V8.5Q1 3.5 6 2.5l3.5-1.2 4 9-3 4.2z" fill="#dcdcdc" stroke="#555" stroke-width="1" stroke-linejoin="round"/><path d="M6.2 3.2l4-1.8 3.6 8.8-3.4 3.8z" fill="#4f9de0"/><path d="M11.8 1.2l2.8 7M11.4 2.9l0.3-2.2 1.8 1.4z" stroke="#222" stroke-width="0.9" fill="#222"/></svg>
<span class="t" style="left:99.6px;top:634px;font-size:11px;line-height:15px;color:#333;"><span class="c" style="width:21.12px"><span class="k" style="transform:scaleX(0.960)">勾配</span></span><span class="a">3020</span></span>
<div class="abs" style="left:66.1px;top:654px;width:85.9px;height:19.6px;background:#f1f1f1;"></div>
<svg class="abs" style="left:68.5px;top:656px" width="17" height="16" viewBox="0 0 17 16"><path d="M1 14.5V8.5Q1 3.5 6 2.5l3.5-1.2 4 9-3 4.2z" fill="#dcdcdc" stroke="#555" stroke-width="1" stroke-linejoin="round"/><path d="M6.2 3.2l4-1.8 3.6 8.8-3.4 3.8z" fill="#4f9de0"/><path d="M11.8 1.2l2.8 7M11.4 2.9l0.3-2.2 1.8 1.4z" stroke="#222" stroke-width="0.9" fill="#222"/></svg>
<span class="t" style="left:99.6px;top:658px;font-size:11px;line-height:15px;color:#333;"><span class="c" style="width:20.12px"><span class="k" style="transform:scaleX(0.914)">勾配</span></span><span class="a">3021</span></span>
<div class="abs" style="left:66.1px;top:678px;width:105.7px;height:19.6px;background:#f1f1f1;"></div>
<svg class="abs" style="left:68.5px;top:680px" width="17" height="16" viewBox="0 0 17 16"><path d="M1 12.5h9.5l2-2v2.6l-2 2H1z" fill="#c9c9c9"/><path d="M1 3l2.2-2.2h9.3v9.7l-2 2H1z" fill="#6aaee6"/><path d="M10.5 3l2-2.2v9.7l-2 2z" fill="#3f8ccd"/><path d="M1 3l2.2-2.2h9.3L10.5 3z" fill="#8cc8f8"/><path d="M14.8 13.5V1.8M13.3 3.6l1.5-2.6 1.5 2.6z" stroke="#222" stroke-width="0.9" fill="#222"/></svg>
<span class="t" style="left:99.6px;top:682px;font-size:11px;line-height:15px;color:#333;"><span class="c" style="width:37.32px"><span class="k" style="transform:scaleX(0.848)">押し出し</span></span><span class="a">3028</span></span>
<div class="abs" style="left:66.1px;top:702px;width:89.9px;height:19.6px;background:#f1f1f1;"></div>
<svg class="abs" style="left:68.5px;top:704px" width="17" height="16" viewBox="0 0 17 16"><path d="M1 14.5V8.5Q1 3.5 6 2.5l3.5-1.2 4 9-3 4.2z" fill="#dcdcdc" stroke="#555" stroke-width="1" stroke-linejoin="round"/><path d="M6.2 3.2l4-1.8 3.6 8.8-3.4 3.8z" fill="#4f9de0"/><path d="M11.8 1.2l2.8 7M11.4 2.9l0.3-2.2 1.8 1.4z" stroke="#222" stroke-width="0.9" fill="#222"/></svg>
<span class="t" style="left:99.6px;top:706px;font-size:11px;line-height:15px;color:#333;"><span class="c" style="width:21.12px"><span class="k" style="transform:scaleX(0.960)">勾配</span></span><span class="a">3032</span></span>
<div class="abs" style="left:66.1px;top:726px;width:105.7px;height:19.6px;background:#f1f1f1;"></div>
<svg class="abs" style="left:68.5px;top:728px" width="17" height="16" viewBox="0 0 17 16"><path d="M1 12.5h9.5l2-2v2.6l-2 2H1z" fill="#c9c9c9"/><path d="M1 3l2.2-2.2h9.3v9.7l-2 2H1z" fill="#6aaee6"/><path d="M10.5 3l2-2.2v9.7l-2 2z" fill="#3f8ccd"/><path d="M1 3l2.2-2.2h9.3L10.5 3z" fill="#8cc8f8"/><path d="M14.8 13.5V1.8M13.3 3.6l1.5-2.6 1.5 2.6z" stroke="#222" stroke-width="0.9" fill="#222"/></svg>
<span class="t" style="left:99.6px;top:730px;font-size:11px;line-height:15px;color:#333;"><span class="c" style="width:37.32px"><span class="k" style="transform:scaleX(0.848)">押し出し</span></span><span class="a">3033</span></span>
<div class="abs" style="left:66.1px;top:750px;width:105.7px;height:19.6px;background:#f1f1f1;"></div>
<svg class="abs" style="left:68.5px;top:752px" width="17" height="16" viewBox="0 0 17 16"><path d="M1 12.5h9.5l2-2v2.6l-2 2H1z" fill="#c9c9c9"/><path d="M1 3l2.2-2.2h9.3v9.7l-2 2H1z" fill="#6aaee6"/><path d="M10.5 3l2-2.2v9.7l-2 2z" fill="#3f8ccd"/><path d="M1 3l2.2-2.2h9.3L10.5 3z" fill="#8cc8f8"/><path d="M14.8 13.5V1.8M13.3 3.6l1.5-2.6 1.5 2.6z" stroke="#222" stroke-width="0.9" fill="#222"/></svg>
<span class="t" style="left:99.6px;top:754px;font-size:11px;line-height:15px;color:#333;"><span class="c" style="width:37.32px"><span class="k" style="transform:scaleX(0.848)">押し出し</span></span><span class="a">3034</span></span>
<div class="abs" style="left:66.1px;top:774px;width:105.7px;height:19.6px;background:#f1f1f1;"></div>
<svg class="abs" style="left:68.5px;top:776px" width="17" height="16" viewBox="0 0 17 16"><path d="M1 12.5h9.5l2-2v2.6l-2 2H1z" fill="#c9c9c9"/><path d="M1 3l2.2-2.2h9.3v9.7l-2 2H1z" fill="#6aaee6"/><path d="M10.5 3l2-2.2v9.7l-2 2z" fill="#3f8ccd"/><path d="M1 3l2.2-2.2h9.3L10.5 3z" fill="#8cc8f8"/><path d="M14.8 13.5V1.8M13.3 3.6l1.5-2.6 1.5 2.6z" stroke="#222" stroke-width="0.9" fill="#222"/></svg>
<span class="t" style="left:99.6px;top:778px;font-size:11px;line-height:15px;color:#333;"><span class="c" style="width:37.32px"><span class="k" style="transform:scaleX(0.848)">押し出し</span></span><span class="a">3035</span></span>
<div class="abs" style="left:66.1px;top:798px;width:105.7px;height:19.6px;background:#f1f1f1;"></div>
<svg class="abs" style="left:68.5px;top:800px" width="17" height="16" viewBox="0 0 17 16"><path d="M1 12.5h9.5l2-2v2.6l-2 2H1z" fill="#c9c9c9"/><path d="M1 3l2.2-2.2h9.3v9.7l-2 2H1z" fill="#6aaee6"/><path d="M10.5 3l2-2.2v9.7l-2 2z" fill="#3f8ccd"/><path d="M1 3l2.2-2.2h9.3L10.5 3z" fill="#8cc8f8"/><path d="M14.8 13.5V1.8M13.3 3.6l1.5-2.6 1.5 2.6z" stroke="#222" stroke-width="0.9" fill="#222"/></svg>
<span class="t" style="left:99.6px;top:802px;font-size:11px;line-height:15px;color:#333;"><span class="c" style="width:37.32px"><span class="k" style="transform:scaleX(0.848)">押し出し</span></span><span class="a">3036</span></span>
<div class="abs" style="left:66.1px;top:822px;width:105.7px;height:19.6px;background:#f1f1f1;"></div>
<svg class="abs" style="left:68.5px;top:824px" width="17" height="16" viewBox="0 0 17 16"><path d="M1 12.5h9.5l2-2v2.6l-2 2H1z" fill="#c9c9c9"/><path d="M1 3l2.2-2.2h9.3v9.7l-2 2H1z" fill="#6aaee6"/><path d="M10.5 3l2-2.2v9.7l-2 2z" fill="#3f8ccd"/><path d="M1 3l2.2-2.2h9.3L10.5 3z" fill="#8cc8f8"/><path d="M14.8 13.5V1.8M13.3 3.6l1.5-2.6 1.5 2.6z" stroke="#222" stroke-width="0.9" fill="#222"/></svg>
<span class="t" style="left:99.6px;top:826px;font-size:11px;line-height:15px;color:#333;"><span class="c" style="width:37.32px"><span class="k" style="transform:scaleX(0.848)">押し出し</span></span><span class="a">3037</span></span>
<div class="abs" style="left:66.1px;top:846px;width:105.7px;height:19.6px;background:#f1f1f1;"></div>
<svg class="abs" style="left:68.5px;top:848px" width="17" height="16" viewBox="0 0 17 16"><path d="M1 12.5h9.5l2-2v2.6l-2 2H1z" fill="#c9c9c9"/><path d="M1 3l2.2-2.2h9.3v9.7l-2 2H1z" fill="#6aaee6"/><path d="M10.5 3l2-2.2v9.7l-2 2z" fill="#3f8ccd"/><path d="M1 3l2.2-2.2h9.3L10.5 3z" fill="#8cc8f8"/><path d="M14.8 13.5V1.8M13.3 3.6l1.5-2.6 1.5 2.6z" stroke="#222" stroke-width="0.9" fill="#222"/></svg>
<span class="t" style="left:99.6px;top:850px;font-size:11px;line-height:15px;color:#333;"><span class="c" style="width:37.32px"><span class="k" style="transform:scaleX(0.848)">押し出し</span></span><span class="a">3038</span></span>
<div class="abs" style="left:66.1px;top:870px;width:85.9px;height:19.6px;background:#f1f1f1;"></div>
<svg class="abs" style="left:68.5px;top:872px" width="17" height="16" viewBox="0 0 17 16"><path d="M1 14.5V8.5Q1 3.5 6 2.5l3.5-1.2 4 9-3 4.2z" fill="#dcdcdc" stroke="#555" stroke-width="1" stroke-linejoin="round"/><path d="M6.2 3.2l4-1.8 3.6 8.8-3.4 3.8z" fill="#4f9de0"/><path d="M11.8 1.2l2.8 7M11.4 2.9l0.3-2.2 1.8 1.4z" stroke="#222" stroke-width="0.9" fill="#222"/></svg>
<span class="t" style="left:99.6px;top:874px;font-size:11px;line-height:15px;color:#333;"><span class="c" style="width:20.12px"><span class="k" style="transform:scaleX(0.914)">勾配</span></span><span class="a">3091</span></span>
<div class="abs" style="left:66.1px;top:894px;width:89.9px;height:19.6px;background:#f1f1f1;"></div>
<svg class="abs" style="left:68.5px;top:896px" width="17" height="16" viewBox="0 0 17 16"><path d="M1 14.5V8.5Q1 3.5 6 2.5l3.5-1.2 4 9-3 4.2z" fill="#dcdcdc" stroke="#555" stroke-width="1" stroke-linejoin="round"/><path d="M6.2 3.2l4-1.8 3.6 8.8-3.4 3.8z" fill="#4f9de0"/><path d="M11.8 1.2l2.8 7M11.4 2.9l0.3-2.2 1.8 1.4z" stroke="#222" stroke-width="0.9" fill="#222"/></svg>
<span class="t" style="left:99.6px;top:898px;font-size:11px;line-height:15px;color:#333;"><span class="c" style="width:21.12px"><span class="k" style="transform:scaleX(0.960)">勾配</span></span><span class="a">3095</span></span>
<div class="abs" style="left:66.1px;top:918px;width:105.7px;height:19.6px;background:#f1f1f1;"></div>
<svg class="abs" style="left:68.5px;top:920px" width="17" height="16" viewBox="0 0 17 16"><path d="M1 12.5h9.5l2-2v2.6l-2 2H1z" fill="#c9c9c9"/><path d="M1 3l2.2-2.2h9.3v9.7l-2 2H1z" fill="#6aaee6"/><path d="M10.5 3l2-2.2v9.7l-2 2z" fill="#3f8ccd"/><path d="M1 3l2.2-2.2h9.3L10.5 3z" fill="#8cc8f8"/><path d="M14.8 13.5V1.8M13.3 3.6l1.5-2.6 1.5 2.6z" stroke="#222" stroke-width="0.9" fill="#222"/></svg>
<span class="t" style="left:99.6px;top:922px;font-size:11px;line-height:15px;color:#333;"><span class="c" style="width:37.32px"><span class="k" style="transform:scaleX(0.848)">押し出し</span></span><span class="a">3096</span></span>
<div class="abs" style="left:66.1px;top:942px;width:105.7px;height:19.6px;background:#f1f1f1;"></div>
<svg class="abs" style="left:68.5px;top:944px" width="17" height="16" viewBox="0 0 17 16"><path d="M1 12.5h9.5l2-2v2.6l-2 2H1z" fill="#c9c9c9"/><path d="M1 3l2.2-2.2h9.3v9.7l-2 2H1z" fill="#6aaee6"/><path d="M10.5 3l2-2.2v9.7l-2 2z" fill="#3f8ccd"/><path d="M1 3l2.2-2.2h9.3L10.5 3z" fill="#8cc8f8"/><path d="M14.8 13.5V1.8M13.3 3.6l1.5-2.6 1.5 2.6z" stroke="#222" stroke-width="0.9" fill="#222"/></svg>
<span class="t" style="left:99.6px;top:946px;font-size:11px;line-height:15px;color:#333;"><span class="c" style="width:37.32px"><span class="k" style="transform:scaleX(0.848)">押し出し</span></span><span class="a">3097</span></span>
<div class="abs" style="left:66.1px;top:966px;width:105.7px;height:19.6px;background:#f1f1f1;"></div>
<svg class="abs" style="left:68.5px;top:968px" width="17" height="16" viewBox="0 0 17 16"><path d="M1 12.5h9.5l2-2v2.6l-2 2H1z" fill="#c9c9c9"/><path d="M1 3l2.2-2.2h9.3v9.7l-2 2H1z" fill="#6aaee6"/><path d="M10.5 3l2-2.2v9.7l-2 2z" fill="#3f8ccd"/><path d="M1 3l2.2-2.2h9.3L10.5 3z" fill="#8cc8f8"/><path d="M14.8 13.5V1.8M13.3 3.6l1.5-2.6 1.5 2.6z" stroke="#222" stroke-width="0.9" fill="#222"/></svg>
<span class="t" style="left:99.6px;top:970px;font-size:11px;line-height:15px;color:#333;"><span class="c" style="width:37.32px"><span class="k" style="transform:scaleX(0.848)">押し出し</span></span><span class="a">3098</span></span>
<div class="abs" style="left:66.1px;top:990px;width:89.9px;height:19.6px;background:#f1f1f1;"></div>
<svg class="abs" style="left:68.5px;top:992px" width="17" height="16" viewBox="0 0 17 16"><path d="M1 14.5V8.5Q1 3.5 6 2.5l3.5-1.2 4 9-3 4.2z" fill="#dcdcdc" stroke="#555" stroke-width="1" stroke-linejoin="round"/><path d="M6.2 3.2l4-1.8 3.6 8.8-3.4 3.8z" fill="#4f9de0"/><path d="M11.8 1.2l2.8 7M11.4 2.9l0.3-2.2 1.8 1.4z" stroke="#222" stroke-width="0.9" fill="#222"/></svg>
<span class="t" style="left:99.6px;top:994px;font-size:11px;line-height:15px;color:#333;"><span class="c" style="width:21.12px"><span class="k" style="transform:scaleX(0.960)">勾配</span></span><span class="a">3158</span></span>
<div class="abs" style="left:66.1px;top:1014px;width:105.7px;height:19.6px;background:#f1f1f1;"></div>
<svg class="abs" style="left:68.5px;top:1016px" width="17" height="16" viewBox="0 0 17 16"><path d="M1 14.5V6.5Q1 1.5 6 1.5h3Q15.5 2.5 15.5 9v3l-2.5 2.5z" fill="#dadada" stroke="#555" stroke-width="1" stroke-linejoin="round"/><path d="M8.5 1.2Q15.8 2 15.8 9.5l-2.6 1.2Q13 4.5 7.2 3.6z" fill="#4f9de0"/></svg>
<span class="t" style="left:99.6px;top:1018px;font-size:11px;line-height:15px;color:#333;"><span class="c" style="width:37.32px"><span class="k" style="transform:scaleX(0.681)">フィレット</span></span><span class="a">3184</span></span>
<div class="abs" style="left:66.1px;top:1038px;width:105.7px;height:19.6px;background:#f1f1f1;"></div>
<svg class="abs" style="left:68.5px;top:1040px" width="17" height="16" viewBox="0 0 17 16"><path d="M1 14.5V6.5Q1 1.5 6 1.5h3Q15.5 2.5 15.5 9v3l-2.5 2.5z" fill="#dadada" stroke="#555" stroke-width="1" stroke-linejoin="round"/><path d="M8.5 1.2Q15.8 2 15.8 9.5l-2.6 1.2Q13 4.5 7.2 3.6z" fill="#4f9de0"/></svg>
<span class="t" style="left:99.6px;top:1042px;font-size:11px;line-height:15px;color:#333;"><span class="c" style="width:37.32px"><span class="k" style="transform:scaleX(0.681)">フィレット</span></span><span class="a">3187</span></span>
<div class="abs" style="left:66.1px;top:1062px;width:105.7px;height:19.6px;background:#f1f1f1;"></div>
<svg class="abs" style="left:68.5px;top:1064px" width="17" height="16" viewBox="0 0 17 16"><path d="M1 14.5V6.5Q1 1.5 6 1.5h3Q15.5 2.5 15.5 9v3l-2.5 2.5z" fill="#dadada" stroke="#555" stroke-width="1" stroke-linejoin="round"/><path d="M8.5 1.2Q15.8 2 15.8 9.5l-2.6 1.2Q13 4.5 7.2 3.6z" fill="#4f9de0"/></svg>
<span class="t" style="left:99.6px;top:1066px;font-size:11px;line-height:15px;color:#333;"><span class="c" style="width:37.32px"><span class="k" style="transform:scaleX(0.681)">フィレット</span></span><span class="a">3188</span></span>
<div class="abs" style="left:66.1px;top:1086px;width:105.7px;height:19.6px;background:#f1f1f1;"></div>
<svg class="abs" style="left:68.5px;top:1088px" width="17" height="16" viewBox="0 0 17 16"><path d="M1 14.5V6.5Q1 1.5 6 1.5h3Q15.5 2.5 15.5 9v3l-2.5 2.5z" fill="#dadada" stroke="#555" stroke-width="1" stroke-linejoin="round"/><path d="M8.5 1.2Q15.8 2 15.8 9.5l-2.6 1.2Q13 4.5 7.2 3.6z" fill="#4f9de0"/></svg>
<span class="t" style="left:99.6px;top:1090px;font-size:11px;line-height:15px;color:#333;"><span class="c" style="width:37.32px"><span class="k" style="transform:scaleX(0.681)">フィレット</span></span><span class="a">3189</span></span>
<div class="abs" style="left:12px;top:1131px;width:300px;height:25px;box-sizing:border-box;border:1px solid #c3c3c3;background:#f2f2f2"></div>
<span class="t" style="left:37.2px;top:1137px;font-size:11px;line-height:15px;color:#555;transform:scaleX(0.714);">コメント</span>
<svg class="abs" style="left:290px;top:1138px" width="11" height="11" viewBox="0 0 11 11"><circle cx="5.5" cy="5.5" r="5.2" fill="#1e1e1e"/><path d="M2.6 5.5h5.8M5.5 2.6v5.8" stroke="#f2f2f2" stroke-width="1.5"/></svg>
<div class="abs" style="left:0px;top:1160px;width:1928px;height:8px;background:#0f0f0f;"></div>
<div class="abs" style="left:56px;top:1160.5px;width:288px;height:8px;background:#f0f0f0;"></div>
<div class="abs" style="left:56px;top:1160px;width:288px;height:1px;background:#cfcfcf;"></div>
<div class="abs" style="left:640px;top:1160px;width:48px;height:8px;background:#333;"></div>
<div class="abs" style="left:1830px;top:1166.5px;width:3px;height:1.5px;background:#ddd;"></div>
<div class="abs" style="left:1836px;top:1166.5px;width:2px;height:1.5px;background:#ddd;"></div>
<div class="abs" style="left:1841px;top:1166.5px;width:2px;height:1.5px;background:#ddd;"></div>
<div class="abs" style="left:1912.5px;top:1160px;width:1px;height:8px;background:#666;"></div>
<div class="abs" style="left:850px;top:1130px;width:237px;height:23.8px;background:#f0f0f0;"></div>
<svg class="abs" style="left:852.6px;top:1133px" width="17" height="17" viewBox="0 0 17 17"><ellipse cx="8.4" cy="9.8" rx="7.2" ry="2.9" fill="none" stroke="#333" stroke-width="1.3"/><path d="M7.2 16.4V4.2H5.6L8.4 0.6 11.2 4.2H9.6V16.4z" fill="#fff" stroke="#333" stroke-width="0.9" stroke-linejoin="round"/><path d="M2.4 11.6L5.4 9.6 5.6 13.4z" fill="#222"/></svg>
<svg class="abs" style="left:874.6px;top:1139.2px" width="6" height="5" viewBox="0 0 6 5"><path d="M0.2 0.3h5.4L2.9 4z" fill="#222"/></svg>
<svg class="abs" style="left:885.8px;top:1133px" width="17" height="17" viewBox="0 0 17 17"><path d="M2.4 5L5.4 1.2 8 3.6 12.6 1 12.8 5z" fill="#a8adb6" stroke="#555" stroke-width="0.8"/><rect x="0.7" y="5.4" width="15.2" height="10.4" rx="1" fill="#fff" stroke="#3a3f4a" stroke-width="1.1"/><rect x="4" y="9" width="8.6" height="3.6" fill="#a8b0c0" stroke="#3a3f4a" stroke-width="0.9"/></svg>
<svg class="abs" style="left:911.6px;top:1133px" width="17" height="17" viewBox="0 0 17 17"><path d="M5.6 16.2Q3.6 13.6 1 10.6Q0.4 9.2 1.8 9Q3.4 9.2 5 11.4V3.4Q5.6 2 6.8 3.2V8.4V1.6Q7.8 0.2 8.8 1.6V8.2V2.2Q9.8 0.8 10.8 2.2V8.6V4Q12 2.8 12.8 4.2V11.4Q12.8 14.4 11.4 16.2z" fill="#fff" stroke="#333" stroke-width="0.9" stroke-linejoin="round"/></svg>
<svg class="abs" style="left:937.6px;top:1133px" width="18" height="17" viewBox="0 0 18 17"><defs><linearGradient id="zg" x1="0" y1="0" x2="0" y2="1"><stop offset="0" stop-color="#fff"/><stop offset="1" stop-color="#b9d4d2"/></linearGradient></defs><circle cx="5.8" cy="7.6" r="4.8" fill="url(#zg)" stroke="#3a3f4a" stroke-width="1.2"/><path d="M9.4 11.4L13 15.2" stroke="#333" stroke-width="2.4" stroke-linecap="round"/><path d="M12 3.2h4.4M14.2 1v4.4M12 7.4h4.4" stroke="#333" stroke-width="0.9"/></svg>
<svg class="abs" style="left:963.6px;top:1133px" width="18" height="17" viewBox="0 0 18 17"><rect x="0.6" y="0.8" width="14.6" height="14" fill="none" stroke="#333" stroke-width="0.9" stroke-dasharray="2 1.4"/><circle cx="7.2" cy="6.6" r="6" fill="url(#zg)" stroke="#3a3f4a" stroke-width="1.2"/><path d="M11.6 11.2L15.4 15.2" stroke="#333" stroke-width="2.6" stroke-linecap="round"/></svg>
<svg class="abs" style="left:985.6px;top:1139.2px" width="6" height="5" viewBox="0 0 6 5"><path d="M0.2 0.3h5.4L2.9 4z" fill="#222"/></svg>
<svg class="abs" style="left:996.8px;top:1133px" width="17" height="17" viewBox="0 0 17 17"><rect x="0.8" y="0.8" width="15" height="11.6" rx="1" fill="#fff" stroke="#3a3f4a" stroke-width="1.2"/><rect x="2.8" y="2.8" width="11" height="7.6" fill="#8fb1e0" stroke="#3b5f9d" stroke-width="0.8"/><path d="M6.6 12.6h3.4v1.4h1.6v1.4H5v-1.4h1.6z" fill="#ddd" stroke="#555" stroke-width="0.7"/></svg>
<svg class="abs" style="left:1015.2px;top:1139.2px" width="6" height="5" viewBox="0 0 6 5"><path d="M0.2 0.3h5.4L2.9 4z" fill="#222"/></svg>
<svg class="abs" style="left:1027.8px;top:1133px" width="17" height="17" viewBox="0 0 17 17"><rect x="0.4" y="0.4" width="15.4" height="15.4" fill="#6e7078"/><rect x="1.4" y="1.4" width="2.6" height="2.6" fill="#d6d7db"/><rect x="1.4" y="4.7" width="2.6" height="2.6" fill="#d6d7db"/><rect x="1.4" y="8" width="2.6" height="2.6" fill="#d6d7db"/><rect x="1.4" y="11.3" width="2.6" height="2.6" fill="#d6d7db"/><rect x="4.7" y="1.4" width="2.6" height="2.6" fill="#d6d7db"/><rect x="4.7" y="4.7" width="2.6" height="2.6" fill="#d6d7db"/><rect x="4.7" y="8" width="2.6" height="2.6" fill="#d6d7db"/><rect x="4.7" y="11.3" width="2.6" height="2.6" fill="#d6d7db"/><rect x="8" y="1.4" width="2.6" height="2.6" fill="#d6d7db"/><rect x="8" y="4.7" width="2.6" height="2.6" fill="#d6d7db"/><rect x="8" y="8" width="2.6" height="2.6" fill="#d6d7db"/><rect x="8" y="11.3" width="2.6" height="2.6" fill="#d6d7db"/><rect x="11.3" y="1.4" width="2.6" height="2.6" fill="#d6d7db"/><rect x="11.3" y="4.7" width="2.6" height="2.6" fill="#d6d7db"/><rect x="11.3" y="8" width="2.6" height="2.6" fill="#d6d7db"/><rect x="11.3" y="11.3" width="2.6" height="2.6" fill="#d6d7db"/></svg>
<svg class="abs" style="left:1046.2px;top:1139.2px" width="6" height="5" viewBox="0 0 6 5"><path d="M0.2 0.3h5.4L2.9 4z" fill="#222"/></svg>
<svg class="abs" style="left:1058.6px;top:1134.6px" width="16" height="14" viewBox="0 0 16 14"><rect x="0.5" y="0.5" width="14.6" height="12.6" rx="1" fill="#cfdcf2" stroke="#2f4f8f" stroke-width="1"/><path d="M7.8 0.5V13.1M0.5 6.8H15.1" stroke="#2f4f8f" stroke-width="1.2"/><rect x="2.4" y="2.4" width="3.6" height="2.6" fill="#8fa9d8"/><rect x="9.6" y="2.4" width="3.6" height="2.6" fill="#8fa9d8"/><rect x="2.4" y="8.6" width="3.6" height="2.6" fill="#8fa9d8"/><rect x="9.6" y="8.6" width="3.6" height="2.6" fill="#8fa9d8"/></svg>
<svg class="abs" style="left:1077.2px;top:1139.2px" width="6" height="5" viewBox="0 0 6 5"><path d="M0.2 0.3h5.4L2.9 4z" fill="#222"/></svg>
<svg class="abs" style="left:0;top:0" width="1928" height="300" viewBox="0 0 1928 300"><defs><filter id="vcb" x="-50%" y="-50%" width="200%" height="200%"><feGaussianBlur stdDeviation="4"/></filter></defs><polygon points="1838.0,226.0 1870.0,248.0 1902.0,222.0 1890.0,210.0 1850.0,212.0" fill="#000" opacity="0.16" filter="url(#vcb)"/><polygon points="1829.3,184.9 1862.7,166.4 1899.1,183.9 1866.3,207.5" fill="#f2f2f2" fill-opacity="0.9"/><polygon points="1829.3,184.9 1866.3,207.5 1866.8,244.0 1832.9,222.4" fill="#ececec" fill-opacity="0.9"/><polygon points="1866.3,207.5 1899.1,183.9 1896.1,218.3 1866.8,244.0" fill="#e4e4e4" fill-opacity="0.9"/><polygon points="1829.3,184.9 1862.7,166.4 1899.1,183.9 1896.1,218.3 1866.8,244.0 1832.9,222.4" fill="none" stroke="#555" stroke-width="0.7" stroke-dasharray="4 2.2"/><polyline points="1829.3,184.9 1866.3,207.5 1899.1,183.9" fill="none" stroke="#555" stroke-width="0.7" stroke-dasharray="4 2.2"/><polyline points="1866.3,207.5 1866.8,244.0" fill="none" stroke="#555" stroke-width="0.7" stroke-dasharray="4 2.2"/><polyline points="1832.9,222.4 1827.3,180.0" fill="none" stroke="#4a4af0" stroke-width="1.6"/><polyline points="1832.9,222.4 1872.4,249.1" fill="none" stroke="#f08a8a" stroke-width="1.8"/><text transform="matrix(1.8200 0.8750 -1.6700 0.9250 1862.70 166.40)" x="10" y="14.2" text-anchor="middle" font-size="10.5" fill="#9a9ea6" style="font-family:'Liberation Sans','Noto Sans CJK JP',sans-serif">上</text><text transform="matrix(1.8500 1.1300 0.1800 1.8750 1829.30 184.90)" x="10" y="14.2" text-anchor="middle" font-size="11" fill="#9a9ea6" style="font-family:'Liberation Sans','Noto Sans CJK JP',sans-serif">前</text><text transform="matrix(1.6400 -1.1800 0.0250 1.8250 1866.30 207.50)" x="10" y="14.2" text-anchor="middle" font-size="11" fill="#9a9ea6" style="font-family:'Liberation Sans','Noto Sans CJK JP',sans-serif">右</text><text x="1821.8" y="177.2" font-size="13.5" fill="#5c5cf7" style="font-family:'Liberation Sans','Noto Sans CJK JP',sans-serif">Z</text><text x="1874.6" y="259" font-size="13.5" fill="#f47070" style="font-family:'Liberation Sans','Noto Sans CJK JP',sans-serif">X</text></svg>
</body></html>
